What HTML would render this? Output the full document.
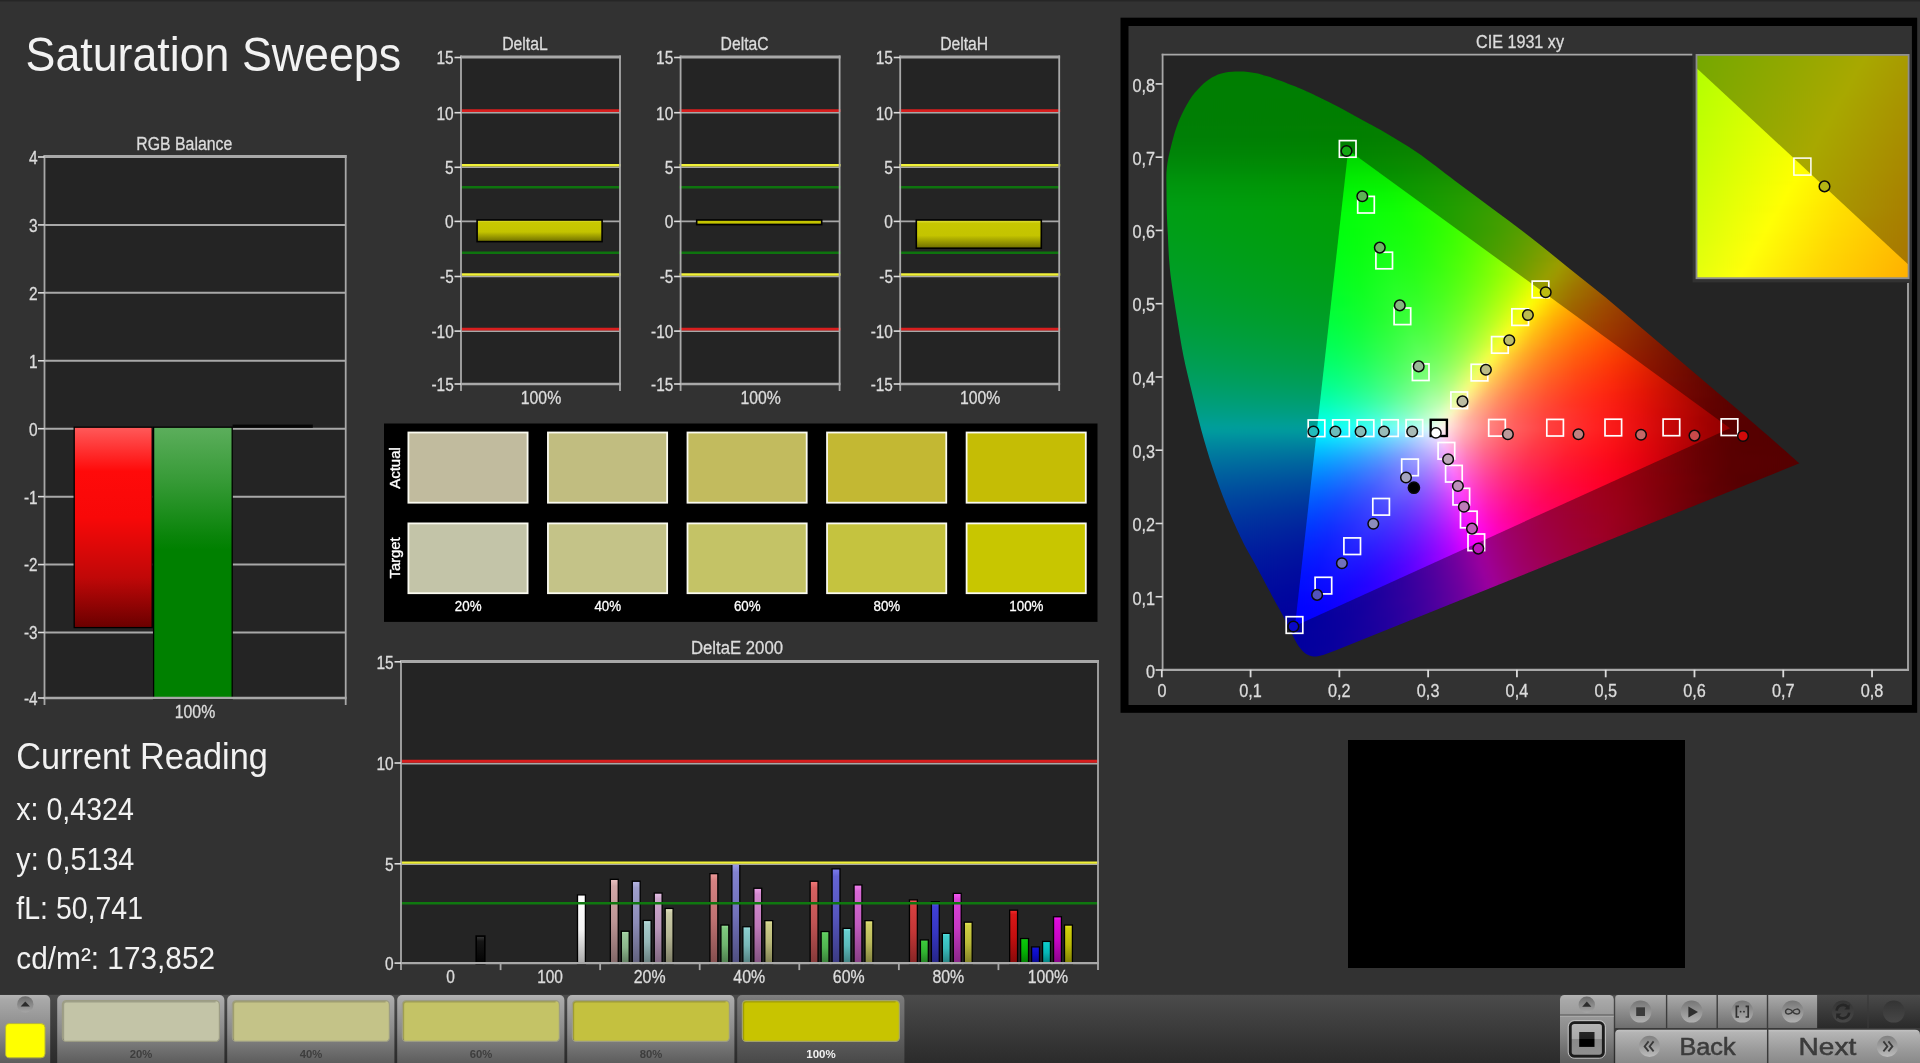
<!DOCTYPE html>
<html lang="en"><head><meta charset="utf-8"><title>Saturation Sweeps</title>
<style>html,body{margin:0;padding:0;background:#323232;overflow:hidden}svg{display:block}text{font-family:'Liberation Sans', sans-serif}</style></head>
<body>
<svg width="1920" height="1063" viewBox="0 0 1920 1063" style="will-change:transform">
<defs>
<linearGradient id="v1" x1="0" y1="0" x2="0" y2="1"><stop offset="0" stop-color="#ff5a5a"/><stop offset="0.22" stop-color="#ff0a0a"/><stop offset="0.45" stop-color="#f80808"/><stop offset="0.75" stop-color="#c00808"/><stop offset="1" stop-color="#6a0000"/></linearGradient>
<linearGradient id="v2" x1="0" y1="0" x2="0" y2="1"><stop offset="0" stop-color="#5cae5c"/><stop offset="0.2" stop-color="#369a36"/><stop offset="0.4" stop-color="#0a840a"/><stop offset="0.45" stop-color="#008000"/><stop offset="1" stop-color="#008000"/></linearGradient>
<linearGradient id="v3" x1="0" y1="0" x2="0" y2="1"><stop offset="0" stop-color="#e6e646"/><stop offset="0.12" stop-color="#c8c800"/><stop offset="0.55" stop-color="#c4c400"/><stop offset="1" stop-color="#6e6e00"/></linearGradient>
<linearGradient id="v4" x1="0" y1="0" x2="0" y2="1"><stop offset="0" stop-color="#e6e646"/><stop offset="0.12" stop-color="#c8c800"/><stop offset="0.55" stop-color="#c4c400"/><stop offset="1" stop-color="#6e6e00"/></linearGradient>
<linearGradient id="v5" x1="0" y1="0" x2="0" y2="1"><stop offset="0" stop-color="#e6e646"/><stop offset="0.12" stop-color="#c8c800"/><stop offset="0.55" stop-color="#c4c400"/><stop offset="1" stop-color="#6e6e00"/></linearGradient>
<linearGradient id="v6" x1="0" y1="0" x2="0" y2="1"><stop offset="0" stop-color="#3c3c3c"/><stop offset="0.18" stop-color="#161616"/><stop offset="1" stop-color="#020202"/></linearGradient>
<linearGradient id="v7" x1="0" y1="0" x2="0" y2="1"><stop offset="0" stop-color="#ffffff"/><stop offset="0.5" stop-color="#f4f4f4"/><stop offset="1" stop-color="#a8a8a8"/></linearGradient>
<linearGradient id="v8" x1="0" y1="0" x2="0" y2="1"><stop offset="0" stop-color="#ebc1c1"/><stop offset="0.08" stop-color="#d1a7a7"/><stop offset="0.5" stop-color="#bc9595"/><stop offset="1" stop-color="#806666"/></linearGradient>
<linearGradient id="v9" x1="0" y1="0" x2="0" y2="1"><stop offset="0" stop-color="#b5e3b5"/><stop offset="0.08" stop-color="#9cc99c"/><stop offset="0.5" stop-color="#8bb58b"/><stop offset="1" stop-color="#5e7b5e"/></linearGradient>
<linearGradient id="v10" x1="0" y1="0" x2="0" y2="1"><stop offset="0" stop-color="#b7b7e5"/><stop offset="0.08" stop-color="#9e9ecb"/><stop offset="0.5" stop-color="#8c8cb7"/><stop offset="1" stop-color="#60607c"/></linearGradient>
<linearGradient id="v11" x1="0" y1="0" x2="0" y2="1"><stop offset="0" stop-color="#c1e5e5"/><stop offset="0.08" stop-color="#a7cbcb"/><stop offset="0.5" stop-color="#95b7b7"/><stop offset="1" stop-color="#667c7c"/></linearGradient>
<linearGradient id="v12" x1="0" y1="0" x2="0" y2="1"><stop offset="0" stop-color="#e7c1e7"/><stop offset="0.08" stop-color="#cda7cd"/><stop offset="0.5" stop-color="#b895b8"/><stop offset="1" stop-color="#7e667e"/></linearGradient>
<linearGradient id="v13" x1="0" y1="0" x2="0" y2="1"><stop offset="0" stop-color="#e5e5c1"/><stop offset="0.08" stop-color="#cbcba7"/><stop offset="0.5" stop-color="#b7b795"/><stop offset="1" stop-color="#7c7c66"/></linearGradient>
<linearGradient id="v14" x1="0" y1="0" x2="0" y2="1"><stop offset="0" stop-color="#ef9a9a"/><stop offset="0.08" stop-color="#d58181"/><stop offset="0.5" stop-color="#bf7272"/><stop offset="1" stop-color="#824e4e"/></linearGradient>
<linearGradient id="v15" x1="0" y1="0" x2="0" y2="1"><stop offset="0" stop-color="#98e398"/><stop offset="0.08" stop-color="#7fc97f"/><stop offset="0.5" stop-color="#70b570"/><stop offset="1" stop-color="#4c7b4c"/></linearGradient>
<linearGradient id="v16" x1="0" y1="0" x2="0" y2="1"><stop offset="0" stop-color="#9a9ae9"/><stop offset="0.08" stop-color="#8181cf"/><stop offset="0.5" stop-color="#7272ba"/><stop offset="1" stop-color="#4e4e7f"/></linearGradient>
<linearGradient id="v17" x1="0" y1="0" x2="0" y2="1"><stop offset="0" stop-color="#a2e7e7"/><stop offset="0.08" stop-color="#89cdcd"/><stop offset="0.5" stop-color="#79b8b8"/><stop offset="1" stop-color="#527e7e"/></linearGradient>
<linearGradient id="v18" x1="0" y1="0" x2="0" y2="1"><stop offset="0" stop-color="#eda2e9"/><stop offset="0.08" stop-color="#d389cf"/><stop offset="0.5" stop-color="#be79ba"/><stop offset="1" stop-color="#81527f"/></linearGradient>
<linearGradient id="v19" x1="0" y1="0" x2="0" y2="1"><stop offset="0" stop-color="#e7e7a2"/><stop offset="0.08" stop-color="#cdcd89"/><stop offset="0.5" stop-color="#b8b879"/><stop offset="1" stop-color="#7e7e52"/></linearGradient>
<linearGradient id="v20" x1="0" y1="0" x2="0" y2="1"><stop offset="0" stop-color="#f17a7a"/><stop offset="0.08" stop-color="#d76161"/><stop offset="0.5" stop-color="#c15454"/><stop offset="1" stop-color="#843939"/></linearGradient>
<linearGradient id="v21" x1="0" y1="0" x2="0" y2="1"><stop offset="0" stop-color="#76e376"/><stop offset="0.08" stop-color="#5dc95d"/><stop offset="0.5" stop-color="#50b550"/><stop offset="1" stop-color="#377b37"/></linearGradient>
<linearGradient id="v22" x1="0" y1="0" x2="0" y2="1"><stop offset="0" stop-color="#7c7ced"/><stop offset="0.08" stop-color="#6363d3"/><stop offset="0.5" stop-color="#5656be"/><stop offset="1" stop-color="#3a3a81"/></linearGradient>
<linearGradient id="v23" x1="0" y1="0" x2="0" y2="1"><stop offset="0" stop-color="#81e9e9"/><stop offset="0.08" stop-color="#68cfcf"/><stop offset="0.5" stop-color="#5bbaba"/><stop offset="1" stop-color="#3e7f7f"/></linearGradient>
<linearGradient id="v24" x1="0" y1="0" x2="0" y2="1"><stop offset="0" stop-color="#f181ef"/><stop offset="0.08" stop-color="#d768d5"/><stop offset="0.5" stop-color="#c15bbf"/><stop offset="1" stop-color="#843e82"/></linearGradient>
<linearGradient id="v25" x1="0" y1="0" x2="0" y2="1"><stop offset="0" stop-color="#e9e981"/><stop offset="0.08" stop-color="#cfcf68"/><stop offset="0.5" stop-color="#baba5b"/><stop offset="1" stop-color="#7f7f3e"/></linearGradient>
<linearGradient id="v26" x1="0" y1="0" x2="0" y2="1"><stop offset="0" stop-color="#f35959"/><stop offset="0.08" stop-color="#d84040"/><stop offset="0.5" stop-color="#c33636"/><stop offset="1" stop-color="#852525"/></linearGradient>
<linearGradient id="v27" x1="0" y1="0" x2="0" y2="1"><stop offset="0" stop-color="#53e353"/><stop offset="0.08" stop-color="#3bc93b"/><stop offset="0.5" stop-color="#31b531"/><stop offset="1" stop-color="#217b21"/></linearGradient>
<linearGradient id="v28" x1="0" y1="0" x2="0" y2="1"><stop offset="0" stop-color="#5959f1"/><stop offset="0.08" stop-color="#4040d7"/><stop offset="0.5" stop-color="#3636c1"/><stop offset="1" stop-color="#252584"/></linearGradient>
<linearGradient id="v29" x1="0" y1="0" x2="0" y2="1"><stop offset="0" stop-color="#5be9e9"/><stop offset="0.08" stop-color="#42cfcf"/><stop offset="0.5" stop-color="#38baba"/><stop offset="1" stop-color="#267f7f"/></linearGradient>
<linearGradient id="v30" x1="0" y1="0" x2="0" y2="1"><stop offset="0" stop-color="#f55bf3"/><stop offset="0.08" stop-color="#da42d8"/><stop offset="0.5" stop-color="#c538c3"/><stop offset="1" stop-color="#862685"/></linearGradient>
<linearGradient id="v31" x1="0" y1="0" x2="0" y2="1"><stop offset="0" stop-color="#e9e95b"/><stop offset="0.08" stop-color="#cfcf42"/><stop offset="0.5" stop-color="#baba38"/><stop offset="1" stop-color="#7f7f26"/></linearGradient>
<linearGradient id="v32" x1="0" y1="0" x2="0" y2="1"><stop offset="0" stop-color="#f32f2f"/><stop offset="0.08" stop-color="#d81717"/><stop offset="0.5" stop-color="#c30f0f"/><stop offset="1" stop-color="#850a0a"/></linearGradient>
<linearGradient id="v33" x1="0" y1="0" x2="0" y2="1"><stop offset="0" stop-color="#23e123"/><stop offset="0.08" stop-color="#0bc70b"/><stop offset="0.5" stop-color="#05b305"/><stop offset="1" stop-color="#037a03"/></linearGradient>
<linearGradient id="v34" x1="0" y1="0" x2="0" y2="1"><stop offset="0" stop-color="#2b2bf1"/><stop offset="0.08" stop-color="#1313d7"/><stop offset="0.5" stop-color="#0c0cc1"/><stop offset="1" stop-color="#080884"/></linearGradient>
<linearGradient id="v35" x1="0" y1="0" x2="0" y2="1"><stop offset="0" stop-color="#23e5e5"/><stop offset="0.08" stop-color="#0bcbcb"/><stop offset="0.5" stop-color="#05b7b7"/><stop offset="1" stop-color="#037c7c"/></linearGradient>
<linearGradient id="v36" x1="0" y1="0" x2="0" y2="1"><stop offset="0" stop-color="#f623f5"/><stop offset="0.08" stop-color="#dc0bda"/><stop offset="0.5" stop-color="#c605c5"/><stop offset="1" stop-color="#870386"/></linearGradient>
<linearGradient id="v37" x1="0" y1="0" x2="0" y2="1"><stop offset="0" stop-color="#e9e923"/><stop offset="0.08" stop-color="#cfcf0b"/><stop offset="0.5" stop-color="#baba05"/><stop offset="1" stop-color="#7f7f03"/></linearGradient>
<filter id="vb" x="-2%" y="-2%" width="104%" height="104%" color-interpolation-filters="sRGB"><feGaussianBlur stdDeviation="0 1.7"/></filter>
<clipPath id="ch"><path d="M1323.3 655.1C1322.0 655.4 1318.3 656.6 1315.8 656.6C1313.3 656.6 1310.6 656.1 1308.3 655.1C1306.0 654.1 1304.2 652.7 1302.2 650.6C1300.2 648.5 1298.2 645.7 1296.2 642.3C1294.2 638.9 1292.5 634.8 1290.2 630.3C1288.0 625.8 1285.5 620.6 1282.7 615.3C1279.9 610.0 1276.9 604.7 1273.6 598.7C1270.3 592.7 1266.6 585.6 1263.1 579.1C1259.6 572.6 1256.1 566.1 1252.6 559.6C1249.1 553.1 1246.3 549.0 1242.0 540.0C1237.7 531.0 1231.5 517.7 1226.6 505.7C1221.7 493.7 1216.9 480.6 1212.7 468.1C1208.5 455.6 1204.9 443.0 1201.4 430.5C1198.0 418.0 1195.0 405.4 1192.0 392.9C1189.0 380.3 1185.8 367.8 1183.3 355.2C1180.8 342.6 1178.9 330.0 1176.9 317.6C1174.9 305.2 1172.6 290.7 1171.3 280.8C1170.0 270.9 1169.6 265.7 1169.0 258.2C1168.4 250.7 1168.3 243.1 1167.9 235.6C1167.5 228.1 1167.0 220.5 1166.8 213.0C1166.6 205.5 1166.5 198.0 1166.5 190.5C1166.5 183.0 1166.0 175.4 1166.8 167.9C1167.6 160.4 1169.4 152.8 1171.3 145.3C1173.2 137.8 1175.1 130.2 1178.1 122.7C1181.1 115.2 1185.7 106.2 1189.4 100.2C1193.2 94.2 1196.8 90.4 1200.6 86.6C1204.3 82.8 1207.8 80.0 1211.9 77.6C1216.1 75.2 1219.5 73.4 1225.5 72.4C1231.5 71.5 1240.9 71.2 1248.1 71.9C1255.2 72.6 1260.5 74.0 1268.4 76.4C1276.3 78.9 1287.2 83.2 1295.5 86.6C1303.8 90.0 1310.6 93.2 1318.1 96.8C1325.6 100.4 1333.1 104.1 1340.6 108.1C1348.1 112.0 1355.7 116.4 1363.2 120.5C1370.7 124.6 1376.7 127.5 1385.8 132.9C1394.9 138.3 1406.0 144.7 1417.6 152.7C1429.2 160.7 1442.7 171.5 1455.2 180.9C1467.8 190.3 1480.4 199.7 1492.9 209.1C1505.5 218.5 1518.0 227.6 1530.5 237.3C1543.0 247.0 1555.6 257.4 1568.1 267.4C1580.6 277.4 1593.2 287.1 1605.7 297.5C1618.2 307.9 1630.9 318.8 1643.4 329.5C1656.0 340.2 1668.5 350.8 1681.0 361.5C1693.5 372.2 1706.1 382.9 1718.6 393.5C1731.1 404.1 1742.7 413.8 1756.2 425.4C1769.7 437.0 1792.3 457.0 1799.5 463.3L1335.4 650.6Z"/></clipPath>
<clipPath id="ct"><polygon points="1348.2,149.9 1730.0,428.2 1295.0,626.0"/></clipPath>
<linearGradient id="h7" gradientUnits="userSpaceOnUse" x1="1185" x2="1332" y1="0" y2="0"><stop offset="0.000" stop-color="#007e03"/><stop offset="1.000" stop-color="#007e00"/></linearGradient>
<linearGradient id="h8" gradientUnits="userSpaceOnUse" x1="1183" x2="1340" y1="0" y2="0"><stop offset="0.000" stop-color="#007e03"/><stop offset="1.000" stop-color="#007e00"/></linearGradient>
<linearGradient id="h9" gradientUnits="userSpaceOnUse" x1="1181" x2="1347" y1="0" y2="0"><stop offset="0.000" stop-color="#007e03"/><stop offset="1.000" stop-color="#007e00"/></linearGradient>
<linearGradient id="h10" gradientUnits="userSpaceOnUse" x1="1179" x2="1354" y1="0" y2="0"><stop offset="0.000" stop-color="#007e04"/><stop offset="1.000" stop-color="#007e00"/></linearGradient>
<linearGradient id="h11" gradientUnits="userSpaceOnUse" x1="1177" x2="1362" y1="0" y2="0"><stop offset="0.000" stop-color="#007e04"/><stop offset="1.000" stop-color="#007e00"/></linearGradient>
<linearGradient id="h12" gradientUnits="userSpaceOnUse" x1="1175" x2="1369" y1="0" y2="0"><stop offset="0.000" stop-color="#007e04"/><stop offset="1.000" stop-color="#017e00"/></linearGradient>
<linearGradient id="h13" gradientUnits="userSpaceOnUse" x1="1174" x2="1376" y1="0" y2="0"><stop offset="0.000" stop-color="#007e05"/><stop offset="1.000" stop-color="#027e00"/></linearGradient>
<linearGradient id="h14" gradientUnits="userSpaceOnUse" x1="1172" x2="1384" y1="0" y2="0"><stop offset="0.000" stop-color="#007f05"/><stop offset="1.000" stop-color="#037f00"/></linearGradient>
<linearGradient id="h15" gradientUnits="userSpaceOnUse" x1="1171" x2="1391" y1="0" y2="0"><stop offset="0.000" stop-color="#007f06"/><stop offset="0.818" stop-color="#007f00"/><stop offset="1.000" stop-color="#047f00"/></linearGradient>
<linearGradient id="h16" gradientUnits="userSpaceOnUse" x1="1170" x2="1397" y1="0" y2="0"><stop offset="0.000" stop-color="#007f06"/><stop offset="0.793" stop-color="#007f00"/><stop offset="1.000" stop-color="#057f00"/></linearGradient>
<linearGradient id="h17" gradientUnits="userSpaceOnUse" x1="1169" x2="1404" y1="0" y2="0"><stop offset="0.000" stop-color="#008007"/><stop offset="0.774" stop-color="#008000"/><stop offset="1.000" stop-color="#068000"/></linearGradient>
<linearGradient id="h18" gradientUnits="userSpaceOnUse" x1="1168" x2="1410" y1="0" y2="0"><stop offset="0.000" stop-color="#008107"/><stop offset="0.760" stop-color="#008100"/><stop offset="1.000" stop-color="#088100"/></linearGradient>
<linearGradient id="h19" gradientUnits="userSpaceOnUse" x1="1167" x2="1417" y1="0" y2="0"><stop offset="0.000" stop-color="#008308"/><stop offset="0.736" stop-color="#008300"/><stop offset="1.000" stop-color="#0a8300"/></linearGradient>
<linearGradient id="h20" gradientUnits="userSpaceOnUse" x1="1166" x2="1422" y1="0" y2="0"><stop offset="0.000" stop-color="#008408"/><stop offset="0.727" stop-color="#008400"/><stop offset="1.000" stop-color="#0b8400"/></linearGradient>
<linearGradient id="h21" gradientUnits="userSpaceOnUse" x1="1165" x2="1428" y1="0" y2="0"><stop offset="0.000" stop-color="#008609"/><stop offset="0.715" stop-color="#008600"/><stop offset="1.000" stop-color="#0d8600"/></linearGradient>
<linearGradient id="h22" gradientUnits="userSpaceOnUse" x1="1165" x2="1433" y1="0" y2="0"><stop offset="0.000" stop-color="#008809"/><stop offset="0.716" stop-color="#018800"/><stop offset="1.000" stop-color="#0f8800"/></linearGradient>
<linearGradient id="h23" gradientUnits="userSpaceOnUse" x1="1164" x2="1439" y1="0" y2="0"><stop offset="0.000" stop-color="#008a0a"/><stop offset="0.713" stop-color="#018a00"/><stop offset="1.000" stop-color="#118a00"/></linearGradient>
<linearGradient id="h24" gradientUnits="userSpaceOnUse" x1="1164" x2="1444" y1="0" y2="0"><stop offset="0.000" stop-color="#008c0b"/><stop offset="0.657" stop-color="#008c01"/><stop offset="0.821" stop-color="#068c00"/><stop offset="1.000" stop-color="#148c00"/></linearGradient>
<linearGradient id="h25" gradientUnits="userSpaceOnUse" x1="1163" x2="1449" y1="0" y2="0"><stop offset="0.000" stop-color="#008e0c"/><stop offset="0.643" stop-color="#008e01"/><stop offset="0.811" stop-color="#078e00"/><stop offset="1.000" stop-color="#168e00"/></linearGradient>
<linearGradient id="h26" gradientUnits="userSpaceOnUse" x1="1163" x2="1454" y1="0" y2="0"><stop offset="0.000" stop-color="#00910c"/><stop offset="0.632" stop-color="#009101"/><stop offset="0.804" stop-color="#079100"/><stop offset="1.000" stop-color="#199100"/></linearGradient>
<linearGradient id="h27" gradientUnits="userSpaceOnUse" x1="1163" x2="1460" y1="0" y2="0"><stop offset="0.000" stop-color="#00930d"/><stop offset="0.620" stop-color="#009301"/><stop offset="0.801" stop-color="#099300"/><stop offset="1.000" stop-color="#1c9300"/></linearGradient>
<linearGradient id="h28" gradientUnits="userSpaceOnUse" x1="1163" x2="1465" y1="0" y2="0"><stop offset="0.000" stop-color="#00950e"/><stop offset="0.609" stop-color="#009502"/><stop offset="0.795" stop-color="#0a9500"/><stop offset="1.000" stop-color="#1f9500"/></linearGradient>
<linearGradient id="h29" gradientUnits="userSpaceOnUse" x1="1163" x2="1470" y1="0" y2="0"><stop offset="0.000" stop-color="#00970f"/><stop offset="0.599" stop-color="#009702"/><stop offset="0.782" stop-color="#0a9700"/><stop offset="1.000" stop-color="#239700"/></linearGradient>
<linearGradient id="h30" gradientUnits="userSpaceOnUse" x1="1163" x2="1476" y1="0" y2="0"><stop offset="0.000" stop-color="#009810"/><stop offset="0.588" stop-color="#019803"/><stop offset="0.767" stop-color="#0a9800"/><stop offset="1.000" stop-color="#279800"/></linearGradient>
<linearGradient id="h31" gradientUnits="userSpaceOnUse" x1="1164" x2="1481" y1="0" y2="0"><stop offset="0.000" stop-color="#009a11"/><stop offset="0.574" stop-color="#009a03"/><stop offset="0.763" stop-color="#0b9a00"/><stop offset="1.000" stop-color="#2b9a00"/></linearGradient>
<linearGradient id="h32" gradientUnits="userSpaceOnUse" x1="1164" x2="1486" y1="0" y2="0"><stop offset="0.000" stop-color="#009b12"/><stop offset="0.547" stop-color="#009b04"/><stop offset="0.677" stop-color="#069b03"/><stop offset="0.839" stop-color="#169b00"/><stop offset="1.000" stop-color="#309b00"/></linearGradient>
<linearGradient id="h33" gradientUnits="userSpaceOnUse" x1="1164" x2="1492" y1="0" y2="0"><stop offset="0.000" stop-color="#009c13"/><stop offset="0.537" stop-color="#009c04"/><stop offset="0.671" stop-color="#079c03"/><stop offset="0.835" stop-color="#189c00"/><stop offset="1.000" stop-color="#359c00"/></linearGradient>
<linearGradient id="h34" gradientUnits="userSpaceOnUse" x1="1164" x2="1497" y1="0" y2="0"><stop offset="0.000" stop-color="#009d14"/><stop offset="0.529" stop-color="#009d05"/><stop offset="0.667" stop-color="#079d04"/><stop offset="0.835" stop-color="#1b9d00"/><stop offset="1.000" stop-color="#399d00"/></linearGradient>
<linearGradient id="h35" gradientUnits="userSpaceOnUse" x1="1164" x2="1502" y1="0" y2="0"><stop offset="0.000" stop-color="#009e15"/><stop offset="0.515" stop-color="#009e06"/><stop offset="0.663" stop-color="#089e04"/><stop offset="0.834" stop-color="#1d9e00"/><stop offset="1.000" stop-color="#3f9e00"/></linearGradient>
<linearGradient id="h36" gradientUnits="userSpaceOnUse" x1="1164" x2="1508" y1="0" y2="0"><stop offset="0.000" stop-color="#009e15"/><stop offset="0.506" stop-color="#009e06"/><stop offset="0.657" stop-color="#099e05"/><stop offset="0.738" stop-color="#119e02"/><stop offset="0.831" stop-color="#209e00"/><stop offset="1.000" stop-color="#459e00"/></linearGradient>
<linearGradient id="h37" gradientUnits="userSpaceOnUse" x1="1164" x2="1513" y1="0" y2="0"><stop offset="0.000" stop-color="#009e16"/><stop offset="0.499" stop-color="#009e07"/><stop offset="0.659" stop-color="#0a9e05"/><stop offset="0.739" stop-color="#139e02"/><stop offset="0.831" stop-color="#239e00"/><stop offset="1.000" stop-color="#4a9e00"/></linearGradient>
<linearGradient id="h38" gradientUnits="userSpaceOnUse" x1="1164" x2="1519" y1="0" y2="0"><stop offset="0.000" stop-color="#009e17"/><stop offset="0.490" stop-color="#009e08"/><stop offset="0.654" stop-color="#0b9e06"/><stop offset="0.738" stop-color="#159e02"/><stop offset="0.828" stop-color="#269e00"/><stop offset="1.000" stop-color="#519e00"/></linearGradient>
<linearGradient id="h39" gradientUnits="userSpaceOnUse" x1="1164" x2="1524" y1="0" y2="0"><stop offset="0.000" stop-color="#009e18"/><stop offset="0.483" stop-color="#009e08"/><stop offset="0.650" stop-color="#0c9e06"/><stop offset="0.733" stop-color="#179e03"/><stop offset="0.822" stop-color="#289e00"/><stop offset="0.911" stop-color="#3d9e00"/><stop offset="1.000" stop-color="#589e00"/></linearGradient>
<linearGradient id="h40" gradientUnits="userSpaceOnUse" x1="1165" x2="1529" y1="0" y2="0"><stop offset="0.000" stop-color="#009e19"/><stop offset="0.473" stop-color="#009e09"/><stop offset="0.648" stop-color="#0d9e07"/><stop offset="0.725" stop-color="#179e03"/><stop offset="0.808" stop-color="#289e00"/><stop offset="0.907" stop-color="#419e00"/><stop offset="1.000" stop-color="#5e9e00"/></linearGradient>
<linearGradient id="h41" gradientUnits="userSpaceOnUse" x1="1165" x2="1534" y1="0" y2="0"><stop offset="0.000" stop-color="#009e1a"/><stop offset="0.466" stop-color="#009e0a"/><stop offset="0.645" stop-color="#0e9e07"/><stop offset="0.721" stop-color="#199e04"/><stop offset="0.802" stop-color="#2a9e00"/><stop offset="0.905" stop-color="#469e00"/><stop offset="1.000" stop-color="#669e00"/></linearGradient>
<linearGradient id="h42" gradientUnits="userSpaceOnUse" x1="1165" x2="1540" y1="0" y2="0"><stop offset="0.000" stop-color="#009e1b"/><stop offset="0.459" stop-color="#009e0b"/><stop offset="0.640" stop-color="#0f9e08"/><stop offset="0.720" stop-color="#1b9e04"/><stop offset="0.800" stop-color="#2e9e01"/><stop offset="0.907" stop-color="#4d9e00"/><stop offset="1.000" stop-color="#6f9e00"/></linearGradient>
<linearGradient id="h43" gradientUnits="userSpaceOnUse" x1="1165" x2="1545" y1="0" y2="0"><stop offset="0.000" stop-color="#009e1d"/><stop offset="0.453" stop-color="#009e0b"/><stop offset="0.642" stop-color="#119e08"/><stop offset="0.721" stop-color="#1e9e04"/><stop offset="0.805" stop-color="#339e01"/><stop offset="0.911" stop-color="#549e00"/><stop offset="1.000" stop-color="#779e00"/></linearGradient>
<linearGradient id="h44" gradientUnits="userSpaceOnUse" x1="1165" x2="1550" y1="0" y2="0"><stop offset="0.000" stop-color="#009e1e"/><stop offset="0.447" stop-color="#009e0c"/><stop offset="0.639" stop-color="#129e09"/><stop offset="0.722" stop-color="#219e05"/><stop offset="0.805" stop-color="#379e01"/><stop offset="0.909" stop-color="#5a9e00"/><stop offset="1.000" stop-color="#819e00"/></linearGradient>
<linearGradient id="h45" gradientUnits="userSpaceOnUse" x1="1166" x2="1554" y1="0" y2="0"><stop offset="0.000" stop-color="#009e1f"/><stop offset="0.438" stop-color="#009e0d"/><stop offset="0.639" stop-color="#149e09"/><stop offset="0.722" stop-color="#249e05"/><stop offset="0.804" stop-color="#3b9e01"/><stop offset="0.907" stop-color="#5f9e00"/><stop offset="1.000" stop-color="#899e00"/></linearGradient>
<linearGradient id="h46" gradientUnits="userSpaceOnUse" x1="1166" x2="1559" y1="0" y2="0"><stop offset="0.000" stop-color="#009e20"/><stop offset="0.433" stop-color="#009e0e"/><stop offset="0.560" stop-color="#0f9e0e"/><stop offset="0.636" stop-color="#169e0a"/><stop offset="0.723" stop-color="#279e05"/><stop offset="0.809" stop-color="#419e01"/><stop offset="0.911" stop-color="#689e00"/><stop offset="1.000" stop-color="#949e00"/></linearGradient>
<linearGradient id="h47" gradientUnits="userSpaceOnUse" x1="1166" x2="1564" y1="0" y2="0"><stop offset="0.000" stop-color="#009e21"/><stop offset="0.427" stop-color="#009e0f"/><stop offset="0.487" stop-color="#069e0d"/><stop offset="0.558" stop-color="#109e0f"/><stop offset="0.633" stop-color="#179e0b"/><stop offset="0.714" stop-color="#289e06"/><stop offset="0.799" stop-color="#439e02"/><stop offset="0.894" stop-color="#699e00"/><stop offset="1.000" stop-color="#9c9b00"/></linearGradient>
<linearGradient id="h48" gradientUnits="userSpaceOnUse" x1="1166" x2="1569" y1="0" y2="0"><stop offset="0.000" stop-color="#009e23"/><stop offset="0.422" stop-color="#009e10"/><stop offset="0.486" stop-color="#079e0e"/><stop offset="0.551" stop-color="#119e10"/><stop offset="0.625" stop-color="#189e0c"/><stop offset="0.700" stop-color="#289e08"/><stop offset="0.779" stop-color="#409e03"/><stop offset="0.878" stop-color="#699e00"/><stop offset="0.963" stop-color="#959e00"/><stop offset="0.983" stop-color="#9d9a00"/><stop offset="1.000" stop-color="#9e9200"/></linearGradient>
<linearGradient id="h49" gradientUnits="userSpaceOnUse" x1="1167" x2="1574" y1="0" y2="0"><stop offset="0.000" stop-color="#009e24"/><stop offset="0.413" stop-color="#009e12"/><stop offset="0.482" stop-color="#089e0e"/><stop offset="0.545" stop-color="#129e11"/><stop offset="0.614" stop-color="#189e0d"/><stop offset="0.693" stop-color="#299e08"/><stop offset="0.771" stop-color="#439e04"/><stop offset="0.865" stop-color="#6b9e00"/><stop offset="0.943" stop-color="#949e00"/><stop offset="0.963" stop-color="#9d9a00"/><stop offset="1.000" stop-color="#9e8700"/></linearGradient>
<linearGradient id="h50" gradientUnits="userSpaceOnUse" x1="1167" x2="1579" y1="0" y2="0"><stop offset="0.000" stop-color="#009e25"/><stop offset="0.408" stop-color="#009e13"/><stop offset="0.476" stop-color="#089e0f"/><stop offset="0.544" stop-color="#139e12"/><stop offset="0.607" stop-color="#199e0f"/><stop offset="0.684" stop-color="#2a9e0a"/><stop offset="0.762" stop-color="#459e05"/><stop offset="0.845" stop-color="#699e00"/><stop offset="0.927" stop-color="#969e00"/><stop offset="0.951" stop-color="#9e9700"/><stop offset="1.000" stop-color="#9e7e00"/></linearGradient>
<linearGradient id="h51" gradientUnits="userSpaceOnUse" x1="1167" x2="1584" y1="0" y2="0"><stop offset="0.000" stop-color="#009e27"/><stop offset="0.403" stop-color="#009e14"/><stop offset="0.595" stop-color="#199e10"/><stop offset="0.671" stop-color="#2a9e0b"/><stop offset="0.748" stop-color="#449e06"/><stop offset="0.825" stop-color="#679e01"/><stop offset="0.911" stop-color="#979e00"/><stop offset="0.935" stop-color="#9e9600"/><stop offset="1.000" stop-color="#9e7400"/></linearGradient>
<linearGradient id="h52" gradientUnits="userSpaceOnUse" x1="1168" x2="1589" y1="0" y2="0"><stop offset="0.000" stop-color="#009e28"/><stop offset="0.394" stop-color="#009e15"/><stop offset="0.589" stop-color="#1a9e11"/><stop offset="0.660" stop-color="#2b9e0d"/><stop offset="0.736" stop-color="#459e07"/><stop offset="0.812" stop-color="#689e02"/><stop offset="0.893" stop-color="#979e00"/><stop offset="0.917" stop-color="#9e9600"/><stop offset="1.000" stop-color="#9e6c00"/></linearGradient>
<linearGradient id="h53" gradientUnits="userSpaceOnUse" x1="1168" x2="1594" y1="0" y2="0"><stop offset="0.000" stop-color="#009e2a"/><stop offset="0.390" stop-color="#009e17"/><stop offset="0.455" stop-color="#099e13"/><stop offset="0.531" stop-color="#169e16"/><stop offset="0.582" stop-color="#1b9e13"/><stop offset="0.653" stop-color="#2c9e0e"/><stop offset="0.728" stop-color="#479e08"/><stop offset="0.798" stop-color="#699e03"/><stop offset="0.878" stop-color="#989d00"/><stop offset="0.901" stop-color="#9e9400"/><stop offset="0.948" stop-color="#9e7b00"/><stop offset="1.000" stop-color="#9e6400"/></linearGradient>
<linearGradient id="h54" gradientUnits="userSpaceOnUse" x1="1169" x2="1599" y1="0" y2="0"><stop offset="0.000" stop-color="#009e2b"/><stop offset="0.381" stop-color="#009e18"/><stop offset="0.451" stop-color="#0a9e14"/><stop offset="0.526" stop-color="#189e17"/><stop offset="0.572" stop-color="#1c9e15"/><stop offset="0.642" stop-color="#2c9e0f"/><stop offset="0.712" stop-color="#469e0a"/><stop offset="0.781" stop-color="#689e05"/><stop offset="0.860" stop-color="#989d00"/><stop offset="0.884" stop-color="#9e9400"/><stop offset="0.940" stop-color="#9e7600"/><stop offset="1.000" stop-color="#9e5c00"/></linearGradient>
<linearGradient id="h55" gradientUnits="userSpaceOnUse" x1="1170" x2="1604" y1="0" y2="0"><stop offset="0.000" stop-color="#009e2d"/><stop offset="0.378" stop-color="#009e19"/><stop offset="0.442" stop-color="#099e15"/><stop offset="0.521" stop-color="#199e19"/><stop offset="0.571" stop-color="#1e9e16"/><stop offset="0.636" stop-color="#2e9e11"/><stop offset="0.700" stop-color="#479e0c"/><stop offset="0.770" stop-color="#699e06"/><stop offset="0.839" stop-color="#959e01"/><stop offset="0.866" stop-color="#9e9400"/><stop offset="0.926" stop-color="#9e7300"/><stop offset="1.000" stop-color="#9d5500"/></linearGradient>
<linearGradient id="h56" gradientUnits="userSpaceOnUse" x1="1170" x2="1609" y1="0" y2="0"><stop offset="0.000" stop-color="#009e2e"/><stop offset="0.369" stop-color="#009e1b"/><stop offset="0.442" stop-color="#0b9e16"/><stop offset="0.519" stop-color="#1b9e1a"/><stop offset="0.565" stop-color="#209e17"/><stop offset="0.629" stop-color="#309e12"/><stop offset="0.692" stop-color="#499e0d"/><stop offset="0.756" stop-color="#6a9e08"/><stop offset="0.825" stop-color="#969e02"/><stop offset="0.852" stop-color="#9e9301"/><stop offset="0.916" stop-color="#9e7000"/><stop offset="1.000" stop-color="#9c4e00"/></linearGradient>
<linearGradient id="h57" gradientUnits="userSpaceOnUse" x1="1171" x2="1614" y1="0" y2="0"><stop offset="0.000" stop-color="#009e30"/><stop offset="0.366" stop-color="#009e1d"/><stop offset="0.438" stop-color="#0b9e18"/><stop offset="0.515" stop-color="#1c9e1c"/><stop offset="0.560" stop-color="#219e19"/><stop offset="0.619" stop-color="#309e14"/><stop offset="0.682" stop-color="#4a9e0f"/><stop offset="0.745" stop-color="#6c9e09"/><stop offset="0.808" stop-color="#959e04"/><stop offset="0.835" stop-color="#9e9302"/><stop offset="0.907" stop-color="#9e6b00"/><stop offset="1.000" stop-color="#9a4700"/></linearGradient>
<linearGradient id="h58" gradientUnits="userSpaceOnUse" x1="1171" x2="1619" y1="0" y2="0"><stop offset="0.000" stop-color="#009e32"/><stop offset="0.353" stop-color="#009e1f"/><stop offset="0.415" stop-color="#089e1a"/><stop offset="0.513" stop-color="#1e9e1d"/><stop offset="0.567" stop-color="#259e19"/><stop offset="0.625" stop-color="#379e15"/><stop offset="0.705" stop-color="#5c9e0e"/><stop offset="0.790" stop-color="#949e06"/><stop offset="0.804" stop-color="#9b9b05"/><stop offset="0.821" stop-color="#9e9103"/><stop offset="0.897" stop-color="#9e6700"/><stop offset="0.955" stop-color="#9e5100"/><stop offset="1.000" stop-color="#994100"/></linearGradient>
<linearGradient id="h59" gradientUnits="userSpaceOnUse" x1="1172" x2="1624" y1="0" y2="0"><stop offset="0.000" stop-color="#009e34"/><stop offset="0.345" stop-color="#009e21"/><stop offset="0.412" stop-color="#099e1b"/><stop offset="0.513" stop-color="#209e1f"/><stop offset="0.562" stop-color="#279e1b"/><stop offset="0.615" stop-color="#389e16"/><stop offset="0.695" stop-color="#5e9e0f"/><stop offset="0.779" stop-color="#969d07"/><stop offset="0.801" stop-color="#9e9405"/><stop offset="0.841" stop-color="#9e7b02"/><stop offset="0.885" stop-color="#9e6500"/><stop offset="0.951" stop-color="#9d4b00"/><stop offset="1.000" stop-color="#973b00"/></linearGradient>
<linearGradient id="h60" gradientUnits="userSpaceOnUse" x1="1173" x2="1628" y1="0" y2="0"><stop offset="0.000" stop-color="#009e35"/><stop offset="0.338" stop-color="#009e23"/><stop offset="0.404" stop-color="#099e1d"/><stop offset="0.457" stop-color="#159e1c"/><stop offset="0.510" stop-color="#219e20"/><stop offset="0.554" stop-color="#289e1d"/><stop offset="0.607" stop-color="#389e18"/><stop offset="0.686" stop-color="#609e11"/><stop offset="0.765" stop-color="#969d0a"/><stop offset="0.787" stop-color="#9e9407"/><stop offset="0.826" stop-color="#9e7a03"/><stop offset="0.870" stop-color="#9e6400"/><stop offset="0.945" stop-color="#9d4800"/><stop offset="1.000" stop-color="#953600"/></linearGradient>
<linearGradient id="h61" gradientUnits="userSpaceOnUse" x1="1173" x2="1633" y1="0" y2="0"><stop offset="0.000" stop-color="#009e37"/><stop offset="0.335" stop-color="#009e25"/><stop offset="0.396" stop-color="#099e1f"/><stop offset="0.452" stop-color="#169e1e"/><stop offset="0.504" stop-color="#239e22"/><stop offset="0.548" stop-color="#299e1f"/><stop offset="0.596" stop-color="#399e1b"/><stop offset="0.670" stop-color="#5d9e14"/><stop offset="0.748" stop-color="#949e0c"/><stop offset="0.770" stop-color="#9e9509"/><stop offset="0.813" stop-color="#9e7804"/><stop offset="0.857" stop-color="#9e6201"/><stop offset="0.935" stop-color="#9d4500"/><stop offset="1.000" stop-color="#923100"/></linearGradient>
<linearGradient id="h62" gradientUnits="userSpaceOnUse" x1="1174" x2="1638" y1="0" y2="0"><stop offset="0.000" stop-color="#009e39"/><stop offset="0.328" stop-color="#009e27"/><stop offset="0.388" stop-color="#089e21"/><stop offset="0.448" stop-color="#179e1f"/><stop offset="0.504" stop-color="#259e24"/><stop offset="0.547" stop-color="#2d9e21"/><stop offset="0.591" stop-color="#3b9e1d"/><stop offset="0.659" stop-color="#5f9e16"/><stop offset="0.733" stop-color="#949e0e"/><stop offset="0.754" stop-color="#9e950c"/><stop offset="0.802" stop-color="#9e7506"/><stop offset="0.849" stop-color="#9e5e02"/><stop offset="0.931" stop-color="#9d4100"/><stop offset="1.000" stop-color="#902c00"/></linearGradient>
<linearGradient id="h63" gradientUnits="userSpaceOnUse" x1="1175" x2="1642" y1="0" y2="0"><stop offset="0.000" stop-color="#009e3b"/><stop offset="0.325" stop-color="#009e29"/><stop offset="0.381" stop-color="#089e23"/><stop offset="0.445" stop-color="#189e21"/><stop offset="0.501" stop-color="#279e26"/><stop offset="0.540" stop-color="#2e9e23"/><stop offset="0.582" stop-color="#3c9e1f"/><stop offset="0.651" stop-color="#619e18"/><stop offset="0.719" stop-color="#949e11"/><stop offset="0.732" stop-color="#9b9a0f"/><stop offset="0.745" stop-color="#9e920d"/><stop offset="0.788" stop-color="#9e7507"/><stop offset="0.839" stop-color="#9e5b02"/><stop offset="0.925" stop-color="#9c3d00"/><stop offset="1.000" stop-color="#8d2800"/></linearGradient>
<linearGradient id="h64" gradientUnits="userSpaceOnUse" x1="1175" x2="1647" y1="0" y2="0"><stop offset="0.000" stop-color="#009e3e"/><stop offset="0.318" stop-color="#009e2c"/><stop offset="0.373" stop-color="#089e26"/><stop offset="0.441" stop-color="#199e23"/><stop offset="0.496" stop-color="#299e28"/><stop offset="0.534" stop-color="#2f9e25"/><stop offset="0.572" stop-color="#3d9e22"/><stop offset="0.640" stop-color="#619e1b"/><stop offset="0.708" stop-color="#959d13"/><stop offset="0.729" stop-color="#9e9310"/><stop offset="0.775" stop-color="#9e7309"/><stop offset="0.826" stop-color="#9e5904"/><stop offset="0.919" stop-color="#9c3a00"/><stop offset="1.000" stop-color="#8a2400"/></linearGradient>
<linearGradient id="h65" gradientUnits="userSpaceOnUse" x1="1176" x2="1652" y1="0" y2="0"><stop offset="0.000" stop-color="#009e40"/><stop offset="0.311" stop-color="#009e2e"/><stop offset="0.366" stop-color="#089e28"/><stop offset="0.433" stop-color="#199e25"/><stop offset="0.496" stop-color="#2b9e2a"/><stop offset="0.529" stop-color="#329e27"/><stop offset="0.563" stop-color="#3e9e24"/><stop offset="0.626" stop-color="#609e1e"/><stop offset="0.693" stop-color="#959d16"/><stop offset="0.714" stop-color="#9e9313"/><stop offset="0.765" stop-color="#9e700b"/><stop offset="0.819" stop-color="#9e5504"/><stop offset="0.912" stop-color="#9c3700"/><stop offset="1.000" stop-color="#872000"/></linearGradient>
<linearGradient id="h66" gradientUnits="userSpaceOnUse" x1="1177" x2="1656" y1="0" y2="0"><stop offset="0.000" stop-color="#009e42"/><stop offset="0.309" stop-color="#009e30"/><stop offset="0.359" stop-color="#089e2b"/><stop offset="0.430" stop-color="#1a9e27"/><stop offset="0.493" stop-color="#2e9e2c"/><stop offset="0.522" stop-color="#339e2a"/><stop offset="0.555" stop-color="#3f9e27"/><stop offset="0.618" stop-color="#629e20"/><stop offset="0.681" stop-color="#949d19"/><stop offset="0.701" stop-color="#9e9316"/><stop offset="0.752" stop-color="#9e6f0d"/><stop offset="0.810" stop-color="#9e5206"/><stop offset="0.906" stop-color="#9b3400"/><stop offset="1.000" stop-color="#851c00"/></linearGradient>
<linearGradient id="h67" gradientUnits="userSpaceOnUse" x1="1177" x2="1661" y1="0" y2="0"><stop offset="0.000" stop-color="#009e45"/><stop offset="0.306" stop-color="#009e33"/><stop offset="0.355" stop-color="#089e2d"/><stop offset="0.430" stop-color="#1d9e29"/><stop offset="0.488" stop-color="#309e2f"/><stop offset="0.517" stop-color="#359e2d"/><stop offset="0.550" stop-color="#419e29"/><stop offset="0.607" stop-color="#639e23"/><stop offset="0.665" stop-color="#929e1d"/><stop offset="0.678" stop-color="#9b9a1b"/><stop offset="0.690" stop-color="#9e9218"/><stop offset="0.740" stop-color="#9e6d0f"/><stop offset="0.802" stop-color="#9e4f07"/><stop offset="0.901" stop-color="#9b3000"/><stop offset="1.000" stop-color="#811900"/></linearGradient>
<linearGradient id="h68" gradientUnits="userSpaceOnUse" x1="1178" x2="1666" y1="0" y2="0"><stop offset="0.000" stop-color="#009e47"/><stop offset="0.299" stop-color="#009e36"/><stop offset="0.348" stop-color="#089e30"/><stop offset="0.426" stop-color="#1e9e2c"/><stop offset="0.484" stop-color="#329e31"/><stop offset="0.512" stop-color="#389e2f"/><stop offset="0.541" stop-color="#439e2c"/><stop offset="0.594" stop-color="#629e27"/><stop offset="0.652" stop-color="#929e20"/><stop offset="0.664" stop-color="#9b9a1e"/><stop offset="0.676" stop-color="#9e911b"/><stop offset="0.730" stop-color="#9e6a10"/><stop offset="0.791" stop-color="#9e4c08"/><stop offset="0.893" stop-color="#9a2e00"/><stop offset="1.000" stop-color="#7e1600"/></linearGradient>
<linearGradient id="h69" gradientUnits="userSpaceOnUse" x1="1179" x2="1670" y1="0" y2="0"><stop offset="0.000" stop-color="#009e4a"/><stop offset="0.293" stop-color="#009e39"/><stop offset="0.342" stop-color="#089e33"/><stop offset="0.424" stop-color="#209e2e"/><stop offset="0.485" stop-color="#359e34"/><stop offset="0.534" stop-color="#449e2f"/><stop offset="0.587" stop-color="#649e2a"/><stop offset="0.640" stop-color="#929e24"/><stop offset="0.652" stop-color="#9b9a22"/><stop offset="0.664" stop-color="#9e911f"/><stop offset="0.717" stop-color="#9e6913"/><stop offset="0.782" stop-color="#9e4909"/><stop offset="0.888" stop-color="#9a2b00"/><stop offset="1.000" stop-color="#7b1300"/></linearGradient>
<linearGradient id="h70" gradientUnits="userSpaceOnUse" x1="1179" x2="1675" y1="0" y2="0"><stop offset="0.000" stop-color="#009e4c"/><stop offset="0.290" stop-color="#009e3c"/><stop offset="0.335" stop-color="#079e36"/><stop offset="0.407" stop-color="#1c9e31"/><stop offset="0.480" stop-color="#389e37"/><stop offset="0.528" stop-color="#479e32"/><stop offset="0.577" stop-color="#659e2d"/><stop offset="0.629" stop-color="#939d27"/><stop offset="0.641" stop-color="#9c9925"/><stop offset="0.653" stop-color="#9e8f22"/><stop offset="0.710" stop-color="#9e6514"/><stop offset="0.774" stop-color="#9e460a"/><stop offset="0.879" stop-color="#9a2801"/><stop offset="0.927" stop-color="#8f1e00"/><stop offset="1.000" stop-color="#781100"/></linearGradient>
<linearGradient id="h71" gradientUnits="userSpaceOnUse" x1="1180" x2="1680" y1="0" y2="0"><stop offset="0.000" stop-color="#009e4f"/><stop offset="0.284" stop-color="#009e3f"/><stop offset="0.328" stop-color="#079e39"/><stop offset="0.408" stop-color="#209e33"/><stop offset="0.476" stop-color="#3a9e3a"/><stop offset="0.520" stop-color="#489e36"/><stop offset="0.568" stop-color="#679e31"/><stop offset="0.616" stop-color="#939d2b"/><stop offset="0.628" stop-color="#9b9929"/><stop offset="0.640" stop-color="#9e8f25"/><stop offset="0.668" stop-color="#9e771d"/><stop offset="0.696" stop-color="#9e6417"/><stop offset="0.764" stop-color="#9e440b"/><stop offset="0.836" stop-color="#9e2e04"/><stop offset="0.872" stop-color="#9a2601"/><stop offset="0.924" stop-color="#8d1b00"/><stop offset="1.000" stop-color="#740f00"/></linearGradient>
<linearGradient id="h72" gradientUnits="userSpaceOnUse" x1="1181" x2="1685" y1="0" y2="0"><stop offset="0.000" stop-color="#009e52"/><stop offset="0.278" stop-color="#009e42"/><stop offset="0.321" stop-color="#079e3d"/><stop offset="0.405" stop-color="#219e36"/><stop offset="0.472" stop-color="#3d9e3d"/><stop offset="0.512" stop-color="#4a9e39"/><stop offset="0.556" stop-color="#669e35"/><stop offset="0.603" stop-color="#939d2f"/><stop offset="0.623" stop-color="#9e932a"/><stop offset="0.651" stop-color="#9e7a22"/><stop offset="0.683" stop-color="#9e631a"/><stop offset="0.754" stop-color="#9e410d"/><stop offset="0.825" stop-color="#9e2c05"/><stop offset="0.865" stop-color="#992302"/><stop offset="0.917" stop-color="#8d1900"/><stop offset="1.000" stop-color="#710c00"/></linearGradient>
<linearGradient id="h73" gradientUnits="userSpaceOnUse" x1="1182" x2="1689" y1="0" y2="0"><stop offset="0.000" stop-color="#009e55"/><stop offset="0.276" stop-color="#009e45"/><stop offset="0.323" stop-color="#099e3f"/><stop offset="0.406" stop-color="#259e39"/><stop offset="0.469" stop-color="#409e40"/><stop offset="0.509" stop-color="#4e9e3d"/><stop offset="0.548" stop-color="#699e38"/><stop offset="0.592" stop-color="#929d33"/><stop offset="0.611" stop-color="#9d932e"/><stop offset="0.639" stop-color="#9e7925"/><stop offset="0.671" stop-color="#9e631d"/><stop offset="0.706" stop-color="#9e4f15"/><stop offset="0.750" stop-color="#9e3d0e"/><stop offset="0.821" stop-color="#9e2905"/><stop offset="0.860" stop-color="#992102"/><stop offset="0.911" stop-color="#8c1700"/><stop offset="1.000" stop-color="#6f0b00"/></linearGradient>
<linearGradient id="h74" gradientUnits="userSpaceOnUse" x1="1183" x2="1694" y1="0" y2="0"><stop offset="0.000" stop-color="#009e58"/><stop offset="0.270" stop-color="#009e49"/><stop offset="0.317" stop-color="#099e43"/><stop offset="0.403" stop-color="#279e3d"/><stop offset="0.466" stop-color="#449e43"/><stop offset="0.501" stop-color="#509e41"/><stop offset="0.540" stop-color="#6b9e3c"/><stop offset="0.579" stop-color="#929e38"/><stop offset="0.599" stop-color="#9d9333"/><stop offset="0.630" stop-color="#9e7628"/><stop offset="0.661" stop-color="#9e5f1f"/><stop offset="0.697" stop-color="#9e4c17"/><stop offset="0.740" stop-color="#9e3b0f"/><stop offset="0.814" stop-color="#9e2706"/><stop offset="0.853" stop-color="#991e03"/><stop offset="0.904" stop-color="#8c1500"/><stop offset="1.000" stop-color="#6b0900"/></linearGradient>
<linearGradient id="h75" gradientUnits="userSpaceOnUse" x1="1184" x2="1699" y1="0" y2="0"><stop offset="0.000" stop-color="#009e5b"/><stop offset="0.264" stop-color="#009e4d"/><stop offset="0.307" stop-color="#079e47"/><stop offset="0.400" stop-color="#299e40"/><stop offset="0.462" stop-color="#479e47"/><stop offset="0.493" stop-color="#529e45"/><stop offset="0.528" stop-color="#6b9e41"/><stop offset="0.567" stop-color="#929e3c"/><stop offset="0.579" stop-color="#9b993a"/><stop offset="0.590" stop-color="#9e8f36"/><stop offset="0.621" stop-color="#9e722a"/><stop offset="0.652" stop-color="#9e5c21"/><stop offset="0.691" stop-color="#9e4818"/><stop offset="0.734" stop-color="#9e3810"/><stop offset="0.804" stop-color="#9e2507"/><stop offset="0.847" stop-color="#981c03"/><stop offset="0.897" stop-color="#8b1300"/><stop offset="1.000" stop-color="#680800"/></linearGradient>
<linearGradient id="h76" gradientUnits="userSpaceOnUse" x1="1184" x2="1703" y1="0" y2="0"><stop offset="0.000" stop-color="#009e5f"/><stop offset="0.262" stop-color="#009e51"/><stop offset="0.304" stop-color="#089e4b"/><stop offset="0.401" stop-color="#2c9e44"/><stop offset="0.462" stop-color="#4b9e4b"/><stop offset="0.489" stop-color="#569e49"/><stop offset="0.520" stop-color="#6c9e46"/><stop offset="0.559" stop-color="#939d41"/><stop offset="0.578" stop-color="#9e903b"/><stop offset="0.609" stop-color="#9e732f"/><stop offset="0.640" stop-color="#9e5d25"/><stop offset="0.678" stop-color="#9e481b"/><stop offset="0.724" stop-color="#9e3612"/><stop offset="0.798" stop-color="#9e2308"/><stop offset="0.840" stop-color="#981a04"/><stop offset="0.890" stop-color="#8b1201"/><stop offset="1.000" stop-color="#660600"/></linearGradient>
<linearGradient id="h77" gradientUnits="userSpaceOnUse" x1="1185" x2="1708" y1="0" y2="0"><stop offset="0.000" stop-color="#009e62"/><stop offset="0.256" stop-color="#009e55"/><stop offset="0.298" stop-color="#089e50"/><stop offset="0.348" stop-color="#189e4b"/><stop offset="0.398" stop-color="#2f9e48"/><stop offset="0.451" stop-color="#4c9e4d"/><stop offset="0.482" stop-color="#589e4d"/><stop offset="0.512" stop-color="#6f9e4a"/><stop offset="0.547" stop-color="#939d46"/><stop offset="0.566" stop-color="#9e9040"/><stop offset="0.597" stop-color="#9e7233"/><stop offset="0.631" stop-color="#9e5a27"/><stop offset="0.669" stop-color="#9e461d"/><stop offset="0.715" stop-color="#9e3413"/><stop offset="0.792" stop-color="#9e2009"/><stop offset="0.834" stop-color="#981805"/><stop offset="1.000" stop-color="#630500"/></linearGradient>
<linearGradient id="h78" gradientUnits="userSpaceOnUse" x1="1186" x2="1713" y1="0" y2="0"><stop offset="0.000" stop-color="#009e66"/><stop offset="0.250" stop-color="#009e59"/><stop offset="0.292" stop-color="#089e54"/><stop offset="0.345" stop-color="#1a9e4f"/><stop offset="0.398" stop-color="#339e4c"/><stop offset="0.448" stop-color="#509e51"/><stop offset="0.478" stop-color="#5d9e52"/><stop offset="0.505" stop-color="#729e4f"/><stop offset="0.535" stop-color="#929d4c"/><stop offset="0.554" stop-color="#9e9045"/><stop offset="0.584" stop-color="#9e7237"/><stop offset="0.619" stop-color="#9e592a"/><stop offset="0.660" stop-color="#9e431f"/><stop offset="0.706" stop-color="#9e3215"/><stop offset="0.782" stop-color="#9e1f0a"/><stop offset="0.824" stop-color="#981705"/><stop offset="0.899" stop-color="#820c01"/><stop offset="1.000" stop-color="#600400"/></linearGradient>
<linearGradient id="h79" gradientUnits="userSpaceOnUse" x1="1187" x2="1717" y1="0" y2="0"><stop offset="0.000" stop-color="#009e6a"/><stop offset="0.249" stop-color="#009e5e"/><stop offset="0.287" stop-color="#079e59"/><stop offset="0.340" stop-color="#1a9e54"/><stop offset="0.396" stop-color="#369e50"/><stop offset="0.445" stop-color="#549e56"/><stop offset="0.472" stop-color="#609e57"/><stop offset="0.494" stop-color="#719e55"/><stop offset="0.525" stop-color="#929d51"/><stop offset="0.543" stop-color="#9e904a"/><stop offset="0.574" stop-color="#9e713b"/><stop offset="0.608" stop-color="#9e582e"/><stop offset="0.649" stop-color="#9e4321"/><stop offset="0.698" stop-color="#9e3017"/><stop offset="0.777" stop-color="#9e1d0b"/><stop offset="0.819" stop-color="#981506"/><stop offset="0.898" stop-color="#800b01"/><stop offset="1.000" stop-color="#5e0300"/></linearGradient>
<linearGradient id="h80" gradientUnits="userSpaceOnUse" x1="1188" x2="1722" y1="0" y2="0"><stop offset="0.000" stop-color="#009e6e"/><stop offset="0.243" stop-color="#009e63"/><stop offset="0.281" stop-color="#079e5e"/><stop offset="0.341" stop-color="#1e9e58"/><stop offset="0.397" stop-color="#3b9e55"/><stop offset="0.453" stop-color="#5e9e5c"/><stop offset="0.476" stop-color="#6b9e5b"/><stop offset="0.509" stop-color="#8d9e58"/><stop offset="0.521" stop-color="#999a55"/><stop offset="0.536" stop-color="#9e8c4e"/><stop offset="0.566" stop-color="#9e6e3e"/><stop offset="0.599" stop-color="#9e5630"/><stop offset="0.640" stop-color="#9e4023"/><stop offset="0.693" stop-color="#9e2d17"/><stop offset="0.768" stop-color="#9e1c0c"/><stop offset="0.813" stop-color="#971407"/><stop offset="0.895" stop-color="#7e0901"/><stop offset="1.000" stop-color="#5c0300"/></linearGradient>
<linearGradient id="h81" gradientUnits="userSpaceOnUse" x1="1189" x2="1727" y1="0" y2="0"><stop offset="0.000" stop-color="#009e72"/><stop offset="0.238" stop-color="#009e68"/><stop offset="0.275" stop-color="#079e64"/><stop offset="0.331" stop-color="#1c9e5e"/><stop offset="0.387" stop-color="#3a9e5b"/><stop offset="0.468" stop-color="#6e9e61"/><stop offset="0.498" stop-color="#8d9e5e"/><stop offset="0.513" stop-color="#9b985a"/><stop offset="0.524" stop-color="#9e8c54"/><stop offset="0.554" stop-color="#9e6d43"/><stop offset="0.591" stop-color="#9e5333"/><stop offset="0.632" stop-color="#9e3e26"/><stop offset="0.684" stop-color="#9e2c19"/><stop offset="0.762" stop-color="#9e1a0c"/><stop offset="0.803" stop-color="#981308"/><stop offset="0.888" stop-color="#7d0801"/><stop offset="1.000" stop-color="#5a0200"/></linearGradient>
<linearGradient id="h82" gradientUnits="userSpaceOnUse" x1="1190" x2="1732" y1="0" y2="0"><stop offset="0.000" stop-color="#009e77"/><stop offset="0.232" stop-color="#009e6d"/><stop offset="0.269" stop-color="#079e6a"/><stop offset="0.325" stop-color="#1d9e64"/><stop offset="0.380" stop-color="#3b9e61"/><stop offset="0.461" stop-color="#729e67"/><stop offset="0.487" stop-color="#8d9e64"/><stop offset="0.502" stop-color="#9b9860"/><stop offset="0.513" stop-color="#9e8c5a"/><stop offset="0.542" stop-color="#9e6d48"/><stop offset="0.579" stop-color="#9e5237"/><stop offset="0.624" stop-color="#9e3c28"/><stop offset="0.679" stop-color="#9e291a"/><stop offset="0.753" stop-color="#9e190e"/><stop offset="0.793" stop-color="#981209"/><stop offset="0.886" stop-color="#7b0701"/><stop offset="0.952" stop-color="#640300"/><stop offset="1.000" stop-color="#590100"/></linearGradient>
<linearGradient id="h83" gradientUnits="userSpaceOnUse" x1="1191" x2="1736" y1="0" y2="0"><stop offset="0.000" stop-color="#009e7b"/><stop offset="0.231" stop-color="#009e73"/><stop offset="0.264" stop-color="#079e70"/><stop offset="0.316" stop-color="#1b9e6b"/><stop offset="0.371" stop-color="#399e67"/><stop offset="0.411" stop-color="#559e67"/><stop offset="0.455" stop-color="#759e6d"/><stop offset="0.477" stop-color="#8c9e6b"/><stop offset="0.492" stop-color="#9b9867"/><stop offset="0.503" stop-color="#9e8b60"/><stop offset="0.536" stop-color="#9e6a4b"/><stop offset="0.572" stop-color="#9e5039"/><stop offset="0.617" stop-color="#9e3b2a"/><stop offset="0.672" stop-color="#9e281c"/><stop offset="0.749" stop-color="#9e170e"/><stop offset="0.789" stop-color="#981009"/><stop offset="0.947" stop-color="#640200"/><stop offset="1.000" stop-color="#580100"/></linearGradient>
<linearGradient id="h84" gradientUnits="userSpaceOnUse" x1="1192" x2="1741" y1="0" y2="0"><stop offset="0.000" stop-color="#009e80"/><stop offset="0.226" stop-color="#009e79"/><stop offset="0.259" stop-color="#079e76"/><stop offset="0.310" stop-color="#1b9e72"/><stop offset="0.364" stop-color="#3a9e6e"/><stop offset="0.408" stop-color="#5a9e6d"/><stop offset="0.452" stop-color="#7c9e73"/><stop offset="0.470" stop-color="#919d72"/><stop offset="0.481" stop-color="#9b986e"/><stop offset="0.492" stop-color="#9e8b67"/><stop offset="0.525" stop-color="#9e6950"/><stop offset="0.561" stop-color="#9e503e"/><stop offset="0.608" stop-color="#9e392c"/><stop offset="0.663" stop-color="#9e271d"/><stop offset="0.740" stop-color="#9e1710"/><stop offset="0.780" stop-color="#98100a"/><stop offset="0.856" stop-color="#810703"/><stop offset="0.940" stop-color="#630200"/><stop offset="1.000" stop-color="#560100"/></linearGradient>
<linearGradient id="h85" gradientUnits="userSpaceOnUse" x1="1193" x2="1746" y1="0" y2="0"><stop offset="0.000" stop-color="#009e85"/><stop offset="0.221" stop-color="#009e7f"/><stop offset="0.253" stop-color="#069e7d"/><stop offset="0.304" stop-color="#1b9e79"/><stop offset="0.354" stop-color="#399e76"/><stop offset="0.401" stop-color="#5c9e74"/><stop offset="0.441" stop-color="#7e9e7a"/><stop offset="0.459" stop-color="#909d79"/><stop offset="0.470" stop-color="#9b9875"/><stop offset="0.481" stop-color="#9e8b6e"/><stop offset="0.510" stop-color="#9e6d58"/><stop offset="0.550" stop-color="#9e5042"/><stop offset="0.597" stop-color="#9e392f"/><stop offset="0.655" stop-color="#9e261f"/><stop offset="0.731" stop-color="#9e1611"/><stop offset="0.770" stop-color="#990f0b"/><stop offset="0.850" stop-color="#800603"/><stop offset="0.937" stop-color="#610100"/><stop offset="1.000" stop-color="#560000"/></linearGradient>
<linearGradient id="h86" gradientUnits="userSpaceOnUse" x1="1194" x2="1751" y1="0" y2="0"><stop offset="0.000" stop-color="#009e8a"/><stop offset="0.215" stop-color="#009e86"/><stop offset="0.248" stop-color="#069e84"/><stop offset="0.298" stop-color="#1c9e81"/><stop offset="0.348" stop-color="#3a9e7e"/><stop offset="0.391" stop-color="#5b9e7c"/><stop offset="0.449" stop-color="#919d81"/><stop offset="0.460" stop-color="#9b987d"/><stop offset="0.470" stop-color="#9e8c75"/><stop offset="0.503" stop-color="#9e6a5c"/><stop offset="0.542" stop-color="#9e4f45"/><stop offset="0.589" stop-color="#9e3831"/><stop offset="0.646" stop-color="#9e2621"/><stop offset="0.725" stop-color="#9e1512"/><stop offset="0.761" stop-color="#990f0c"/><stop offset="0.844" stop-color="#7f0604"/><stop offset="0.930" stop-color="#610100"/><stop offset="1.000" stop-color="#550000"/></linearGradient>
<linearGradient id="h87" gradientUnits="userSpaceOnUse" x1="1195" x2="1755" y1="0" y2="0"><stop offset="0.000" stop-color="#009e90"/><stop offset="0.214" stop-color="#009e8d"/><stop offset="0.243" stop-color="#069e8b"/><stop offset="0.289" stop-color="#1a9e89"/><stop offset="0.339" stop-color="#389e87"/><stop offset="0.386" stop-color="#5d9e86"/><stop offset="0.439" stop-color="#919d89"/><stop offset="0.450" stop-color="#9b9885"/><stop offset="0.461" stop-color="#9e8c7d"/><stop offset="0.493" stop-color="#9e6b62"/><stop offset="0.532" stop-color="#9e504a"/><stop offset="0.582" stop-color="#9e3834"/><stop offset="0.643" stop-color="#9e2522"/><stop offset="0.718" stop-color="#9e1513"/><stop offset="0.754" stop-color="#990f0d"/><stop offset="0.839" stop-color="#7f0504"/><stop offset="0.929" stop-color="#5f0100"/><stop offset="0.964" stop-color="#580000"/><stop offset="1.000" stop-color="#550000"/></linearGradient>
<linearGradient id="h88" gradientUnits="userSpaceOnUse" x1="1196" x2="1760" y1="0" y2="0"><stop offset="0.000" stop-color="#009e96"/><stop offset="0.209" stop-color="#009e94"/><stop offset="0.241" stop-color="#079e93"/><stop offset="0.287" stop-color="#1c9e92"/><stop offset="0.333" stop-color="#399e91"/><stop offset="0.379" stop-color="#5f9e90"/><stop offset="0.429" stop-color="#929d91"/><stop offset="0.440" stop-color="#9b988e"/><stop offset="0.450" stop-color="#9e8d85"/><stop offset="0.482" stop-color="#9e6d68"/><stop offset="0.525" stop-color="#9e4f4c"/><stop offset="0.578" stop-color="#9e3635"/><stop offset="0.638" stop-color="#9e2422"/><stop offset="0.713" stop-color="#9e1414"/><stop offset="0.748" stop-color="#990f0e"/><stop offset="0.830" stop-color="#7f0505"/><stop offset="0.922" stop-color="#5f0000"/><stop offset="0.961" stop-color="#570000"/><stop offset="1.000" stop-color="#550000"/></linearGradient>
<linearGradient id="h89" gradientUnits="userSpaceOnUse" x1="1197" x2="1765" y1="0" y2="0"><stop offset="0.000" stop-color="#009d9b"/><stop offset="0.204" stop-color="#009c9a"/><stop offset="0.236" stop-color="#079c9a"/><stop offset="0.282" stop-color="#1c9c99"/><stop offset="0.327" stop-color="#399c99"/><stop offset="0.377" stop-color="#639b98"/><stop offset="0.423" stop-color="#949b98"/><stop offset="0.440" stop-color="#9e8e8c"/><stop offset="0.475" stop-color="#9e6c6b"/><stop offset="0.518" stop-color="#9e4f4e"/><stop offset="0.570" stop-color="#9e3636"/><stop offset="0.630" stop-color="#9e2424"/><stop offset="0.704" stop-color="#9e1414"/><stop offset="0.739" stop-color="#990f0f"/><stop offset="0.824" stop-color="#7f0505"/><stop offset="0.915" stop-color="#5e0000"/><stop offset="0.958" stop-color="#560000"/><stop offset="1.000" stop-color="#550000"/></linearGradient>
<linearGradient id="h90" gradientUnits="userSpaceOnUse" x1="1198" x2="1769" y1="0" y2="0"><stop offset="0.000" stop-color="#009a9d"/><stop offset="0.200" stop-color="#00989d"/><stop offset="0.231" stop-color="#07979d"/><stop offset="0.277" stop-color="#1b969d"/><stop offset="0.326" stop-color="#3b959d"/><stop offset="0.371" stop-color="#62949d"/><stop offset="0.417" stop-color="#93959d"/><stop offset="0.424" stop-color="#99949a"/><stop offset="0.434" stop-color="#9e8b90"/><stop offset="0.469" stop-color="#9e6a6c"/><stop offset="0.511" stop-color="#9e4d4f"/><stop offset="0.564" stop-color="#9e3536"/><stop offset="0.623" stop-color="#9e2324"/><stop offset="0.697" stop-color="#9e1414"/><stop offset="0.732" stop-color="#9a0e0f"/><stop offset="0.820" stop-color="#7e0405"/><stop offset="0.914" stop-color="#5d0000"/><stop offset="0.953" stop-color="#560000"/><stop offset="1.000" stop-color="#550000"/></linearGradient>
<linearGradient id="h91" gradientUnits="userSpaceOnUse" x1="1199" x2="1774" y1="0" y2="0"><stop offset="0.000" stop-color="#00949e"/><stop offset="0.198" stop-color="#00919e"/><stop offset="0.230" stop-color="#07909e"/><stop offset="0.278" stop-color="#1e8e9e"/><stop offset="0.323" stop-color="#3c8c9e"/><stop offset="0.365" stop-color="#5f8a9e"/><stop offset="0.414" stop-color="#928d9e"/><stop offset="0.421" stop-color="#998b9b"/><stop offset="0.431" stop-color="#9e8390"/><stop offset="0.466" stop-color="#9e646b"/><stop offset="0.508" stop-color="#9e494d"/><stop offset="0.560" stop-color="#9e3235"/><stop offset="0.619" stop-color="#9e2022"/><stop offset="0.692" stop-color="#9e1213"/><stop offset="0.723" stop-color="#9a0d0e"/><stop offset="0.814" stop-color="#7d0304"/><stop offset="0.908" stop-color="#5d0000"/><stop offset="0.946" stop-color="#560000"/><stop offset="1.000" stop-color="#550000"/></linearGradient>
<linearGradient id="h92" gradientUnits="userSpaceOnUse" x1="1200" x2="1778" y1="0" y2="0"><stop offset="0.000" stop-color="#008e9e"/><stop offset="0.194" stop-color="#008a9e"/><stop offset="0.225" stop-color="#07889e"/><stop offset="0.270" stop-color="#1b859e"/><stop offset="0.318" stop-color="#3a829e"/><stop offset="0.360" stop-color="#5c819e"/><stop offset="0.412" stop-color="#91859e"/><stop offset="0.422" stop-color="#9b8198"/><stop offset="0.433" stop-color="#9e788c"/><stop offset="0.464" stop-color="#9e5e6a"/><stop offset="0.505" stop-color="#9e444c"/><stop offset="0.557" stop-color="#9e2e34"/><stop offset="0.619" stop-color="#9e1d21"/><stop offset="0.685" stop-color="#9e1013"/><stop offset="0.720" stop-color="#9a0b0e"/><stop offset="0.810" stop-color="#7d0304"/><stop offset="0.903" stop-color="#5c0000"/><stop offset="0.941" stop-color="#560000"/><stop offset="1.000" stop-color="#550000"/></linearGradient>
<linearGradient id="h93" gradientUnits="userSpaceOnUse" x1="1202" x2="1783" y1="0" y2="0"><stop offset="0.000" stop-color="#00889e"/><stop offset="0.189" stop-color="#00839e"/><stop offset="0.224" stop-color="#08809e"/><stop offset="0.272" stop-color="#1f7c9e"/><stop offset="0.317" stop-color="#3c799e"/><stop offset="0.358" stop-color="#5e789e"/><stop offset="0.410" stop-color="#927c9d"/><stop offset="0.420" stop-color="#9c7897"/><stop offset="0.427" stop-color="#9e728f"/><stop offset="0.458" stop-color="#9e596b"/><stop offset="0.499" stop-color="#9e414d"/><stop offset="0.551" stop-color="#9e2b34"/><stop offset="0.613" stop-color="#9e1b20"/><stop offset="0.709" stop-color="#9a0a0e"/><stop offset="0.802" stop-color="#7d0204"/><stop offset="0.895" stop-color="#5c0001"/><stop offset="0.936" stop-color="#560000"/><stop offset="1.000" stop-color="#550000"/></linearGradient>
<linearGradient id="h94" gradientUnits="userSpaceOnUse" x1="1203" x2="1787" y1="0" y2="0"><stop offset="0.000" stop-color="#00839e"/><stop offset="0.185" stop-color="#007c9e"/><stop offset="0.219" stop-color="#08799e"/><stop offset="0.267" stop-color="#1e759e"/><stop offset="0.315" stop-color="#3d719e"/><stop offset="0.356" stop-color="#5e709e"/><stop offset="0.390" stop-color="#7d769e"/><stop offset="0.408" stop-color="#91749e"/><stop offset="0.418" stop-color="#9b7098"/><stop offset="0.425" stop-color="#9e6b8f"/><stop offset="0.455" stop-color="#9e536b"/><stop offset="0.497" stop-color="#9e3c4c"/><stop offset="0.548" stop-color="#9e2833"/><stop offset="0.610" stop-color="#9e1820"/><stop offset="0.678" stop-color="#9e0c12"/><stop offset="0.716" stop-color="#98080d"/><stop offset="0.805" stop-color="#790104"/><stop offset="0.863" stop-color="#640001"/><stop offset="0.904" stop-color="#590000"/><stop offset="1.000" stop-color="#550000"/></linearGradient>
<linearGradient id="h95" gradientUnits="userSpaceOnUse" x1="1204" x2="1792" y1="0" y2="0"><stop offset="0.000" stop-color="#007d9e"/><stop offset="0.184" stop-color="#00759e"/><stop offset="0.218" stop-color="#09729e"/><stop offset="0.265" stop-color="#1f6d9e"/><stop offset="0.310" stop-color="#3b699e"/><stop offset="0.347" stop-color="#59699e"/><stop offset="0.384" stop-color="#786f9e"/><stop offset="0.401" stop-color="#8b6d9e"/><stop offset="0.415" stop-color="#9b6998"/><stop offset="0.425" stop-color="#9e628b"/><stop offset="0.456" stop-color="#9e4c69"/><stop offset="0.497" stop-color="#9e364a"/><stop offset="0.548" stop-color="#9e2432"/><stop offset="0.609" stop-color="#9e151f"/><stop offset="0.673" stop-color="#9e0b12"/><stop offset="0.711" stop-color="#97060d"/><stop offset="0.850" stop-color="#650002"/><stop offset="0.895" stop-color="#590001"/><stop offset="0.925" stop-color="#560000"/><stop offset="1.000" stop-color="#550000"/></linearGradient>
<linearGradient id="h96" gradientUnits="userSpaceOnUse" x1="1205" x2="1796" y1="0" y2="0"><stop offset="0.000" stop-color="#00789e"/><stop offset="0.179" stop-color="#006f9e"/><stop offset="0.217" stop-color="#096b9e"/><stop offset="0.264" stop-color="#20669e"/><stop offset="0.308" stop-color="#3b629e"/><stop offset="0.379" stop-color="#73689e"/><stop offset="0.403" stop-color="#8f659e"/><stop offset="0.413" stop-color="#9b6299"/><stop offset="0.423" stop-color="#9e5b8c"/><stop offset="0.453" stop-color="#9e4669"/><stop offset="0.494" stop-color="#9e324b"/><stop offset="0.545" stop-color="#9e2132"/><stop offset="0.606" stop-color="#9e131f"/><stop offset="0.667" stop-color="#9e0913"/><stop offset="0.707" stop-color="#97050d"/><stop offset="0.843" stop-color="#660002"/><stop offset="0.890" stop-color="#590001"/><stop offset="1.000" stop-color="#550000"/></linearGradient>
<linearGradient id="h97" gradientUnits="userSpaceOnUse" x1="1206" x2="1801" y1="0" y2="0"><stop offset="0.000" stop-color="#00739e"/><stop offset="0.175" stop-color="#00699e"/><stop offset="0.212" stop-color="#09659e"/><stop offset="0.259" stop-color="#1e5f9e"/><stop offset="0.306" stop-color="#3c5b9e"/><stop offset="0.373" stop-color="#6e619e"/><stop offset="0.400" stop-color="#8f5e9e"/><stop offset="0.410" stop-color="#9b5b99"/><stop offset="0.420" stop-color="#9e558d"/><stop offset="0.454" stop-color="#9e3f67"/><stop offset="0.494" stop-color="#9e2d49"/><stop offset="0.545" stop-color="#9e1d31"/><stop offset="0.605" stop-color="#9e101f"/><stop offset="0.662" stop-color="#9e0813"/><stop offset="0.699" stop-color="#97040e"/><stop offset="0.837" stop-color="#650002"/><stop offset="0.884" stop-color="#590001"/><stop offset="1.000" stop-color="#550000"/></linearGradient>
<linearGradient id="h98" gradientUnits="userSpaceOnUse" x1="1208" x2="1802" y1="0" y2="0"><stop offset="0.000" stop-color="#006e9e"/><stop offset="0.172" stop-color="#00639e"/><stop offset="0.212" stop-color="#0a5e9e"/><stop offset="0.276" stop-color="#2a579e"/><stop offset="0.316" stop-color="#45569e"/><stop offset="0.364" stop-color="#665c9e"/><stop offset="0.380" stop-color="#765a9e"/><stop offset="0.404" stop-color="#95579d"/><stop offset="0.418" stop-color="#9e5090"/><stop offset="0.448" stop-color="#9e3d6c"/><stop offset="0.488" stop-color="#9e2b4d"/><stop offset="0.539" stop-color="#9e1b34"/><stop offset="0.599" stop-color="#9e0e20"/><stop offset="0.660" stop-color="#9e0614"/><stop offset="0.697" stop-color="#97030e"/><stop offset="0.835" stop-color="#650002"/><stop offset="0.882" stop-color="#590001"/><stop offset="1.000" stop-color="#550000"/></linearGradient>
<linearGradient id="h99" gradientUnits="userSpaceOnUse" x1="1209" x2="1796" y1="0" y2="0"><stop offset="0.000" stop-color="#00699e"/><stop offset="0.174" stop-color="#005e9e"/><stop offset="0.211" stop-color="#0a589e"/><stop offset="0.256" stop-color="#1d539e"/><stop offset="0.296" stop-color="#35509e"/><stop offset="0.365" stop-color="#62569e"/><stop offset="0.385" stop-color="#75539e"/><stop offset="0.409" stop-color="#95509d"/><stop offset="0.416" stop-color="#9b4e99"/><stop offset="0.426" stop-color="#9e488d"/><stop offset="0.457" stop-color="#9e376a"/><stop offset="0.497" stop-color="#9e264c"/><stop offset="0.545" stop-color="#9e1834"/><stop offset="0.606" stop-color="#9e0c21"/><stop offset="0.664" stop-color="#9e0515"/><stop offset="0.705" stop-color="#97020f"/><stop offset="0.842" stop-color="#660003"/><stop offset="0.889" stop-color="#590001"/><stop offset="1.000" stop-color="#550000"/></linearGradient>
<linearGradient id="h100" gradientUnits="userSpaceOnUse" x1="1210" x2="1786" y1="0" y2="0"><stop offset="0.000" stop-color="#00649e"/><stop offset="0.174" stop-color="#00599e"/><stop offset="0.215" stop-color="#0b539e"/><stop offset="0.295" stop-color="#314b9e"/><stop offset="0.340" stop-color="#4f519e"/><stop offset="0.365" stop-color="#5c519e"/><stop offset="0.389" stop-color="#714e9e"/><stop offset="0.417" stop-color="#944a9d"/><stop offset="0.424" stop-color="#9b489a"/><stop offset="0.434" stop-color="#9e428e"/><stop offset="0.465" stop-color="#9e326b"/><stop offset="0.507" stop-color="#9e224c"/><stop offset="0.556" stop-color="#9e1535"/><stop offset="0.615" stop-color="#9e0b22"/><stop offset="0.677" stop-color="#9e0416"/><stop offset="0.715" stop-color="#970110"/><stop offset="0.858" stop-color="#650003"/><stop offset="0.903" stop-color="#590001"/><stop offset="1.000" stop-color="#550000"/></linearGradient>
<linearGradient id="h101" gradientUnits="userSpaceOnUse" x1="1212" x2="1776" y1="0" y2="0"><stop offset="0.000" stop-color="#005f9e"/><stop offset="0.174" stop-color="#00549e"/><stop offset="0.220" stop-color="#0c4d9e"/><stop offset="0.294" stop-color="#2f469e"/><stop offset="0.348" stop-color="#4f4d9e"/><stop offset="0.369" stop-color="#594b9e"/><stop offset="0.394" stop-color="#6f489e"/><stop offset="0.422" stop-color="#91449e"/><stop offset="0.433" stop-color="#9c4199"/><stop offset="0.440" stop-color="#9e3e91"/><stop offset="0.472" stop-color="#9e2e6e"/><stop offset="0.511" stop-color="#9e2050"/><stop offset="0.560" stop-color="#9e1438"/><stop offset="0.617" stop-color="#9e0a25"/><stop offset="0.681" stop-color="#9e0318"/><stop offset="0.716" stop-color="#9a0113"/><stop offset="0.809" stop-color="#7d0007"/><stop offset="0.904" stop-color="#5c0002"/><stop offset="0.943" stop-color="#560001"/><stop offset="1.000" stop-color="#550000"/></linearGradient>
<linearGradient id="h102" gradientUnits="userSpaceOnUse" x1="1213" x2="1766" y1="0" y2="0"><stop offset="0.000" stop-color="#005b9e"/><stop offset="0.174" stop-color="#004f9e"/><stop offset="0.224" stop-color="#0d489e"/><stop offset="0.293" stop-color="#2c429e"/><stop offset="0.347" stop-color="#4a489e"/><stop offset="0.373" stop-color="#56469e"/><stop offset="0.401" stop-color="#6e429e"/><stop offset="0.430" stop-color="#913f9e"/><stop offset="0.441" stop-color="#9b3c99"/><stop offset="0.448" stop-color="#9e3992"/><stop offset="0.481" stop-color="#9e2a6f"/><stop offset="0.521" stop-color="#9e1d51"/><stop offset="0.568" stop-color="#9e123a"/><stop offset="0.626" stop-color="#9e0927"/><stop offset="0.694" stop-color="#9e0219"/><stop offset="0.731" stop-color="#990013"/><stop offset="0.817" stop-color="#7f0008"/><stop offset="0.915" stop-color="#5e0002"/><stop offset="0.955" stop-color="#560001"/><stop offset="1.000" stop-color="#550001"/></linearGradient>
<linearGradient id="h103" gradientUnits="userSpaceOnUse" x1="1215" x2="1756" y1="0" y2="0"><stop offset="0.000" stop-color="#00579e"/><stop offset="0.174" stop-color="#004a9e"/><stop offset="0.226" stop-color="#0d439e"/><stop offset="0.292" stop-color="#293e9e"/><stop offset="0.344" stop-color="#45449e"/><stop offset="0.373" stop-color="#51419e"/><stop offset="0.407" stop-color="#6c3d9e"/><stop offset="0.440" stop-color="#93399e"/><stop offset="0.447" stop-color="#9a379b"/><stop offset="0.458" stop-color="#9e3390"/><stop offset="0.492" stop-color="#9e256e"/><stop offset="0.532" stop-color="#9e1951"/><stop offset="0.577" stop-color="#9e103c"/><stop offset="0.632" stop-color="#9e072a"/><stop offset="0.706" stop-color="#9e011a"/><stop offset="0.743" stop-color="#990014"/><stop offset="0.828" stop-color="#800009"/><stop offset="0.924" stop-color="#5f0003"/><stop offset="0.965" stop-color="#570002"/><stop offset="1.000" stop-color="#550001"/></linearGradient>
<linearGradient id="h104" gradientUnits="userSpaceOnUse" x1="1216" x2="1746" y1="0" y2="0"><stop offset="0.000" stop-color="#00529e"/><stop offset="0.177" stop-color="#00469e"/><stop offset="0.230" stop-color="#0d3e9e"/><stop offset="0.291" stop-color="#263a9e"/><stop offset="0.343" stop-color="#41409e"/><stop offset="0.377" stop-color="#4e3d9e"/><stop offset="0.411" stop-color="#69399e"/><stop offset="0.449" stop-color="#92339e"/><stop offset="0.457" stop-color="#99329b"/><stop offset="0.468" stop-color="#9e2e91"/><stop offset="0.502" stop-color="#9e216f"/><stop offset="0.540" stop-color="#9e1755"/><stop offset="0.585" stop-color="#9e0e3e"/><stop offset="0.642" stop-color="#9e062c"/><stop offset="0.721" stop-color="#9e001b"/><stop offset="0.762" stop-color="#980014"/><stop offset="0.845" stop-color="#7f0009"/><stop offset="0.932" stop-color="#620003"/><stop offset="1.000" stop-color="#560001"/></linearGradient>
<linearGradient id="h105" gradientUnits="userSpaceOnUse" x1="1217" x2="1736" y1="0" y2="0"><stop offset="0.000" stop-color="#004e9e"/><stop offset="0.177" stop-color="#00429e"/><stop offset="0.235" stop-color="#0e3a9e"/><stop offset="0.297" stop-color="#27369e"/><stop offset="0.347" stop-color="#3e3c9e"/><stop offset="0.382" stop-color="#4c389e"/><stop offset="0.420" stop-color="#69349e"/><stop offset="0.459" stop-color="#922e9e"/><stop offset="0.470" stop-color="#9c2c99"/><stop offset="0.478" stop-color="#9e2992"/><stop offset="0.513" stop-color="#9e1e70"/><stop offset="0.551" stop-color="#9e1456"/><stop offset="0.597" stop-color="#9e0c40"/><stop offset="0.647" stop-color="#9e052f"/><stop offset="0.732" stop-color="#9e001d"/><stop offset="0.775" stop-color="#990015"/><stop offset="0.879" stop-color="#790008"/><stop offset="0.948" stop-color="#620004"/><stop offset="1.000" stop-color="#580002"/></linearGradient>
<linearGradient id="h106" gradientUnits="userSpaceOnUse" x1="1219" x2="1726" y1="0" y2="0"><stop offset="0.000" stop-color="#004a9e"/><stop offset="0.178" stop-color="#003d9e"/><stop offset="0.237" stop-color="#0e369e"/><stop offset="0.296" stop-color="#25339e"/><stop offset="0.343" stop-color="#39389e"/><stop offset="0.387" stop-color="#4a349e"/><stop offset="0.426" stop-color="#672f9e"/><stop offset="0.469" stop-color="#93299e"/><stop offset="0.477" stop-color="#9a289b"/><stop offset="0.489" stop-color="#9e2491"/><stop offset="0.521" stop-color="#9e1b73"/><stop offset="0.560" stop-color="#9e1158"/><stop offset="0.604" stop-color="#9e0a43"/><stop offset="0.655" stop-color="#9e0432"/><stop offset="0.746" stop-color="#9e001e"/><stop offset="0.789" stop-color="#990016"/><stop offset="0.888" stop-color="#7c0009"/><stop offset="1.000" stop-color="#5b0003"/></linearGradient>
<linearGradient id="h107" gradientUnits="userSpaceOnUse" x1="1221" x2="1717" y1="0" y2="0"><stop offset="0.000" stop-color="#00469e"/><stop offset="0.177" stop-color="#003a9e"/><stop offset="0.242" stop-color="#10319e"/><stop offset="0.294" stop-color="#232f9e"/><stop offset="0.343" stop-color="#36359e"/><stop offset="0.391" stop-color="#49309e"/><stop offset="0.431" stop-color="#652b9e"/><stop offset="0.476" stop-color="#91259e"/><stop offset="0.488" stop-color="#9b239a"/><stop offset="0.496" stop-color="#9e2194"/><stop offset="0.532" stop-color="#9e1773"/><stop offset="0.569" stop-color="#9e0f5a"/><stop offset="0.613" stop-color="#9e0845"/><stop offset="0.661" stop-color="#9e0335"/><stop offset="0.758" stop-color="#9e001f"/><stop offset="0.802" stop-color="#990017"/><stop offset="0.899" stop-color="#7d000a"/><stop offset="1.000" stop-color="#5e0004"/></linearGradient>
<linearGradient id="h108" gradientUnits="userSpaceOnUse" x1="1222" x2="1707" y1="0" y2="0"><stop offset="0.000" stop-color="#00439e"/><stop offset="0.177" stop-color="#00369e"/><stop offset="0.247" stop-color="#102e9e"/><stop offset="0.297" stop-color="#222c9e"/><stop offset="0.342" stop-color="#33319e"/><stop offset="0.367" stop-color="#392f9e"/><stop offset="0.396" stop-color="#462c9e"/><stop offset="0.441" stop-color="#65279e"/><stop offset="0.487" stop-color="#90219e"/><stop offset="0.499" stop-color="#9b1e9b"/><stop offset="0.507" stop-color="#9e1c94"/><stop offset="0.540" stop-color="#9e1477"/><stop offset="0.577" stop-color="#9e0d5e"/><stop offset="0.619" stop-color="#9e074a"/><stop offset="0.668" stop-color="#9e0238"/><stop offset="0.771" stop-color="#9e0020"/><stop offset="0.816" stop-color="#990018"/><stop offset="0.907" stop-color="#81000c"/><stop offset="1.000" stop-color="#640005"/></linearGradient>
<linearGradient id="h109" gradientUnits="userSpaceOnUse" x1="1224" x2="1697" y1="0" y2="0"><stop offset="0.000" stop-color="#003f9e"/><stop offset="0.178" stop-color="#00329e"/><stop offset="0.249" stop-color="#102a9e"/><stop offset="0.296" stop-color="#20299e"/><stop offset="0.338" stop-color="#2f2e9e"/><stop offset="0.368" stop-color="#362c9e"/><stop offset="0.397" stop-color="#43299e"/><stop offset="0.448" stop-color="#64239e"/><stop offset="0.499" stop-color="#921c9e"/><stop offset="0.512" stop-color="#9c1a9a"/><stop offset="0.520" stop-color="#9e1893"/><stop offset="0.554" stop-color="#9e1176"/><stop offset="0.592" stop-color="#9e0a5e"/><stop offset="0.634" stop-color="#9e054a"/><stop offset="0.681" stop-color="#9e013a"/><stop offset="0.786" stop-color="#9e0021"/><stop offset="0.829" stop-color="#9a001a"/><stop offset="0.888" stop-color="#8c0011"/><stop offset="1.000" stop-color="#690006"/></linearGradient>
<linearGradient id="h110" gradientUnits="userSpaceOnUse" x1="1225" x2="1687" y1="0" y2="0"><stop offset="0.000" stop-color="#003c9e"/><stop offset="0.177" stop-color="#002f9e"/><stop offset="0.255" stop-color="#11279e"/><stop offset="0.338" stop-color="#2c2b9e"/><stop offset="0.372" stop-color="#34289e"/><stop offset="0.407" stop-color="#43259e"/><stop offset="0.459" stop-color="#641f9e"/><stop offset="0.511" stop-color="#92189e"/><stop offset="0.532" stop-color="#9e1494"/><stop offset="0.567" stop-color="#9e0d77"/><stop offset="0.602" stop-color="#9e0862"/><stop offset="0.645" stop-color="#9e034d"/><stop offset="0.693" stop-color="#9e003d"/><stop offset="0.801" stop-color="#9e0023"/><stop offset="0.844" stop-color="#9a001b"/><stop offset="0.905" stop-color="#8d0012"/><stop offset="1.000" stop-color="#700008"/></linearGradient>
<linearGradient id="h111" gradientUnits="userSpaceOnUse" x1="1227" x2="1677" y1="0" y2="0"><stop offset="0.000" stop-color="#00389e"/><stop offset="0.187" stop-color="#012b9e"/><stop offset="0.262" stop-color="#12249e"/><stop offset="0.333" stop-color="#29289e"/><stop offset="0.369" stop-color="#30269e"/><stop offset="0.404" stop-color="#3d229e"/><stop offset="0.440" stop-color="#501e9e"/><stop offset="0.480" stop-color="#6d1a9e"/><stop offset="0.524" stop-color="#93149e"/><stop offset="0.547" stop-color="#9e1193"/><stop offset="0.582" stop-color="#9e0a77"/><stop offset="0.618" stop-color="#9e0662"/><stop offset="0.662" stop-color="#9e024e"/><stop offset="0.716" stop-color="#9e003c"/><stop offset="0.858" stop-color="#9b001d"/><stop offset="0.916" stop-color="#8f0014"/><stop offset="1.000" stop-color="#77000a"/></linearGradient>
<linearGradient id="h112" gradientUnits="userSpaceOnUse" x1="1229" x2="1667" y1="0" y2="0"><stop offset="0.000" stop-color="#00359e"/><stop offset="0.187" stop-color="#01289e"/><stop offset="0.260" stop-color="#11219e"/><stop offset="0.333" stop-color="#26269e"/><stop offset="0.370" stop-color="#2d239e"/><stop offset="0.406" stop-color="#3a1f9e"/><stop offset="0.447" stop-color="#4f1b9e"/><stop offset="0.493" stop-color="#6e169e"/><stop offset="0.539" stop-color="#95109e"/><stop offset="0.557" stop-color="#9d0e96"/><stop offset="0.594" stop-color="#9e087a"/><stop offset="0.630" stop-color="#9e0464"/><stop offset="0.726" stop-color="#9e003f"/><stop offset="0.790" stop-color="#9e002e"/><stop offset="0.872" stop-color="#9b001f"/><stop offset="0.927" stop-color="#910016"/><stop offset="1.000" stop-color="#7d000d"/></linearGradient>
<linearGradient id="h113" gradientUnits="userSpaceOnUse" x1="1231" x2="1657" y1="0" y2="0"><stop offset="0.000" stop-color="#00329e"/><stop offset="0.188" stop-color="#01259e"/><stop offset="0.258" stop-color="#101f9e"/><stop offset="0.333" stop-color="#24239e"/><stop offset="0.376" stop-color="#2c209e"/><stop offset="0.413" stop-color="#391c9e"/><stop offset="0.455" stop-color="#4e189e"/><stop offset="0.502" stop-color="#6d139e"/><stop offset="0.549" stop-color="#920d9e"/><stop offset="0.573" stop-color="#9e0a95"/><stop offset="0.606" stop-color="#9e067c"/><stop offset="0.643" stop-color="#9e0267"/><stop offset="0.737" stop-color="#9e0042"/><stop offset="0.803" stop-color="#9e0030"/><stop offset="0.883" stop-color="#9c0021"/><stop offset="0.934" stop-color="#940019"/><stop offset="1.000" stop-color="#840010"/></linearGradient>
<linearGradient id="h114" gradientUnits="userSpaceOnUse" x1="1232" x2="1647" y1="0" y2="0"><stop offset="0.000" stop-color="#002f9e"/><stop offset="0.188" stop-color="#01229e"/><stop offset="0.255" stop-color="#0e1d9e"/><stop offset="0.333" stop-color="#22219e"/><stop offset="0.376" stop-color="#291d9e"/><stop offset="0.424" stop-color="#3a199e"/><stop offset="0.472" stop-color="#52149e"/><stop offset="0.520" stop-color="#700f9e"/><stop offset="0.569" stop-color="#960a9d"/><stop offset="0.588" stop-color="#9e0795"/><stop offset="0.622" stop-color="#9e047d"/><stop offset="0.660" stop-color="#9e0168"/><stop offset="0.747" stop-color="#9e0045"/><stop offset="0.814" stop-color="#9e0033"/><stop offset="0.896" stop-color="#9d0023"/><stop offset="1.000" stop-color="#8a0014"/></linearGradient>
<linearGradient id="h115" gradientUnits="userSpaceOnUse" x1="1234" x2="1637" y1="0" y2="0"><stop offset="0.000" stop-color="#002c9e"/><stop offset="0.189" stop-color="#011f9e"/><stop offset="0.253" stop-color="#0d1b9e"/><stop offset="0.328" stop-color="#1f1e9e"/><stop offset="0.382" stop-color="#281a9e"/><stop offset="0.432" stop-color="#39169e"/><stop offset="0.481" stop-color="#51119e"/><stop offset="0.531" stop-color="#6f0c9e"/><stop offset="0.586" stop-color="#97079d"/><stop offset="0.605" stop-color="#9e0594"/><stop offset="0.675" stop-color="#9e006a"/><stop offset="0.759" stop-color="#9e0049"/><stop offset="0.829" stop-color="#9e0036"/><stop offset="0.913" stop-color="#9d0025"/><stop offset="1.000" stop-color="#900017"/></linearGradient>
<linearGradient id="h116" gradientUnits="userSpaceOnUse" x1="1236" x2="1627" y1="0" y2="0"><stop offset="0.000" stop-color="#00299e"/><stop offset="0.184" stop-color="#011d9e"/><stop offset="0.246" stop-color="#0b199e"/><stop offset="0.327" stop-color="#1d1c9e"/><stop offset="0.384" stop-color="#26189e"/><stop offset="0.435" stop-color="#36139e"/><stop offset="0.491" stop-color="#500e9e"/><stop offset="0.542" stop-color="#6e0a9e"/><stop offset="0.598" stop-color="#95059e"/><stop offset="0.624" stop-color="#9e0293"/><stop offset="0.691" stop-color="#9e006c"/><stop offset="0.772" stop-color="#9e004c"/><stop offset="0.844" stop-color="#9e0038"/><stop offset="0.926" stop-color="#9e0028"/><stop offset="1.000" stop-color="#95001c"/></linearGradient>
<linearGradient id="h117" gradientUnits="userSpaceOnUse" x1="1238" x2="1617" y1="0" y2="0"><stop offset="0.000" stop-color="#00269e"/><stop offset="0.185" stop-color="#011b9e"/><stop offset="0.253" stop-color="#0c169e"/><stop offset="0.327" stop-color="#1b1a9e"/><stop offset="0.385" stop-color="#24169e"/><stop offset="0.438" stop-color="#34119e"/><stop offset="0.496" stop-color="#4c0c9e"/><stop offset="0.554" stop-color="#6c079e"/><stop offset="0.617" stop-color="#96029e"/><stop offset="0.644" stop-color="#9e0192"/><stop offset="0.712" stop-color="#9e006c"/><stop offset="0.786" stop-color="#9e004f"/><stop offset="0.876" stop-color="#9e0037"/><stop offset="1.000" stop-color="#990021"/></linearGradient>
<linearGradient id="h118" gradientUnits="userSpaceOnUse" x1="1240" x2="1607" y1="0" y2="0"><stop offset="0.000" stop-color="#00239e"/><stop offset="0.185" stop-color="#01189e"/><stop offset="0.256" stop-color="#0c159e"/><stop offset="0.322" stop-color="#19189e"/><stop offset="0.392" stop-color="#23139e"/><stop offset="0.452" stop-color="#350e9e"/><stop offset="0.512" stop-color="#4e099e"/><stop offset="0.572" stop-color="#6e059e"/><stop offset="0.638" stop-color="#98019d"/><stop offset="0.659" stop-color="#9e0095"/><stop offset="0.725" stop-color="#9e0070"/><stop offset="0.801" stop-color="#9e0053"/><stop offset="0.888" stop-color="#9e003b"/><stop offset="1.000" stop-color="#9c0026"/></linearGradient>
<linearGradient id="h119" gradientUnits="userSpaceOnUse" x1="1242" x2="1598" y1="0" y2="0"><stop offset="0.000" stop-color="#00209e"/><stop offset="0.185" stop-color="#01169e"/><stop offset="0.253" stop-color="#0b139e"/><stop offset="0.320" stop-color="#17169e"/><stop offset="0.393" stop-color="#21119e"/><stop offset="0.455" stop-color="#330c9e"/><stop offset="0.517" stop-color="#4b089e"/><stop offset="0.579" stop-color="#6a039e"/><stop offset="0.652" stop-color="#96009e"/><stop offset="0.680" stop-color="#9e0094"/><stop offset="0.742" stop-color="#9e0072"/><stop offset="0.815" stop-color="#9e0056"/><stop offset="0.899" stop-color="#9e003f"/><stop offset="1.000" stop-color="#9e002b"/></linearGradient>
<linearGradient id="h120" gradientUnits="userSpaceOnUse" x1="1244" x2="1588" y1="0" y2="0"><stop offset="0.000" stop-color="#001e9e"/><stop offset="0.180" stop-color="#01149e"/><stop offset="0.244" stop-color="#09119e"/><stop offset="0.320" stop-color="#15149e"/><stop offset="0.401" stop-color="#210f9e"/><stop offset="0.465" stop-color="#320a9e"/><stop offset="0.535" stop-color="#4d059e"/><stop offset="0.599" stop-color="#6c019e"/><stop offset="0.674" stop-color="#97009e"/><stop offset="0.703" stop-color="#9e0093"/><stop offset="0.762" stop-color="#9e0075"/><stop offset="0.831" stop-color="#9e005a"/><stop offset="0.907" stop-color="#9e0044"/><stop offset="1.000" stop-color="#9e0031"/></linearGradient>
<linearGradient id="h121" gradientUnits="userSpaceOnUse" x1="1246" x2="1578" y1="0" y2="0"><stop offset="0.000" stop-color="#001b9e"/><stop offset="0.181" stop-color="#01129e"/><stop offset="0.241" stop-color="#08109e"/><stop offset="0.313" stop-color="#13129e"/><stop offset="0.410" stop-color="#200c9e"/><stop offset="0.476" stop-color="#32089e"/><stop offset="0.548" stop-color="#4d039e"/><stop offset="0.627" stop-color="#71009e"/><stop offset="0.699" stop-color="#98009d"/><stop offset="0.723" stop-color="#9e0095"/><stop offset="0.783" stop-color="#9e0077"/><stop offset="0.843" stop-color="#9e005f"/><stop offset="0.916" stop-color="#9e004a"/><stop offset="1.000" stop-color="#9e0038"/></linearGradient>
<linearGradient id="h122" gradientUnits="userSpaceOnUse" x1="1249" x2="1568" y1="0" y2="0"><stop offset="0.000" stop-color="#00199e"/><stop offset="0.182" stop-color="#01109e"/><stop offset="0.307" stop-color="#11119e"/><stop offset="0.414" stop-color="#1f0a9e"/><stop offset="0.483" stop-color="#31069e"/><stop offset="0.558" stop-color="#4b029e"/><stop offset="0.646" stop-color="#71009e"/><stop offset="0.721" stop-color="#97009d"/><stop offset="0.746" stop-color="#9e0095"/><stop offset="0.803" stop-color="#9e007a"/><stop offset="0.859" stop-color="#9e0064"/><stop offset="1.000" stop-color="#9e003f"/></linearGradient>
<linearGradient id="h123" gradientUnits="userSpaceOnUse" x1="1251" x2="1558" y1="0" y2="0"><stop offset="0.000" stop-color="#00179e"/><stop offset="0.176" stop-color="#010f9e"/><stop offset="0.306" stop-color="#100f9e"/><stop offset="0.417" stop-color="#1e099e"/><stop offset="0.495" stop-color="#31049e"/><stop offset="0.580" stop-color="#4d019e"/><stop offset="0.664" stop-color="#6f009e"/><stop offset="0.743" stop-color="#96009e"/><stop offset="0.775" stop-color="#9e0094"/><stop offset="0.827" stop-color="#9e007c"/><stop offset="0.886" stop-color="#9e0066"/><stop offset="1.000" stop-color="#9e0047"/></linearGradient>
<linearGradient id="h124" gradientUnits="userSpaceOnUse" x1="1253" x2="1548" y1="0" y2="0"><stop offset="0.000" stop-color="#00159e"/><stop offset="0.176" stop-color="#010d9e"/><stop offset="0.298" stop-color="#0e0e9e"/><stop offset="0.359" stop-color="#130b9e"/><stop offset="0.427" stop-color="#1e079e"/><stop offset="0.515" stop-color="#33029e"/><stop offset="0.610" stop-color="#51009e"/><stop offset="0.692" stop-color="#71009e"/><stop offset="0.773" stop-color="#97009e"/><stop offset="0.807" stop-color="#9e0093"/><stop offset="0.895" stop-color="#9e006f"/><stop offset="1.000" stop-color="#9e0050"/></linearGradient>
<linearGradient id="h125" gradientUnits="userSpaceOnUse" x1="1255" x2="1538" y1="0" y2="0"><stop offset="0.000" stop-color="#00129e"/><stop offset="0.177" stop-color="#010b9e"/><stop offset="0.297" stop-color="#0d0c9e"/><stop offset="0.367" stop-color="#12099e"/><stop offset="0.438" stop-color="#1e059e"/><stop offset="0.530" stop-color="#33019e"/><stop offset="0.636" stop-color="#53009e"/><stop offset="0.721" stop-color="#72009e"/><stop offset="0.806" stop-color="#98009d"/><stop offset="0.834" stop-color="#9e0095"/><stop offset="0.912" stop-color="#9e0076"/><stop offset="1.000" stop-color="#9e005b"/></linearGradient>
<linearGradient id="h126" gradientUnits="userSpaceOnUse" x1="1257" x2="1528" y1="0" y2="0"><stop offset="0.000" stop-color="#00109e"/><stop offset="0.177" stop-color="#010a9e"/><stop offset="0.354" stop-color="#10089e"/><stop offset="0.443" stop-color="#1c049e"/><stop offset="0.546" stop-color="#33009e"/><stop offset="0.657" stop-color="#52009e"/><stop offset="0.745" stop-color="#70009e"/><stop offset="0.834" stop-color="#96009e"/><stop offset="0.871" stop-color="#9e0094"/><stop offset="0.930" stop-color="#9e007d"/><stop offset="1.000" stop-color="#9e0066"/></linearGradient>
<linearGradient id="h127" gradientUnits="userSpaceOnUse" x1="1260" x2="1518" y1="0" y2="0"><stop offset="0.000" stop-color="#000e9e"/><stop offset="0.171" stop-color="#01099e"/><stop offset="0.279" stop-color="#0a099e"/><stop offset="0.426" stop-color="#18039e"/><stop offset="0.550" stop-color="#30009e"/><stop offset="0.667" stop-color="#4d009e"/><stop offset="0.767" stop-color="#6e009e"/><stop offset="0.876" stop-color="#98009d"/><stop offset="0.907" stop-color="#9e0095"/><stop offset="1.000" stop-color="#9e0073"/></linearGradient>
<linearGradient id="h128" gradientUnits="userSpaceOnUse" x1="1262" x2="1508" y1="0" y2="0"><stop offset="0.000" stop-color="#000d9e"/><stop offset="0.171" stop-color="#01079e"/><stop offset="0.350" stop-color="#0d059e"/><stop offset="0.447" stop-color="#19029e"/><stop offset="0.577" stop-color="#31009e"/><stop offset="0.691" stop-color="#4c009e"/><stop offset="0.805" stop-color="#6f009e"/><stop offset="0.911" stop-color="#97009e"/><stop offset="0.943" stop-color="#9e0097"/><stop offset="1.000" stop-color="#9e0082"/></linearGradient>
<linearGradient id="h129" gradientUnits="userSpaceOnUse" x1="1264" x2="1498" y1="0" y2="0"><stop offset="0.000" stop-color="#000b9e"/><stop offset="0.154" stop-color="#00079e"/><stop offset="0.316" stop-color="#0a059e"/><stop offset="0.479" stop-color="#1c019e"/><stop offset="0.598" stop-color="#31009e"/><stop offset="0.709" stop-color="#4a009e"/><stop offset="0.829" stop-color="#6b009e"/><stop offset="0.949" stop-color="#95009e"/><stop offset="0.974" stop-color="#9c009b"/><stop offset="1.000" stop-color="#9e0093"/></linearGradient>
<linearGradient id="h130" gradientUnits="userSpaceOnUse" x1="1266" x2="1489" y1="0" y2="0"><stop offset="0.000" stop-color="#00099e"/><stop offset="0.152" stop-color="#00069e"/><stop offset="0.323" stop-color="#09049e"/><stop offset="0.529" stop-color="#22009e"/><stop offset="0.655" stop-color="#37009e"/><stop offset="0.771" stop-color="#51009e"/><stop offset="0.888" stop-color="#72009e"/><stop offset="1.000" stop-color="#97009e"/></linearGradient>
<linearGradient id="h131" gradientUnits="userSpaceOnUse" x1="1268" x2="1479" y1="0" y2="0"><stop offset="0.000" stop-color="#00089e"/><stop offset="0.142" stop-color="#00059e"/><stop offset="0.313" stop-color="#08039e"/><stop offset="0.521" stop-color="#1d009e"/><stop offset="0.654" stop-color="#32009e"/><stop offset="0.777" stop-color="#4a009e"/><stop offset="0.891" stop-color="#66009e"/><stop offset="1.000" stop-color="#86009e"/></linearGradient>
<linearGradient id="h132" gradientUnits="userSpaceOnUse" x1="1270" x2="1469" y1="0" y2="0"><stop offset="0.000" stop-color="#00079e"/><stop offset="0.141" stop-color="#00049e"/><stop offset="0.302" stop-color="#07029e"/><stop offset="0.523" stop-color="#1b009e"/><stop offset="0.774" stop-color="#41009e"/><stop offset="1.000" stop-color="#76009e"/></linearGradient>
<linearGradient id="h133" gradientUnits="userSpaceOnUse" x1="1272" x2="1459" y1="0" y2="0"><stop offset="0.000" stop-color="#00059e"/><stop offset="0.289" stop-color="#05029e"/><stop offset="0.513" stop-color="#17009e"/><stop offset="0.770" stop-color="#39009e"/><stop offset="1.000" stop-color="#67009e"/></linearGradient>
<linearGradient id="h134" gradientUnits="userSpaceOnUse" x1="1275" x2="1449" y1="0" y2="0"><stop offset="0.000" stop-color="#00049e"/><stop offset="0.276" stop-color="#05019e"/><stop offset="0.506" stop-color="#15009e"/><stop offset="0.759" stop-color="#31009e"/><stop offset="1.000" stop-color="#5a009e"/></linearGradient>
<linearGradient id="h135" gradientUnits="userSpaceOnUse" x1="1277" x2="1439" y1="0" y2="0"><stop offset="0.000" stop-color="#00039e"/><stop offset="0.259" stop-color="#04019e"/><stop offset="0.506" stop-color="#12009e"/><stop offset="0.765" stop-color="#2c009e"/><stop offset="1.000" stop-color="#4e009e"/></linearGradient>
<linearGradient id="h136" gradientUnits="userSpaceOnUse" x1="1279" x2="1429" y1="0" y2="0"><stop offset="0.000" stop-color="#00029e"/><stop offset="0.240" stop-color="#03009e"/><stop offset="0.493" stop-color="#10009e"/><stop offset="0.760" stop-color="#26009e"/><stop offset="1.000" stop-color="#44009e"/></linearGradient>
<linearGradient id="h137" gradientUnits="userSpaceOnUse" x1="1281" x2="1419" y1="0" y2="0"><stop offset="0.000" stop-color="#00019e"/><stop offset="0.232" stop-color="#02009e"/><stop offset="0.493" stop-color="#0e009e"/><stop offset="0.754" stop-color="#21009e"/><stop offset="1.000" stop-color="#3a009e"/></linearGradient>
<linearGradient id="h138" gradientUnits="userSpaceOnUse" x1="1283" x2="1409" y1="0" y2="0"><stop offset="0.000" stop-color="#00019e"/><stop offset="0.222" stop-color="#02009e"/><stop offset="0.492" stop-color="#0c009e"/><stop offset="0.746" stop-color="#1c009e"/><stop offset="1.000" stop-color="#31009e"/></linearGradient>
<linearGradient id="h139" gradientUnits="userSpaceOnUse" x1="1285" x2="1399" y1="0" y2="0"><stop offset="0.000" stop-color="#00009e"/><stop offset="0.211" stop-color="#02009e"/><stop offset="0.474" stop-color="#0a009e"/><stop offset="0.737" stop-color="#17009e"/><stop offset="1.000" stop-color="#2a009e"/></linearGradient>
<linearGradient id="h140" gradientUnits="userSpaceOnUse" x1="1287" x2="1389" y1="0" y2="0"><stop offset="0.000" stop-color="#00009e"/><stop offset="0.471" stop-color="#09009e"/><stop offset="1.000" stop-color="#23009e"/></linearGradient>
<linearGradient id="h141" gradientUnits="userSpaceOnUse" x1="1289" x2="1380" y1="0" y2="0"><stop offset="0.000" stop-color="#00009e"/><stop offset="0.484" stop-color="#08009e"/><stop offset="1.000" stop-color="#1d009e"/></linearGradient>
<linearGradient id="h142" gradientUnits="userSpaceOnUse" x1="1291" x2="1370" y1="0" y2="0"><stop offset="0.000" stop-color="#00009e"/><stop offset="0.481" stop-color="#07009e"/><stop offset="1.000" stop-color="#18009e"/></linearGradient>
<linearGradient id="h143" gradientUnits="userSpaceOnUse" x1="1293" x2="1360" y1="0" y2="0"><stop offset="0.000" stop-color="#00009e"/><stop offset="0.478" stop-color="#06009e"/><stop offset="1.000" stop-color="#13009e"/></linearGradient>
<linearGradient id="h144" gradientUnits="userSpaceOnUse" x1="1296" x2="1350" y1="0" y2="0"><stop offset="0.000" stop-color="#00009e"/><stop offset="1.000" stop-color="#0e009e"/></linearGradient>
<linearGradient id="h145" gradientUnits="userSpaceOnUse" x1="1299" x2="1340" y1="0" y2="0"><stop offset="0.000" stop-color="#01009e"/><stop offset="1.000" stop-color="#0b009e"/></linearGradient>
<linearGradient id="h146" gradientUnits="userSpaceOnUse" x1="1303" x2="1329" y1="0" y2="0"><stop offset="0.000" stop-color="#01009e"/><stop offset="1.000" stop-color="#07009e"/></linearGradient>
<linearGradient id="t3" gradientUnits="userSpaceOnUse" x1="1344" x2="1371" y1="0" y2="0"><stop offset="0.000" stop-color="#00dd01"/><stop offset="1.000" stop-color="#03dd00"/></linearGradient>
<linearGradient id="t4" gradientUnits="userSpaceOnUse" x1="1343" x2="1376" y1="0" y2="0"><stop offset="0.000" stop-color="#00e001"/><stop offset="1.000" stop-color="#05e000"/></linearGradient>
<linearGradient id="t5" gradientUnits="userSpaceOnUse" x1="1343" x2="1382" y1="0" y2="0"><stop offset="0.000" stop-color="#00e401"/><stop offset="1.000" stop-color="#06e400"/></linearGradient>
<linearGradient id="t6" gradientUnits="userSpaceOnUse" x1="1342" x2="1387" y1="0" y2="0"><stop offset="0.000" stop-color="#00e702"/><stop offset="1.000" stop-color="#08e700"/></linearGradient>
<linearGradient id="t7" gradientUnits="userSpaceOnUse" x1="1342" x2="1393" y1="0" y2="0"><stop offset="0.000" stop-color="#00eb02"/><stop offset="1.000" stop-color="#0beb00"/></linearGradient>
<linearGradient id="t8" gradientUnits="userSpaceOnUse" x1="1341" x2="1398" y1="0" y2="0"><stop offset="0.000" stop-color="#00ee03"/><stop offset="1.000" stop-color="#0dee00"/></linearGradient>
<linearGradient id="t9" gradientUnits="userSpaceOnUse" x1="1341" x2="1404" y1="0" y2="0"><stop offset="0.000" stop-color="#00f104"/><stop offset="0.603" stop-color="#07f102"/><stop offset="1.000" stop-color="#10f100"/></linearGradient>
<linearGradient id="t10" gradientUnits="userSpaceOnUse" x1="1341" x2="1409" y1="0" y2="0"><stop offset="0.000" stop-color="#00f404"/><stop offset="0.618" stop-color="#08f402"/><stop offset="1.000" stop-color="#13f400"/></linearGradient>
<linearGradient id="t11" gradientUnits="userSpaceOnUse" x1="1340" x2="1415" y1="0" y2="0"><stop offset="0.000" stop-color="#00f705"/><stop offset="0.613" stop-color="#0af703"/><stop offset="1.000" stop-color="#17f700"/></linearGradient>
<linearGradient id="t12" gradientUnits="userSpaceOnUse" x1="1340" x2="1420" y1="0" y2="0"><stop offset="0.000" stop-color="#00f906"/><stop offset="0.600" stop-color="#0bf903"/><stop offset="1.000" stop-color="#1af900"/></linearGradient>
<linearGradient id="t13" gradientUnits="userSpaceOnUse" x1="1339" x2="1425" y1="0" y2="0"><stop offset="0.000" stop-color="#00fb07"/><stop offset="0.605" stop-color="#0cfb04"/><stop offset="1.000" stop-color="#1efb00"/></linearGradient>
<linearGradient id="t14" gradientUnits="userSpaceOnUse" x1="1339" x2="1431" y1="0" y2="0"><stop offset="0.000" stop-color="#00fd08"/><stop offset="0.587" stop-color="#0efd04"/><stop offset="1.000" stop-color="#23fd00"/></linearGradient>
<linearGradient id="t15" gradientUnits="userSpaceOnUse" x1="1338" x2="1436" y1="0" y2="0"><stop offset="0.000" stop-color="#00fe09"/><stop offset="0.327" stop-color="#09fe09"/><stop offset="0.592" stop-color="#0ffe05"/><stop offset="1.000" stop-color="#27fe00"/></linearGradient>
<linearGradient id="t16" gradientUnits="userSpaceOnUse" x1="1338" x2="1442" y1="0" y2="0"><stop offset="0.000" stop-color="#00ff0a"/><stop offset="0.327" stop-color="#0bff0a"/><stop offset="0.596" stop-color="#12ff05"/><stop offset="1.000" stop-color="#2dff00"/></linearGradient>
<linearGradient id="t17" gradientUnits="userSpaceOnUse" x1="1337" x2="1447" y1="0" y2="0"><stop offset="0.000" stop-color="#00ff0b"/><stop offset="0.327" stop-color="#0cff0b"/><stop offset="0.582" stop-color="#13ff06"/><stop offset="1.000" stop-color="#32ff00"/></linearGradient>
<linearGradient id="t18" gradientUnits="userSpaceOnUse" x1="1337" x2="1453" y1="0" y2="0"><stop offset="0.000" stop-color="#00ff0c"/><stop offset="0.328" stop-color="#0dff0c"/><stop offset="0.586" stop-color="#15ff07"/><stop offset="0.776" stop-color="#23ff03"/><stop offset="1.000" stop-color="#38ff00"/></linearGradient>
<linearGradient id="t19" gradientUnits="userSpaceOnUse" x1="1336" x2="1458" y1="0" y2="0"><stop offset="0.000" stop-color="#00ff0d"/><stop offset="0.328" stop-color="#0eff0d"/><stop offset="0.590" stop-color="#17ff07"/><stop offset="0.787" stop-color="#27ff03"/><stop offset="1.000" stop-color="#3eff00"/></linearGradient>
<linearGradient id="t20" gradientUnits="userSpaceOnUse" x1="1336" x2="1464" y1="0" y2="0"><stop offset="0.000" stop-color="#00ff0e"/><stop offset="0.156" stop-color="#06ff0c"/><stop offset="0.328" stop-color="#0fff0e"/><stop offset="0.578" stop-color="#19ff08"/><stop offset="0.781" stop-color="#2bff03"/><stop offset="1.000" stop-color="#45ff00"/></linearGradient>
<linearGradient id="t21" gradientUnits="userSpaceOnUse" x1="1336" x2="1469" y1="0" y2="0"><stop offset="0.000" stop-color="#00ff0f"/><stop offset="0.150" stop-color="#06ff0d"/><stop offset="0.331" stop-color="#10ff0f"/><stop offset="0.586" stop-color="#1cff09"/><stop offset="0.782" stop-color="#2fff04"/><stop offset="1.000" stop-color="#4cff00"/></linearGradient>
<linearGradient id="t22" gradientUnits="userSpaceOnUse" x1="1335" x2="1475" y1="0" y2="0"><stop offset="0.000" stop-color="#00ff11"/><stop offset="0.157" stop-color="#07ff0e"/><stop offset="0.329" stop-color="#12ff11"/><stop offset="0.571" stop-color="#1eff0a"/><stop offset="0.771" stop-color="#33ff04"/><stop offset="1.000" stop-color="#55ff00"/></linearGradient>
<linearGradient id="t23" gradientUnits="userSpaceOnUse" x1="1335" x2="1480" y1="0" y2="0"><stop offset="0.000" stop-color="#00ff12"/><stop offset="0.152" stop-color="#07ff0f"/><stop offset="0.317" stop-color="#13ff12"/><stop offset="0.441" stop-color="#17ff0f"/><stop offset="0.579" stop-color="#21ff0a"/><stop offset="0.786" stop-color="#39ff04"/><stop offset="1.000" stop-color="#5cff00"/></linearGradient>
<linearGradient id="t24" gradientUnits="userSpaceOnUse" x1="1334" x2="1486" y1="0" y2="0"><stop offset="0.000" stop-color="#00ff14"/><stop offset="0.158" stop-color="#08ff10"/><stop offset="0.329" stop-color="#14ff13"/><stop offset="0.447" stop-color="#19ff0f"/><stop offset="0.579" stop-color="#24ff0b"/><stop offset="0.776" stop-color="#3eff05"/><stop offset="1.000" stop-color="#66ff00"/></linearGradient>
<linearGradient id="t25" gradientUnits="userSpaceOnUse" x1="1334" x2="1491" y1="0" y2="0"><stop offset="0.000" stop-color="#00ff15"/><stop offset="0.153" stop-color="#08ff11"/><stop offset="0.318" stop-color="#16ff15"/><stop offset="0.446" stop-color="#1bff11"/><stop offset="0.573" stop-color="#26ff0c"/><stop offset="0.777" stop-color="#43ff05"/><stop offset="1.000" stop-color="#6fff00"/></linearGradient>
<linearGradient id="t26" gradientUnits="userSpaceOnUse" x1="1333" x2="1497" y1="0" y2="0"><stop offset="0.000" stop-color="#00ff17"/><stop offset="0.159" stop-color="#09ff12"/><stop offset="0.317" stop-color="#17ff16"/><stop offset="0.439" stop-color="#1cff12"/><stop offset="0.573" stop-color="#2aff0d"/><stop offset="0.780" stop-color="#4aff05"/><stop offset="1.000" stop-color="#7bff00"/></linearGradient>
<linearGradient id="t27" gradientUnits="userSpaceOnUse" x1="1333" x2="1502" y1="0" y2="0"><stop offset="0.000" stop-color="#00ff19"/><stop offset="0.154" stop-color="#0aff14"/><stop offset="0.320" stop-color="#19ff18"/><stop offset="0.438" stop-color="#1eff13"/><stop offset="0.568" stop-color="#2cff0e"/><stop offset="0.781" stop-color="#51ff06"/><stop offset="1.000" stop-color="#86ff00"/></linearGradient>
<linearGradient id="t28" gradientUnits="userSpaceOnUse" x1="1332" x2="1508" y1="0" y2="0"><stop offset="0.000" stop-color="#00ff1a"/><stop offset="0.159" stop-color="#0bff15"/><stop offset="0.318" stop-color="#1aff19"/><stop offset="0.432" stop-color="#20ff15"/><stop offset="0.568" stop-color="#30ff0f"/><stop offset="0.784" stop-color="#59ff06"/><stop offset="1.000" stop-color="#93ff00"/></linearGradient>
<linearGradient id="t29" gradientUnits="userSpaceOnUse" x1="1332" x2="1513" y1="0" y2="0"><stop offset="0.000" stop-color="#00ff1c"/><stop offset="0.155" stop-color="#0bff17"/><stop offset="0.320" stop-color="#1cff1b"/><stop offset="0.431" stop-color="#22ff16"/><stop offset="0.564" stop-color="#33ff10"/><stop offset="0.773" stop-color="#5eff07"/><stop offset="1.000" stop-color="#a0ff00"/></linearGradient>
<linearGradient id="t30" gradientUnits="userSpaceOnUse" x1="1332" x2="1519" y1="0" y2="0"><stop offset="0.000" stop-color="#00ff1e"/><stop offset="0.160" stop-color="#0dff18"/><stop offset="0.321" stop-color="#1eff1d"/><stop offset="0.439" stop-color="#26ff17"/><stop offset="0.567" stop-color="#38ff11"/><stop offset="0.674" stop-color="#4eff0c"/><stop offset="0.781" stop-color="#69ff07"/><stop offset="1.000" stop-color="#afff00"/></linearGradient>
<linearGradient id="t31" gradientUnits="userSpaceOnUse" x1="1331" x2="1524" y1="0" y2="0"><stop offset="0.000" stop-color="#00ff20"/><stop offset="0.145" stop-color="#0bff1a"/><stop offset="0.311" stop-color="#1fff1f"/><stop offset="0.425" stop-color="#27ff1a"/><stop offset="0.560" stop-color="#3bff13"/><stop offset="0.663" stop-color="#51ff0e"/><stop offset="0.777" stop-color="#70ff08"/><stop offset="0.881" stop-color="#91ff03"/><stop offset="1.000" stop-color="#beff00"/></linearGradient>
<linearGradient id="t32" gradientUnits="userSpaceOnUse" x1="1331" x2="1530" y1="0" y2="0"><stop offset="0.000" stop-color="#00ff22"/><stop offset="0.141" stop-color="#0cff1c"/><stop offset="0.312" stop-color="#21ff21"/><stop offset="0.422" stop-color="#29ff1b"/><stop offset="0.563" stop-color="#41ff14"/><stop offset="0.663" stop-color="#58ff0f"/><stop offset="0.774" stop-color="#79ff09"/><stop offset="0.884" stop-color="#a0ff03"/><stop offset="1.000" stop-color="#d0ff00"/></linearGradient>
<linearGradient id="t33" gradientUnits="userSpaceOnUse" x1="1330" x2="1535" y1="0" y2="0"><stop offset="0.000" stop-color="#00ff25"/><stop offset="0.146" stop-color="#0dff1d"/><stop offset="0.312" stop-color="#23ff23"/><stop offset="0.420" stop-color="#2cff1d"/><stop offset="0.566" stop-color="#46ff15"/><stop offset="0.673" stop-color="#62ff0f"/><stop offset="0.780" stop-color="#85ff09"/><stop offset="0.888" stop-color="#afff04"/><stop offset="1.000" stop-color="#e2ff00"/></linearGradient>
<linearGradient id="t34" gradientUnits="userSpaceOnUse" x1="1330" x2="1541" y1="0" y2="0"><stop offset="0.000" stop-color="#00ff27"/><stop offset="0.142" stop-color="#0dff1f"/><stop offset="0.303" stop-color="#25ff25"/><stop offset="0.408" stop-color="#2dff20"/><stop offset="0.559" stop-color="#4aff17"/><stop offset="0.664" stop-color="#67ff11"/><stop offset="0.768" stop-color="#8cff0a"/><stop offset="0.872" stop-color="#b8ff05"/><stop offset="1.000" stop-color="#f5fe00"/></linearGradient>
<linearGradient id="t35" gradientUnits="userSpaceOnUse" x1="1329" x2="1546" y1="0" y2="0"><stop offset="0.000" stop-color="#00ff29"/><stop offset="0.147" stop-color="#0eff21"/><stop offset="0.304" stop-color="#27ff27"/><stop offset="0.406" stop-color="#2fff22"/><stop offset="0.544" stop-color="#4bff19"/><stop offset="0.636" stop-color="#66ff14"/><stop offset="0.728" stop-color="#87ff0e"/><stop offset="0.839" stop-color="#b7ff07"/><stop offset="0.949" stop-color="#efff01"/><stop offset="0.977" stop-color="#fafb00"/><stop offset="1.000" stop-color="#fef300"/></linearGradient>
<linearGradient id="t36" gradientUnits="userSpaceOnUse" x1="1329" x2="1552" y1="0" y2="0"><stop offset="0.000" stop-color="#00ff2c"/><stop offset="0.152" stop-color="#10ff23"/><stop offset="0.305" stop-color="#2aff29"/><stop offset="0.395" stop-color="#31ff24"/><stop offset="0.511" stop-color="#48ff1d"/><stop offset="0.610" stop-color="#65ff16"/><stop offset="0.709" stop-color="#8bff10"/><stop offset="0.807" stop-color="#b7ff09"/><stop offset="0.915" stop-color="#f1fe03"/><stop offset="0.951" stop-color="#fdf601"/><stop offset="1.000" stop-color="#ffde00"/></linearGradient>
<linearGradient id="t37" gradientUnits="userSpaceOnUse" x1="1328" x2="1557" y1="0" y2="0"><stop offset="0.000" stop-color="#00ff2e"/><stop offset="0.061" stop-color="#04ff2a"/><stop offset="0.166" stop-color="#13ff25"/><stop offset="0.314" stop-color="#2cff2b"/><stop offset="0.402" stop-color="#35ff26"/><stop offset="0.489" stop-color="#47ff20"/><stop offset="0.585" stop-color="#64ff1a"/><stop offset="0.681" stop-color="#89ff13"/><stop offset="0.777" stop-color="#b6ff0c"/><stop offset="0.891" stop-color="#f5fe05"/><stop offset="0.926" stop-color="#fef202"/><stop offset="1.000" stop-color="#ffcd00"/></linearGradient>
<linearGradient id="t38" gradientUnits="userSpaceOnUse" x1="1328" x2="1563" y1="0" y2="0"><stop offset="0.000" stop-color="#00ff31"/><stop offset="0.060" stop-color="#04ff2c"/><stop offset="0.153" stop-color="#12ff28"/><stop offset="0.306" stop-color="#2eff2e"/><stop offset="0.391" stop-color="#37ff29"/><stop offset="0.494" stop-color="#4eff22"/><stop offset="0.579" stop-color="#6aff1c"/><stop offset="0.672" stop-color="#91ff15"/><stop offset="0.757" stop-color="#bcff0e"/><stop offset="0.851" stop-color="#f2fe08"/><stop offset="0.868" stop-color="#fafb06"/><stop offset="0.894" stop-color="#fef004"/><stop offset="1.000" stop-color="#ffbb00"/></linearGradient>
<linearGradient id="t39" gradientUnits="userSpaceOnUse" x1="1328" x2="1568" y1="0" y2="0"><stop offset="0.000" stop-color="#00ff34"/><stop offset="0.058" stop-color="#05ff2f"/><stop offset="0.158" stop-color="#14ff2a"/><stop offset="0.308" stop-color="#31ff30"/><stop offset="0.383" stop-color="#39ff2c"/><stop offset="0.483" stop-color="#51ff25"/><stop offset="0.567" stop-color="#6dff1e"/><stop offset="0.650" stop-color="#91ff18"/><stop offset="0.733" stop-color="#bdff11"/><stop offset="0.817" stop-color="#effe0b"/><stop offset="0.842" stop-color="#fbfa09"/><stop offset="0.858" stop-color="#fef207"/><stop offset="0.925" stop-color="#ffce02"/><stop offset="1.000" stop-color="#ffac00"/></linearGradient>
<linearGradient id="t40" gradientUnits="userSpaceOnUse" x1="1327" x2="1574" y1="0" y2="0"><stop offset="0.000" stop-color="#00ff37"/><stop offset="0.130" stop-color="#10ff2d"/><stop offset="0.219" stop-color="#21ff2c"/><stop offset="0.308" stop-color="#34ff33"/><stop offset="0.389" stop-color="#3eff2e"/><stop offset="0.470" stop-color="#52ff28"/><stop offset="0.543" stop-color="#6bff22"/><stop offset="0.623" stop-color="#90ff1c"/><stop offset="0.704" stop-color="#bbff15"/><stop offset="0.785" stop-color="#effe0e"/><stop offset="0.810" stop-color="#fbfa0c"/><stop offset="0.834" stop-color="#ffed0a"/><stop offset="0.915" stop-color="#ffc103"/><stop offset="1.000" stop-color="#ff9d00"/></linearGradient>
<linearGradient id="t41" gradientUnits="userSpaceOnUse" x1="1327" x2="1579" y1="0" y2="0"><stop offset="0.000" stop-color="#00ff3a"/><stop offset="0.127" stop-color="#10ff30"/><stop offset="0.214" stop-color="#22ff2f"/><stop offset="0.310" stop-color="#37ff36"/><stop offset="0.381" stop-color="#40ff31"/><stop offset="0.460" stop-color="#55ff2b"/><stop offset="0.532" stop-color="#6fff25"/><stop offset="0.611" stop-color="#94ff1f"/><stop offset="0.683" stop-color="#bdff18"/><stop offset="0.762" stop-color="#f1fe11"/><stop offset="0.778" stop-color="#f9fb10"/><stop offset="0.802" stop-color="#fef00d"/><stop offset="0.897" stop-color="#ffba04"/><stop offset="1.000" stop-color="#ff9000"/></linearGradient>
<linearGradient id="t42" gradientUnits="userSpaceOnUse" x1="1326" x2="1585" y1="0" y2="0"><stop offset="0.000" stop-color="#00ff3e"/><stop offset="0.046" stop-color="#04ff39"/><stop offset="0.124" stop-color="#10ff33"/><stop offset="0.216" stop-color="#24ff31"/><stop offset="0.309" stop-color="#3aff39"/><stop offset="0.378" stop-color="#43ff34"/><stop offset="0.448" stop-color="#56ff2e"/><stop offset="0.517" stop-color="#71ff29"/><stop offset="0.587" stop-color="#93ff23"/><stop offset="0.656" stop-color="#bbff1c"/><stop offset="0.734" stop-color="#f0fe15"/><stop offset="0.757" stop-color="#fcf813"/><stop offset="0.780" stop-color="#ffeb10"/><stop offset="0.826" stop-color="#ffcd0a"/><stop offset="0.880" stop-color="#ffb106"/><stop offset="1.000" stop-color="#ff8300"/></linearGradient>
<linearGradient id="t43" gradientUnits="userSpaceOnUse" x1="1326" x2="1590" y1="0" y2="0"><stop offset="0.000" stop-color="#00ff41"/><stop offset="0.053" stop-color="#05ff3b"/><stop offset="0.129" stop-color="#12ff36"/><stop offset="0.220" stop-color="#27ff34"/><stop offset="0.311" stop-color="#3dff3c"/><stop offset="0.371" stop-color="#46ff37"/><stop offset="0.439" stop-color="#59ff32"/><stop offset="0.508" stop-color="#74ff2c"/><stop offset="0.576" stop-color="#97ff26"/><stop offset="0.636" stop-color="#bdff20"/><stop offset="0.712" stop-color="#f2fe19"/><stop offset="0.727" stop-color="#fafa17"/><stop offset="0.750" stop-color="#ffed14"/><stop offset="0.803" stop-color="#ffca0d"/><stop offset="0.864" stop-color="#ffab07"/><stop offset="0.924" stop-color="#ff9203"/><stop offset="1.000" stop-color="#ff7800"/></linearGradient>
<linearGradient id="t44" gradientUnits="userSpaceOnUse" x1="1325" x2="1596" y1="0" y2="0"><stop offset="0.000" stop-color="#00ff45"/><stop offset="0.052" stop-color="#05ff3f"/><stop offset="0.125" stop-color="#12ff39"/><stop offset="0.221" stop-color="#2aff37"/><stop offset="0.310" stop-color="#40ff3f"/><stop offset="0.369" stop-color="#49ff3b"/><stop offset="0.428" stop-color="#5bff36"/><stop offset="0.487" stop-color="#73ff30"/><stop offset="0.554" stop-color="#96ff2a"/><stop offset="0.613" stop-color="#bbff25"/><stop offset="0.686" stop-color="#f2fe1d"/><stop offset="0.701" stop-color="#fafa1b"/><stop offset="0.723" stop-color="#ffed18"/><stop offset="0.782" stop-color="#ffc510"/><stop offset="0.849" stop-color="#ffa308"/><stop offset="0.915" stop-color="#ff8803"/><stop offset="1.000" stop-color="#ff6d00"/></linearGradient>
<linearGradient id="t45" gradientUnits="userSpaceOnUse" x1="1325" x2="1601" y1="0" y2="0"><stop offset="0.000" stop-color="#00ff48"/><stop offset="0.051" stop-color="#05ff43"/><stop offset="0.123" stop-color="#13ff3c"/><stop offset="0.217" stop-color="#2bff3a"/><stop offset="0.304" stop-color="#43ff42"/><stop offset="0.355" stop-color="#4bff3f"/><stop offset="0.413" stop-color="#5bff3a"/><stop offset="0.471" stop-color="#73ff35"/><stop offset="0.536" stop-color="#96ff2f"/><stop offset="0.594" stop-color="#bdff29"/><stop offset="0.659" stop-color="#effe22"/><stop offset="0.681" stop-color="#fbf81f"/><stop offset="0.696" stop-color="#feef1d"/><stop offset="0.761" stop-color="#ffc213"/><stop offset="0.833" stop-color="#ff9c0a"/><stop offset="0.906" stop-color="#ff8004"/><stop offset="1.000" stop-color="#fe6400"/></linearGradient>
<linearGradient id="t46" gradientUnits="userSpaceOnUse" x1="1324" x2="1607" y1="0" y2="0"><stop offset="0.000" stop-color="#00ff4c"/><stop offset="0.049" stop-color="#05ff47"/><stop offset="0.127" stop-color="#14ff40"/><stop offset="0.219" stop-color="#2dff3e"/><stop offset="0.311" stop-color="#47ff46"/><stop offset="0.360" stop-color="#50ff42"/><stop offset="0.410" stop-color="#60ff3e"/><stop offset="0.466" stop-color="#79ff38"/><stop offset="0.523" stop-color="#99ff33"/><stop offset="0.572" stop-color="#bcff2e"/><stop offset="0.643" stop-color="#f4fd26"/><stop offset="0.657" stop-color="#fbf824"/><stop offset="0.678" stop-color="#ffea20"/><stop offset="0.742" stop-color="#ffbd15"/><stop offset="0.813" stop-color="#ff980c"/><stop offset="0.890" stop-color="#ff7905"/><stop offset="1.000" stop-color="#fc5900"/></linearGradient>
<linearGradient id="t47" gradientUnits="userSpaceOnUse" x1="1324" x2="1612" y1="0" y2="0"><stop offset="0.000" stop-color="#00ff50"/><stop offset="0.049" stop-color="#05ff4b"/><stop offset="0.125" stop-color="#15ff43"/><stop offset="0.222" stop-color="#31ff41"/><stop offset="0.306" stop-color="#4bff4a"/><stop offset="0.354" stop-color="#53ff46"/><stop offset="0.403" stop-color="#63ff42"/><stop offset="0.451" stop-color="#79ff3d"/><stop offset="0.507" stop-color="#9aff37"/><stop offset="0.556" stop-color="#bdff32"/><stop offset="0.618" stop-color="#f1fe2b"/><stop offset="0.632" stop-color="#f9fa29"/><stop offset="0.653" stop-color="#feec25"/><stop offset="0.722" stop-color="#ffba18"/><stop offset="0.799" stop-color="#ff910e"/><stop offset="0.882" stop-color="#ff7206"/><stop offset="1.000" stop-color="#fa5100"/></linearGradient>
<linearGradient id="t48" gradientUnits="userSpaceOnUse" x1="1324" x2="1617" y1="0" y2="0"><stop offset="0.000" stop-color="#00ff54"/><stop offset="0.048" stop-color="#05ff4f"/><stop offset="0.123" stop-color="#16ff47"/><stop offset="0.218" stop-color="#32ff45"/><stop offset="0.307" stop-color="#4fff4d"/><stop offset="0.348" stop-color="#56ff4a"/><stop offset="0.389" stop-color="#64ff47"/><stop offset="0.437" stop-color="#7aff42"/><stop offset="0.491" stop-color="#9bff3c"/><stop offset="0.539" stop-color="#beff37"/><stop offset="0.601" stop-color="#f3fd30"/><stop offset="0.614" stop-color="#fbf82e"/><stop offset="0.635" stop-color="#ffe929"/><stop offset="0.703" stop-color="#ffb71c"/><stop offset="0.778" stop-color="#ff8e10"/><stop offset="0.874" stop-color="#ff6a06"/><stop offset="0.942" stop-color="#fe5702"/><stop offset="1.000" stop-color="#f74900"/></linearGradient>
<linearGradient id="t49" gradientUnits="userSpaceOnUse" x1="1323" x2="1623" y1="0" y2="0"><stop offset="0.000" stop-color="#00ff59"/><stop offset="0.047" stop-color="#05ff53"/><stop offset="0.127" stop-color="#18ff4b"/><stop offset="0.227" stop-color="#37ff49"/><stop offset="0.307" stop-color="#53ff52"/><stop offset="0.347" stop-color="#5bff4f"/><stop offset="0.387" stop-color="#69ff4b"/><stop offset="0.433" stop-color="#80ff46"/><stop offset="0.480" stop-color="#9eff41"/><stop offset="0.520" stop-color="#bdff3d"/><stop offset="0.580" stop-color="#f2fd36"/><stop offset="0.593" stop-color="#faf833"/><stop offset="0.613" stop-color="#ffe92e"/><stop offset="0.687" stop-color="#ffb11f"/><stop offset="0.767" stop-color="#ff8712"/><stop offset="0.840" stop-color="#ff6b09"/><stop offset="0.920" stop-color="#fe5403"/><stop offset="1.000" stop-color="#f44000"/></linearGradient>
<linearGradient id="t50" gradientUnits="userSpaceOnUse" x1="1323" x2="1628" y1="0" y2="0"><stop offset="0.000" stop-color="#00ff5e"/><stop offset="0.052" stop-color="#07ff57"/><stop offset="0.131" stop-color="#1aff4f"/><stop offset="0.223" stop-color="#39ff4c"/><stop offset="0.308" stop-color="#58ff56"/><stop offset="0.341" stop-color="#5fff53"/><stop offset="0.380" stop-color="#6dff4f"/><stop offset="0.420" stop-color="#81ff4b"/><stop offset="0.466" stop-color="#9fff47"/><stop offset="0.505" stop-color="#bfff42"/><stop offset="0.551" stop-color="#e9ff3d"/><stop offset="0.570" stop-color="#f9fa3a"/><stop offset="0.584" stop-color="#fdf136"/><stop offset="0.662" stop-color="#ffb323"/><stop offset="0.708" stop-color="#ff971b"/><stop offset="0.754" stop-color="#ff8114"/><stop offset="0.826" stop-color="#ff660b"/><stop offset="0.911" stop-color="#fe4e04"/><stop offset="1.000" stop-color="#f03900"/></linearGradient>
<linearGradient id="t51" gradientUnits="userSpaceOnUse" x1="1322" x2="1634" y1="0" y2="0"><stop offset="0.000" stop-color="#00ff63"/><stop offset="0.051" stop-color="#07ff5c"/><stop offset="0.128" stop-color="#1aff54"/><stop offset="0.224" stop-color="#3cff51"/><stop offset="0.308" stop-color="#5cff5a"/><stop offset="0.340" stop-color="#63ff58"/><stop offset="0.372" stop-color="#70ff55"/><stop offset="0.410" stop-color="#84ff51"/><stop offset="0.449" stop-color="#9eff4d"/><stop offset="0.487" stop-color="#beff48"/><stop offset="0.532" stop-color="#e9ff43"/><stop offset="0.551" stop-color="#f8fa40"/><stop offset="0.564" stop-color="#fdf13c"/><stop offset="0.609" stop-color="#ffc930"/><stop offset="0.647" stop-color="#ffad27"/><stop offset="0.692" stop-color="#ff921e"/><stop offset="0.737" stop-color="#ff7d16"/><stop offset="0.808" stop-color="#ff620d"/><stop offset="0.897" stop-color="#fe4905"/><stop offset="1.000" stop-color="#eb3200"/></linearGradient>
<linearGradient id="t52" gradientUnits="userSpaceOnUse" x1="1322" x2="1639" y1="0" y2="0"><stop offset="0.000" stop-color="#00ff68"/><stop offset="0.050" stop-color="#07ff61"/><stop offset="0.132" stop-color="#1dff58"/><stop offset="0.227" stop-color="#40ff55"/><stop offset="0.309" stop-color="#62ff5f"/><stop offset="0.366" stop-color="#74ff5a"/><stop offset="0.404" stop-color="#89ff56"/><stop offset="0.442" stop-color="#a4ff52"/><stop offset="0.517" stop-color="#ebfe49"/><stop offset="0.536" stop-color="#faf845"/><stop offset="0.549" stop-color="#feee42"/><stop offset="0.593" stop-color="#ffc634"/><stop offset="0.631" stop-color="#ffaa2a"/><stop offset="0.675" stop-color="#ff8f21"/><stop offset="0.726" stop-color="#ff7718"/><stop offset="0.801" stop-color="#ff5b0e"/><stop offset="0.890" stop-color="#fd4405"/><stop offset="0.940" stop-color="#f63802"/><stop offset="1.000" stop-color="#e72c00"/></linearGradient>
<linearGradient id="t53" gradientUnits="userSpaceOnUse" x1="1321" x2="1645" y1="0" y2="0"><stop offset="0.000" stop-color="#00ff6d"/><stop offset="0.049" stop-color="#07ff67"/><stop offset="0.130" stop-color="#1dff5e"/><stop offset="0.228" stop-color="#44ff5a"/><stop offset="0.309" stop-color="#67ff64"/><stop offset="0.358" stop-color="#77ff60"/><stop offset="0.389" stop-color="#88ff5d"/><stop offset="0.426" stop-color="#a3ff59"/><stop offset="0.463" stop-color="#c4ff54"/><stop offset="0.500" stop-color="#ebfe50"/><stop offset="0.519" stop-color="#faf84c"/><stop offset="0.531" stop-color="#feee48"/><stop offset="0.574" stop-color="#ffc53a"/><stop offset="0.611" stop-color="#ffa92f"/><stop offset="0.660" stop-color="#ff8b24"/><stop offset="0.710" stop-color="#ff731b"/><stop offset="0.784" stop-color="#ff5810"/><stop offset="0.877" stop-color="#fd3f06"/><stop offset="0.932" stop-color="#f43302"/><stop offset="1.000" stop-color="#e12600"/></linearGradient>
<linearGradient id="t54" gradientUnits="userSpaceOnUse" x1="1321" x2="1650" y1="0" y2="0"><stop offset="0.000" stop-color="#00ff73"/><stop offset="0.055" stop-color="#09ff6b"/><stop offset="0.134" stop-color="#21ff63"/><stop offset="0.219" stop-color="#43ff5f"/><stop offset="0.304" stop-color="#6bff6a"/><stop offset="0.353" stop-color="#7cff66"/><stop offset="0.383" stop-color="#8eff62"/><stop offset="0.413" stop-color="#a4ff5f"/><stop offset="0.444" stop-color="#c0ff5c"/><stop offset="0.480" stop-color="#e7ff57"/><stop offset="0.498" stop-color="#f8fa54"/><stop offset="0.511" stop-color="#fdf150"/><stop offset="0.553" stop-color="#ffc740"/><stop offset="0.596" stop-color="#ffa634"/><stop offset="0.644" stop-color="#ff8827"/><stop offset="0.693" stop-color="#ff701e"/><stop offset="0.772" stop-color="#ff5411"/><stop offset="0.869" stop-color="#fc3a07"/><stop offset="0.930" stop-color="#f12d02"/><stop offset="1.000" stop-color="#dc2100"/></linearGradient>
<linearGradient id="t55" gradientUnits="userSpaceOnUse" x1="1320" x2="1656" y1="0" y2="0"><stop offset="0.000" stop-color="#00ff79"/><stop offset="0.054" stop-color="#09ff72"/><stop offset="0.131" stop-color="#21ff69"/><stop offset="0.220" stop-color="#47ff64"/><stop offset="0.256" stop-color="#59ff66"/><stop offset="0.304" stop-color="#70ff6f"/><stop offset="0.345" stop-color="#7fff6c"/><stop offset="0.375" stop-color="#91ff69"/><stop offset="0.405" stop-color="#a9ff66"/><stop offset="0.464" stop-color="#e6ff5e"/><stop offset="0.482" stop-color="#f7fa5b"/><stop offset="0.494" stop-color="#fdf157"/><stop offset="0.536" stop-color="#ffc747"/><stop offset="0.577" stop-color="#ffa539"/><stop offset="0.625" stop-color="#ff862c"/><stop offset="0.685" stop-color="#ff6a1f"/><stop offset="0.762" stop-color="#ff4e13"/><stop offset="0.857" stop-color="#fc3608"/><stop offset="0.923" stop-color="#ee2903"/><stop offset="1.000" stop-color="#d61c00"/></linearGradient>
<linearGradient id="t56" gradientUnits="userSpaceOnUse" x1="1320" x2="1661" y1="0" y2="0"><stop offset="0.000" stop-color="#00ff7f"/><stop offset="0.053" stop-color="#09ff78"/><stop offset="0.135" stop-color="#24ff6f"/><stop offset="0.223" stop-color="#4cff6a"/><stop offset="0.258" stop-color="#5fff6c"/><stop offset="0.305" stop-color="#77ff75"/><stop offset="0.340" stop-color="#84ff73"/><stop offset="0.393" stop-color="#aaff6d"/><stop offset="0.452" stop-color="#e9fe66"/><stop offset="0.469" stop-color="#f9f862"/><stop offset="0.481" stop-color="#feee5d"/><stop offset="0.522" stop-color="#ffc34c"/><stop offset="0.569" stop-color="#ff9d3b"/><stop offset="0.616" stop-color="#ff802e"/><stop offset="0.674" stop-color="#ff6521"/><stop offset="0.751" stop-color="#ff4a14"/><stop offset="0.850" stop-color="#fb3209"/><stop offset="0.915" stop-color="#ed2503"/><stop offset="1.000" stop-color="#d11800"/></linearGradient>
<linearGradient id="t57" gradientUnits="userSpaceOnUse" x1="1319" x2="1667" y1="0" y2="0"><stop offset="0.000" stop-color="#00ff86"/><stop offset="0.057" stop-color="#0aff7e"/><stop offset="0.138" stop-color="#27ff75"/><stop offset="0.230" stop-color="#53ff70"/><stop offset="0.305" stop-color="#7dff7c"/><stop offset="0.339" stop-color="#8cff79"/><stop offset="0.385" stop-color="#afff74"/><stop offset="0.437" stop-color="#e8fe6e"/><stop offset="0.454" stop-color="#f9f86a"/><stop offset="0.466" stop-color="#feee65"/><stop offset="0.506" stop-color="#ffc252"/><stop offset="0.552" stop-color="#ff9c41"/><stop offset="0.603" stop-color="#ff7c31"/><stop offset="0.661" stop-color="#ff6124"/><stop offset="0.741" stop-color="#ff4616"/><stop offset="0.839" stop-color="#fa2e0a"/><stop offset="0.908" stop-color="#ea2104"/><stop offset="1.000" stop-color="#ca1400"/></linearGradient>
<linearGradient id="t58" gradientUnits="userSpaceOnUse" x1="1319" x2="1672" y1="0" y2="0"><stop offset="0.000" stop-color="#00ff8d"/><stop offset="0.057" stop-color="#0bff85"/><stop offset="0.136" stop-color="#28ff7c"/><stop offset="0.232" stop-color="#59ff77"/><stop offset="0.300" stop-color="#83ff82"/><stop offset="0.334" stop-color="#91ff80"/><stop offset="0.380" stop-color="#b6ff7b"/><stop offset="0.425" stop-color="#ebfe76"/><stop offset="0.442" stop-color="#faf671"/><stop offset="0.453" stop-color="#feea6c"/><stop offset="0.493" stop-color="#ffbf58"/><stop offset="0.538" stop-color="#ff9946"/><stop offset="0.589" stop-color="#ff7935"/><stop offset="0.652" stop-color="#ff5c26"/><stop offset="0.731" stop-color="#ff4217"/><stop offset="0.793" stop-color="#fe330f"/><stop offset="0.833" stop-color="#fa2a0a"/><stop offset="0.901" stop-color="#e91e04"/><stop offset="1.000" stop-color="#c51100"/></linearGradient>
<linearGradient id="t59" gradientUnits="userSpaceOnUse" x1="1319" x2="1678" y1="0" y2="0"><stop offset="0.000" stop-color="#00ff94"/><stop offset="0.039" stop-color="#07ff8e"/><stop offset="0.095" stop-color="#19ff87"/><stop offset="0.150" stop-color="#31ff82"/><stop offset="0.206" stop-color="#4fff7e"/><stop offset="0.256" stop-color="#6eff80"/><stop offset="0.301" stop-color="#8bff89"/><stop offset="0.340" stop-color="#9fff87"/><stop offset="0.373" stop-color="#beff83"/><stop offset="0.407" stop-color="#e7fe7f"/><stop offset="0.423" stop-color="#f8f87b"/><stop offset="0.435" stop-color="#fded76"/><stop offset="0.479" stop-color="#ffbb5e"/><stop offset="0.524" stop-color="#ff964b"/><stop offset="0.574" stop-color="#ff773a"/><stop offset="0.635" stop-color="#ff5a29"/><stop offset="0.713" stop-color="#ff401a"/><stop offset="0.774" stop-color="#ff3111"/><stop offset="0.819" stop-color="#fa280c"/><stop offset="0.891" stop-color="#e71b05"/><stop offset="1.000" stop-color="#be0e00"/></linearGradient>
<linearGradient id="t60" gradientUnits="userSpaceOnUse" x1="1318" x2="1683" y1="0" y2="0"><stop offset="0.000" stop-color="#00ff9b"/><stop offset="0.033" stop-color="#05ff97"/><stop offset="0.088" stop-color="#17ff90"/><stop offset="0.142" stop-color="#2fff8a"/><stop offset="0.197" stop-color="#4dff86"/><stop offset="0.252" stop-color="#70ff86"/><stop offset="0.307" stop-color="#95ff91"/><stop offset="0.334" stop-color="#a4ff8f"/><stop offset="0.362" stop-color="#bdff8c"/><stop offset="0.395" stop-color="#e6fe88"/><stop offset="0.411" stop-color="#f8f884"/><stop offset="0.427" stop-color="#fee77b"/><stop offset="0.471" stop-color="#ffb563"/><stop offset="0.515" stop-color="#ff914f"/><stop offset="0.570" stop-color="#ff703b"/><stop offset="0.630" stop-color="#ff552b"/><stop offset="0.707" stop-color="#ff3c1b"/><stop offset="0.767" stop-color="#fe2e12"/><stop offset="0.811" stop-color="#f9250d"/><stop offset="0.888" stop-color="#e41705"/><stop offset="1.000" stop-color="#b90b00"/></linearGradient>
<linearGradient id="t61" gradientUnits="userSpaceOnUse" x1="1318" x2="1689" y1="0" y2="0"><stop offset="0.000" stop-color="#00ffa3"/><stop offset="0.032" stop-color="#05ff9f"/><stop offset="0.086" stop-color="#18ff99"/><stop offset="0.140" stop-color="#31ff93"/><stop offset="0.194" stop-color="#4fff8f"/><stop offset="0.248" stop-color="#74ff8e"/><stop offset="0.302" stop-color="#9bff99"/><stop offset="0.329" stop-color="#abff98"/><stop offset="0.350" stop-color="#c0ff96"/><stop offset="0.377" stop-color="#e2ff93"/><stop offset="0.394" stop-color="#f5fa8f"/><stop offset="0.410" stop-color="#feea86"/><stop offset="0.453" stop-color="#ffb76c"/><stop offset="0.496" stop-color="#ff9256"/><stop offset="0.550" stop-color="#ff7041"/><stop offset="0.615" stop-color="#ff532e"/><stop offset="0.679" stop-color="#ff3e20"/><stop offset="0.749" stop-color="#ff2c14"/><stop offset="0.803" stop-color="#f8210d"/><stop offset="0.879" stop-color="#e21505"/><stop offset="1.000" stop-color="#b20900"/></linearGradient>
<linearGradient id="t62" gradientUnits="userSpaceOnUse" x1="1317" x2="1694" y1="0" y2="0"><stop offset="0.000" stop-color="#00ffac"/><stop offset="0.032" stop-color="#05ffa8"/><stop offset="0.085" stop-color="#18ffa2"/><stop offset="0.138" stop-color="#31ff9c"/><stop offset="0.186" stop-color="#4dff98"/><stop offset="0.249" stop-color="#7aff97"/><stop offset="0.302" stop-color="#a4ffa2"/><stop offset="0.324" stop-color="#b1ffa1"/><stop offset="0.345" stop-color="#c6ff9f"/><stop offset="0.366" stop-color="#e1ff9d"/><stop offset="0.382" stop-color="#f5fa99"/><stop offset="0.398" stop-color="#feea90"/><stop offset="0.440" stop-color="#ffb774"/><stop offset="0.483" stop-color="#ff915d"/><stop offset="0.541" stop-color="#ff6d45"/><stop offset="0.605" stop-color="#ff5031"/><stop offset="0.684" stop-color="#ff371f"/><stop offset="0.748" stop-color="#fe2815"/><stop offset="0.790" stop-color="#f8200f"/><stop offset="0.865" stop-color="#e31407"/><stop offset="1.000" stop-color="#ad0700"/></linearGradient>
<linearGradient id="t63" gradientUnits="userSpaceOnUse" x1="1317" x2="1700" y1="0" y2="0"><stop offset="0.000" stop-color="#00ffb4"/><stop offset="0.031" stop-color="#06ffb1"/><stop offset="0.078" stop-color="#17ffac"/><stop offset="0.131" stop-color="#30ffa7"/><stop offset="0.178" stop-color="#4cffa2"/><stop offset="0.251" stop-color="#83ffa0"/><stop offset="0.292" stop-color="#a7ffa9"/><stop offset="0.319" stop-color="#b9ffab"/><stop offset="0.334" stop-color="#c9ffa9"/><stop offset="0.355" stop-color="#e4fea7"/><stop offset="0.371" stop-color="#f7f8a3"/><stop offset="0.386" stop-color="#fee699"/><stop offset="0.428" stop-color="#ffb37a"/><stop offset="0.475" stop-color="#ff8b60"/><stop offset="0.533" stop-color="#ff6848"/><stop offset="0.595" stop-color="#ff4d34"/><stop offset="0.658" stop-color="#ff3924"/><stop offset="0.731" stop-color="#ff2717"/><stop offset="0.783" stop-color="#f71d10"/><stop offset="0.856" stop-color="#e11207"/><stop offset="1.000" stop-color="#a70500"/></linearGradient>
<linearGradient id="t64" gradientUnits="userSpaceOnUse" x1="1316" x2="1705" y1="0" y2="0"><stop offset="0.000" stop-color="#00ffbe"/><stop offset="0.031" stop-color="#05ffbb"/><stop offset="0.077" stop-color="#17ffb6"/><stop offset="0.129" stop-color="#31ffb1"/><stop offset="0.175" stop-color="#4effad"/><stop offset="0.252" stop-color="#8affab"/><stop offset="0.319" stop-color="#c4ffb5"/><stop offset="0.344" stop-color="#e4feb2"/><stop offset="0.360" stop-color="#f7f8ae"/><stop offset="0.375" stop-color="#fee6a3"/><stop offset="0.416" stop-color="#ffb383"/><stop offset="0.463" stop-color="#ff8b67"/><stop offset="0.519" stop-color="#ff684d"/><stop offset="0.586" stop-color="#ff4b37"/><stop offset="0.648" stop-color="#ff3727"/><stop offset="0.720" stop-color="#ff2619"/><stop offset="0.776" stop-color="#f71b11"/><stop offset="0.843" stop-color="#e21108"/><stop offset="1.000" stop-color="#a20400"/></linearGradient>
<linearGradient id="t65" gradientUnits="userSpaceOnUse" x1="1316" x2="1711" y1="0" y2="0"><stop offset="0.000" stop-color="#00ffc8"/><stop offset="0.030" stop-color="#06ffc5"/><stop offset="0.076" stop-color="#18ffc1"/><stop offset="0.122" stop-color="#30ffbd"/><stop offset="0.167" stop-color="#4dffb9"/><stop offset="0.243" stop-color="#8affb6"/><stop offset="0.314" stop-color="#ceffc0"/><stop offset="0.334" stop-color="#e7febe"/><stop offset="0.349" stop-color="#f9f6b8"/><stop offset="0.365" stop-color="#fee3ac"/><stop offset="0.405" stop-color="#ffb08a"/><stop offset="0.456" stop-color="#ff856a"/><stop offset="0.511" stop-color="#ff6450"/><stop offset="0.582" stop-color="#ff4637"/><stop offset="0.709" stop-color="#ff251b"/><stop offset="0.765" stop-color="#f71a12"/><stop offset="0.815" stop-color="#e8120b"/><stop offset="0.881" stop-color="#cd0a05"/><stop offset="1.000" stop-color="#9d0300"/></linearGradient>
<linearGradient id="t66" gradientUnits="userSpaceOnUse" x1="1315" x2="1716" y1="0" y2="0"><stop offset="0.000" stop-color="#00ffd2"/><stop offset="0.030" stop-color="#06ffd0"/><stop offset="0.070" stop-color="#15ffcd"/><stop offset="0.115" stop-color="#2dffc9"/><stop offset="0.160" stop-color="#4affc6"/><stop offset="0.234" stop-color="#88ffc2"/><stop offset="0.269" stop-color="#acffc3"/><stop offset="0.304" stop-color="#d0ffcb"/><stop offset="0.324" stop-color="#e7feca"/><stop offset="0.339" stop-color="#f8f6c4"/><stop offset="0.354" stop-color="#fee3b8"/><stop offset="0.394" stop-color="#ffb194"/><stop offset="0.444" stop-color="#ff8672"/><stop offset="0.504" stop-color="#ff6254"/><stop offset="0.574" stop-color="#ff453a"/><stop offset="0.703" stop-color="#ff231c"/><stop offset="0.758" stop-color="#f61813"/><stop offset="0.808" stop-color="#e7110c"/><stop offset="0.873" stop-color="#cc0905"/><stop offset="1.000" stop-color="#990200"/></linearGradient>
<linearGradient id="t67" gradientUnits="userSpaceOnUse" x1="1315" x2="1722" y1="0" y2="0"><stop offset="0.000" stop-color="#00ffdd"/><stop offset="0.029" stop-color="#06ffdb"/><stop offset="0.069" stop-color="#17ffd9"/><stop offset="0.113" stop-color="#2fffd6"/><stop offset="0.157" stop-color="#4dffd4"/><stop offset="0.231" stop-color="#8effd0"/><stop offset="0.270" stop-color="#b8ffd1"/><stop offset="0.310" stop-color="#e5fed7"/><stop offset="0.324" stop-color="#f6f8d3"/><stop offset="0.339" stop-color="#fee7c7"/><stop offset="0.378" stop-color="#ffb4a0"/><stop offset="0.432" stop-color="#ff8578"/><stop offset="0.491" stop-color="#ff6259"/><stop offset="0.565" stop-color="#ff433d"/><stop offset="0.693" stop-color="#ff221e"/><stop offset="0.747" stop-color="#f61814"/><stop offset="0.801" stop-color="#e50f0d"/><stop offset="0.870" stop-color="#c80806"/><stop offset="0.948" stop-color="#a60201"/><stop offset="1.000" stop-color="#950100"/></linearGradient>
<linearGradient id="t68" gradientUnits="userSpaceOnUse" x1="1315" x2="1727" y1="0" y2="0"><stop offset="0.000" stop-color="#00ffe8"/><stop offset="0.029" stop-color="#07ffe7"/><stop offset="0.068" stop-color="#18ffe6"/><stop offset="0.112" stop-color="#31ffe4"/><stop offset="0.150" stop-color="#4dffe2"/><stop offset="0.223" stop-color="#8effe0"/><stop offset="0.267" stop-color="#bfffdf"/><stop offset="0.301" stop-color="#e9fee4"/><stop offset="0.316" stop-color="#f8f7df"/><stop offset="0.330" stop-color="#fee4d1"/><stop offset="0.369" stop-color="#ffb4a8"/><stop offset="0.422" stop-color="#ff867e"/><stop offset="0.485" stop-color="#ff605b"/><stop offset="0.558" stop-color="#ff423f"/><stop offset="0.684" stop-color="#ff221f"/><stop offset="0.738" stop-color="#f61716"/><stop offset="0.791" stop-color="#e50f0e"/><stop offset="0.864" stop-color="#c60706"/><stop offset="0.942" stop-color="#a40201"/><stop offset="1.000" stop-color="#920000"/></linearGradient>
<linearGradient id="t69" gradientUnits="userSpaceOnUse" x1="1314" x2="1733" y1="0" y2="0"><stop offset="0.000" stop-color="#00fef4"/><stop offset="0.029" stop-color="#06fef3"/><stop offset="0.067" stop-color="#17fef2"/><stop offset="0.110" stop-color="#31fef1"/><stop offset="0.148" stop-color="#4dfdf1"/><stop offset="0.220" stop-color="#90fdef"/><stop offset="0.253" stop-color="#b7fdef"/><stop offset="0.291" stop-color="#e9fdf1"/><stop offset="0.305" stop-color="#f9f7ed"/><stop offset="0.320" stop-color="#fee6de"/><stop offset="0.363" stop-color="#ffb2ae"/><stop offset="0.415" stop-color="#ff8583"/><stop offset="0.477" stop-color="#ff605f"/><stop offset="0.554" stop-color="#ff4140"/><stop offset="0.673" stop-color="#ff2221"/><stop offset="0.726" stop-color="#f71817"/><stop offset="0.778" stop-color="#e60f0f"/><stop offset="0.854" stop-color="#c50706"/><stop offset="0.940" stop-color="#a00101"/><stop offset="1.000" stop-color="#8e0000"/></linearGradient>
<linearGradient id="t70" gradientUnits="userSpaceOnUse" x1="1314" x2="1733" y1="0" y2="0"><stop offset="0.000" stop-color="#00f9fc"/><stop offset="0.029" stop-color="#07f9fb"/><stop offset="0.067" stop-color="#18f8fb"/><stop offset="0.110" stop-color="#32f8fb"/><stop offset="0.148" stop-color="#4ff7fb"/><stop offset="0.186" stop-color="#71f6fb"/><stop offset="0.220" stop-color="#93f6fa"/><stop offset="0.253" stop-color="#baf5fa"/><stop offset="0.291" stop-color="#edf6fa"/><stop offset="0.301" stop-color="#f8f3f7"/><stop offset="0.315" stop-color="#fee5e7"/><stop offset="0.339" stop-color="#ffc7c8"/><stop offset="0.363" stop-color="#ffadaf"/><stop offset="0.415" stop-color="#ff8283"/><stop offset="0.477" stop-color="#ff5e5f"/><stop offset="0.554" stop-color="#ff4040"/><stop offset="0.673" stop-color="#ff2121"/><stop offset="0.726" stop-color="#f71717"/><stop offset="0.778" stop-color="#e60f0f"/><stop offset="0.854" stop-color="#c50606"/><stop offset="0.940" stop-color="#a00101"/><stop offset="1.000" stop-color="#8e0000"/></linearGradient>
<linearGradient id="t71" gradientUnits="userSpaceOnUse" x1="1313" x2="1725" y1="0" y2="0"><stop offset="0.000" stop-color="#00f0ff"/><stop offset="0.029" stop-color="#06efff"/><stop offset="0.068" stop-color="#17edff"/><stop offset="0.112" stop-color="#31ecfe"/><stop offset="0.150" stop-color="#4deafe"/><stop offset="0.223" stop-color="#90e8fe"/><stop offset="0.257" stop-color="#b7e7fe"/><stop offset="0.296" stop-color="#e8eafe"/><stop offset="0.311" stop-color="#f8e7f9"/><stop offset="0.325" stop-color="#ffd8e7"/><stop offset="0.345" stop-color="#ffc2cc"/><stop offset="0.369" stop-color="#ffa9b1"/><stop offset="0.422" stop-color="#ff7f84"/><stop offset="0.485" stop-color="#ff5b5f"/><stop offset="0.558" stop-color="#ff3f41"/><stop offset="0.689" stop-color="#ff1e20"/><stop offset="0.743" stop-color="#f61516"/><stop offset="0.796" stop-color="#e50d0e"/><stop offset="0.869" stop-color="#c60506"/><stop offset="0.947" stop-color="#a40102"/><stop offset="1.000" stop-color="#930000"/></linearGradient>
<linearGradient id="t72" gradientUnits="userSpaceOnUse" x1="1313" x2="1716" y1="0" y2="0"><stop offset="0.000" stop-color="#00e4ff"/><stop offset="0.030" stop-color="#06e2ff"/><stop offset="0.069" stop-color="#18e0ff"/><stop offset="0.114" stop-color="#31ddff"/><stop offset="0.154" stop-color="#4ddbff"/><stop offset="0.228" stop-color="#8ed7ff"/><stop offset="0.268" stop-color="#bad7ff"/><stop offset="0.308" stop-color="#e9ddfe"/><stop offset="0.318" stop-color="#f5dbfb"/><stop offset="0.333" stop-color="#fecfea"/><stop offset="0.372" stop-color="#ffa6b7"/><stop offset="0.427" stop-color="#ff7c87"/><stop offset="0.486" stop-color="#ff5b63"/><stop offset="0.561" stop-color="#ff3e44"/><stop offset="0.625" stop-color="#ff2c30"/><stop offset="0.700" stop-color="#ff1c20"/><stop offset="0.754" stop-color="#f71316"/><stop offset="0.809" stop-color="#e70c0e"/><stop offset="0.873" stop-color="#cc0507"/><stop offset="1.000" stop-color="#990001"/></linearGradient>
<linearGradient id="t73" gradientUnits="userSpaceOnUse" x1="1312" x2="1707" y1="0" y2="0"><stop offset="0.000" stop-color="#00d8ff"/><stop offset="0.030" stop-color="#06d6ff"/><stop offset="0.071" stop-color="#16d3ff"/><stop offset="0.116" stop-color="#2fd0ff"/><stop offset="0.162" stop-color="#4eccff"/><stop offset="0.233" stop-color="#8ac8ff"/><stop offset="0.268" stop-color="#aec9ff"/><stop offset="0.319" stop-color="#e6d0ff"/><stop offset="0.334" stop-color="#f9cbf7"/><stop offset="0.344" stop-color="#fec2eb"/><stop offset="0.385" stop-color="#ff9cb6"/><stop offset="0.435" stop-color="#ff7789"/><stop offset="0.496" stop-color="#ff5764"/><stop offset="0.567" stop-color="#ff3c46"/><stop offset="0.638" stop-color="#ff2930"/><stop offset="0.719" stop-color="#ff191f"/><stop offset="0.770" stop-color="#f81116"/><stop offset="0.841" stop-color="#e2080c"/><stop offset="1.000" stop-color="#a10002"/></linearGradient>
<linearGradient id="t74" gradientUnits="userSpaceOnUse" x1="1312" x2="1698" y1="0" y2="0"><stop offset="0.000" stop-color="#00cdff"/><stop offset="0.031" stop-color="#06caff"/><stop offset="0.073" stop-color="#17c7ff"/><stop offset="0.119" stop-color="#2fc3ff"/><stop offset="0.166" stop-color="#4dbfff"/><stop offset="0.244" stop-color="#8dbbff"/><stop offset="0.311" stop-color="#cec4ff"/><stop offset="0.332" stop-color="#e8c2fe"/><stop offset="0.342" stop-color="#f6bffa"/><stop offset="0.358" stop-color="#feb4e8"/><stop offset="0.378" stop-color="#ffa1cb"/><stop offset="0.399" stop-color="#ff90b3"/><stop offset="0.446" stop-color="#ff718a"/><stop offset="0.503" stop-color="#ff5467"/><stop offset="0.575" stop-color="#ff3a48"/><stop offset="0.668" stop-color="#ff222d"/><stop offset="0.741" stop-color="#fe161e"/><stop offset="0.782" stop-color="#f91017"/><stop offset="0.860" stop-color="#e2070c"/><stop offset="1.000" stop-color="#a90003"/></linearGradient>
<linearGradient id="t75" gradientUnits="userSpaceOnUse" x1="1311" x2="1690" y1="0" y2="0"><stop offset="0.000" stop-color="#00c2ff"/><stop offset="0.032" stop-color="#06bfff"/><stop offset="0.079" stop-color="#18baff"/><stop offset="0.127" stop-color="#30b6ff"/><stop offset="0.174" stop-color="#4eb2ff"/><stop offset="0.253" stop-color="#8daeff"/><stop offset="0.317" stop-color="#c6b8ff"/><stop offset="0.343" stop-color="#e7b6fe"/><stop offset="0.359" stop-color="#fab0f7"/><stop offset="0.369" stop-color="#fea8ea"/><stop offset="0.412" stop-color="#ff86b4"/><stop offset="0.459" stop-color="#ff698a"/><stop offset="0.517" stop-color="#ff4e67"/><stop offset="0.586" stop-color="#ff3649"/><stop offset="0.681" stop-color="#ff202e"/><stop offset="0.755" stop-color="#ff131f"/><stop offset="0.797" stop-color="#fa0e18"/><stop offset="0.871" stop-color="#e5060e"/><stop offset="1.000" stop-color="#b10004"/></linearGradient>
<linearGradient id="t76" gradientUnits="userSpaceOnUse" x1="1311" x2="1681" y1="0" y2="0"><stop offset="0.000" stop-color="#00b8ff"/><stop offset="0.032" stop-color="#06b5ff"/><stop offset="0.081" stop-color="#18afff"/><stop offset="0.130" stop-color="#30aaff"/><stop offset="0.178" stop-color="#4da6ff"/><stop offset="0.249" stop-color="#82a3ff"/><stop offset="0.319" stop-color="#bcadff"/><stop offset="0.335" stop-color="#ccacff"/><stop offset="0.357" stop-color="#eaa9fe"/><stop offset="0.373" stop-color="#fba3f5"/><stop offset="0.384" stop-color="#fe9be7"/><stop offset="0.422" stop-color="#ff7fb8"/><stop offset="0.470" stop-color="#ff638d"/><stop offset="0.530" stop-color="#ff4968"/><stop offset="0.595" stop-color="#ff344c"/><stop offset="0.692" stop-color="#ff1e2f"/><stop offset="0.768" stop-color="#ff1220"/><stop offset="0.811" stop-color="#fa0c19"/><stop offset="0.886" stop-color="#e7050f"/><stop offset="1.000" stop-color="#bb0006"/></linearGradient>
<linearGradient id="t77" gradientUnits="userSpaceOnUse" x1="1311" x2="1672" y1="0" y2="0"><stop offset="0.000" stop-color="#00aeff"/><stop offset="0.033" stop-color="#06aaff"/><stop offset="0.083" stop-color="#18a4ff"/><stop offset="0.139" stop-color="#339eff"/><stop offset="0.188" stop-color="#509aff"/><stop offset="0.249" stop-color="#7c99ff"/><stop offset="0.299" stop-color="#a3a2ff"/><stop offset="0.327" stop-color="#b6a2ff"/><stop offset="0.343" stop-color="#c8a0ff"/><stop offset="0.366" stop-color="#e59eff"/><stop offset="0.382" stop-color="#f999f8"/><stop offset="0.393" stop-color="#fe93ec"/><stop offset="0.432" stop-color="#ff78bc"/><stop offset="0.482" stop-color="#ff5d90"/><stop offset="0.537" stop-color="#ff466d"/><stop offset="0.604" stop-color="#ff3150"/><stop offset="0.704" stop-color="#ff1b32"/><stop offset="0.825" stop-color="#fb0b1b"/><stop offset="0.898" stop-color="#ea0411"/><stop offset="1.000" stop-color="#c50008"/></linearGradient>
<linearGradient id="t78" gradientUnits="userSpaceOnUse" x1="1310" x2="1663" y1="0" y2="0"><stop offset="0.000" stop-color="#00a5ff"/><stop offset="0.034" stop-color="#06a1ff"/><stop offset="0.085" stop-color="#179aff"/><stop offset="0.142" stop-color="#3194ff"/><stop offset="0.193" stop-color="#4e90ff"/><stop offset="0.249" stop-color="#748fff"/><stop offset="0.300" stop-color="#9a99ff"/><stop offset="0.334" stop-color="#af98ff"/><stop offset="0.357" stop-color="#c695ff"/><stop offset="0.385" stop-color="#eb92fe"/><stop offset="0.397" stop-color="#f88ff9"/><stop offset="0.408" stop-color="#fe89ee"/><stop offset="0.448" stop-color="#ff6fbd"/><stop offset="0.493" stop-color="#ff5895"/><stop offset="0.550" stop-color="#ff4271"/><stop offset="0.612" stop-color="#ff2f54"/><stop offset="0.714" stop-color="#ff1a35"/><stop offset="0.839" stop-color="#fc091d"/><stop offset="0.912" stop-color="#ed0313"/><stop offset="1.000" stop-color="#cf000a"/></linearGradient>
<linearGradient id="t79" gradientUnits="userSpaceOnUse" x1="1310" x2="1654" y1="0" y2="0"><stop offset="0.000" stop-color="#009cff"/><stop offset="0.035" stop-color="#0697ff"/><stop offset="0.093" stop-color="#1990ff"/><stop offset="0.151" stop-color="#348aff"/><stop offset="0.203" stop-color="#5186ff"/><stop offset="0.256" stop-color="#7387ff"/><stop offset="0.302" stop-color="#9290ff"/><stop offset="0.337" stop-color="#a68eff"/><stop offset="0.366" stop-color="#c28bff"/><stop offset="0.401" stop-color="#ee87fe"/><stop offset="0.413" stop-color="#f983f8"/><stop offset="0.424" stop-color="#fe7deb"/><stop offset="0.465" stop-color="#ff65bc"/><stop offset="0.512" stop-color="#ff5094"/><stop offset="0.564" stop-color="#ff3d74"/><stop offset="0.628" stop-color="#ff2b56"/><stop offset="0.733" stop-color="#ff1736"/><stop offset="0.855" stop-color="#fd081f"/><stop offset="0.919" stop-color="#f20316"/><stop offset="1.000" stop-color="#d8000d"/></linearGradient>
<linearGradient id="t80" gradientUnits="userSpaceOnUse" x1="1309" x2="1646" y1="0" y2="0"><stop offset="0.000" stop-color="#0094ff"/><stop offset="0.036" stop-color="#058fff"/><stop offset="0.095" stop-color="#1887ff"/><stop offset="0.154" stop-color="#3281ff"/><stop offset="0.208" stop-color="#4e7dff"/><stop offset="0.255" stop-color="#6c7eff"/><stop offset="0.303" stop-color="#8988ff"/><stop offset="0.344" stop-color="#a085ff"/><stop offset="0.380" stop-color="#c181ff"/><stop offset="0.415" stop-color="#ed7cfe"/><stop offset="0.427" stop-color="#f979f8"/><stop offset="0.439" stop-color="#fe73ed"/><stop offset="0.481" stop-color="#ff5dbe"/><stop offset="0.528" stop-color="#ff4996"/><stop offset="0.582" stop-color="#ff3775"/><stop offset="0.641" stop-color="#ff285a"/><stop offset="0.748" stop-color="#ff1439"/><stop offset="0.872" stop-color="#fd0621"/><stop offset="0.932" stop-color="#f40219"/><stop offset="1.000" stop-color="#e00011"/></linearGradient>
<linearGradient id="t81" gradientUnits="userSpaceOnUse" x1="1309" x2="1637" y1="0" y2="0"><stop offset="0.000" stop-color="#008bff"/><stop offset="0.055" stop-color="#0a84ff"/><stop offset="0.134" stop-color="#277aff"/><stop offset="0.226" stop-color="#5475ff"/><stop offset="0.305" stop-color="#8280ff"/><stop offset="0.335" stop-color="#907eff"/><stop offset="0.378" stop-color="#b179ff"/><stop offset="0.427" stop-color="#e973fe"/><stop offset="0.439" stop-color="#f670fb"/><stop offset="0.451" stop-color="#fd6cf1"/><stop offset="0.494" stop-color="#ff57c2"/><stop offset="0.537" stop-color="#ff469e"/><stop offset="0.591" stop-color="#ff347b"/><stop offset="0.652" stop-color="#ff255f"/><stop offset="0.756" stop-color="#ff133e"/><stop offset="0.884" stop-color="#fe0524"/><stop offset="0.939" stop-color="#f7021d"/><stop offset="1.000" stop-color="#e90015"/></linearGradient>
<linearGradient id="t82" gradientUnits="userSpaceOnUse" x1="1308" x2="1628" y1="0" y2="0"><stop offset="0.000" stop-color="#0084ff"/><stop offset="0.050" stop-color="#087dff"/><stop offset="0.131" stop-color="#2373ff"/><stop offset="0.225" stop-color="#4f6eff"/><stop offset="0.287" stop-color="#7275ff"/><stop offset="0.338" stop-color="#8776ff"/><stop offset="0.388" stop-color="#ab71ff"/><stop offset="0.444" stop-color="#e86aff"/><stop offset="0.456" stop-color="#f567fb"/><stop offset="0.469" stop-color="#fd63f2"/><stop offset="0.512" stop-color="#ff4fc4"/><stop offset="0.556" stop-color="#ff3fa0"/><stop offset="0.606" stop-color="#ff3080"/><stop offset="0.669" stop-color="#ff2263"/><stop offset="0.731" stop-color="#ff174d"/><stop offset="0.806" stop-color="#ff0d39"/><stop offset="0.919" stop-color="#fe0325"/><stop offset="1.000" stop-color="#f0001a"/></linearGradient>
<linearGradient id="t83" gradientUnits="userSpaceOnUse" x1="1308" x2="1619" y1="0" y2="0"><stop offset="0.000" stop-color="#007cff"/><stop offset="0.051" stop-color="#0875ff"/><stop offset="0.135" stop-color="#236bff"/><stop offset="0.225" stop-color="#4b67ff"/><stop offset="0.302" stop-color="#7271ff"/><stop offset="0.347" stop-color="#836eff"/><stop offset="0.373" stop-color="#936bff"/><stop offset="0.405" stop-color="#ad67ff"/><stop offset="0.463" stop-color="#eb60fe"/><stop offset="0.476" stop-color="#f75dfa"/><stop offset="0.489" stop-color="#fd59f1"/><stop offset="0.534" stop-color="#ff47c3"/><stop offset="0.572" stop-color="#ff3aa3"/><stop offset="0.624" stop-color="#ff2c83"/><stop offset="0.682" stop-color="#ff1f68"/><stop offset="0.746" stop-color="#ff1551"/><stop offset="0.817" stop-color="#ff0c3e"/><stop offset="0.932" stop-color="#fe0229"/><stop offset="1.000" stop-color="#f6001f"/></linearGradient>
<linearGradient id="t84" gradientUnits="userSpaceOnUse" x1="1307" x2="1610" y1="0" y2="0"><stop offset="0.000" stop-color="#0075ff"/><stop offset="0.053" stop-color="#086eff"/><stop offset="0.132" stop-color="#2065ff"/><stop offset="0.218" stop-color="#4260ff"/><stop offset="0.304" stop-color="#6b6aff"/><stop offset="0.350" stop-color="#7b67ff"/><stop offset="0.383" stop-color="#8e63ff"/><stop offset="0.416" stop-color="#a760ff"/><stop offset="0.482" stop-color="#ea57fe"/><stop offset="0.495" stop-color="#f755fb"/><stop offset="0.508" stop-color="#fd51f2"/><stop offset="0.554" stop-color="#ff40c4"/><stop offset="0.594" stop-color="#ff34a5"/><stop offset="0.647" stop-color="#ff2785"/><stop offset="0.700" stop-color="#ff1c6c"/><stop offset="0.759" stop-color="#ff1357"/><stop offset="0.832" stop-color="#ff0a43"/><stop offset="0.950" stop-color="#ff012c"/><stop offset="1.000" stop-color="#fb0025"/></linearGradient>
<linearGradient id="t85" gradientUnits="userSpaceOnUse" x1="1307" x2="1602" y1="0" y2="0"><stop offset="0.000" stop-color="#006eff"/><stop offset="0.054" stop-color="#0867ff"/><stop offset="0.129" stop-color="#1d5eff"/><stop offset="0.217" stop-color="#3f5aff"/><stop offset="0.305" stop-color="#6564ff"/><stop offset="0.359" stop-color="#785fff"/><stop offset="0.393" stop-color="#8b5cff"/><stop offset="0.427" stop-color="#a458ff"/><stop offset="0.461" stop-color="#c354ff"/><stop offset="0.502" stop-color="#ed4ffe"/><stop offset="0.515" stop-color="#f84cfa"/><stop offset="0.529" stop-color="#fe48f0"/><stop offset="0.569" stop-color="#ff3ac9"/><stop offset="0.610" stop-color="#ff2fa9"/><stop offset="0.658" stop-color="#ff248c"/><stop offset="0.712" stop-color="#ff1a72"/><stop offset="0.773" stop-color="#ff115c"/><stop offset="0.841" stop-color="#ff0948"/><stop offset="1.000" stop-color="#fe002b"/></linearGradient>
<linearGradient id="t86" gradientUnits="userSpaceOnUse" x1="1307" x2="1593" y1="0" y2="0"><stop offset="0.000" stop-color="#0067ff"/><stop offset="0.049" stop-color="#0761ff"/><stop offset="0.126" stop-color="#1b58ff"/><stop offset="0.224" stop-color="#3f54ff"/><stop offset="0.308" stop-color="#605eff"/><stop offset="0.364" stop-color="#7259ff"/><stop offset="0.399" stop-color="#8455ff"/><stop offset="0.434" stop-color="#9c51ff"/><stop offset="0.476" stop-color="#bf4cff"/><stop offset="0.517" stop-color="#e947ff"/><stop offset="0.531" stop-color="#f545fc"/><stop offset="0.545" stop-color="#fd41f4"/><stop offset="0.594" stop-color="#ff33c8"/><stop offset="0.629" stop-color="#ff2aae"/><stop offset="0.678" stop-color="#ff1f90"/><stop offset="0.727" stop-color="#ff1778"/><stop offset="0.846" stop-color="#ff0850"/><stop offset="1.000" stop-color="#ff0032"/></linearGradient>
<linearGradient id="t87" gradientUnits="userSpaceOnUse" x1="1306" x2="1584" y1="0" y2="0"><stop offset="0.000" stop-color="#0061ff"/><stop offset="0.050" stop-color="#065bff"/><stop offset="0.129" stop-color="#1a52ff"/><stop offset="0.223" stop-color="#3a4fff"/><stop offset="0.309" stop-color="#5a58ff"/><stop offset="0.374" stop-color="#6e52ff"/><stop offset="0.410" stop-color="#804fff"/><stop offset="0.453" stop-color="#9c4aff"/><stop offset="0.496" stop-color="#bf45ff"/><stop offset="0.540" stop-color="#e840ff"/><stop offset="0.554" stop-color="#f53dfc"/><stop offset="0.568" stop-color="#fc3af5"/><stop offset="0.619" stop-color="#ff2dc9"/><stop offset="0.655" stop-color="#ff24af"/><stop offset="0.698" stop-color="#ff1c96"/><stop offset="0.748" stop-color="#ff147d"/><stop offset="0.863" stop-color="#ff0756"/><stop offset="1.000" stop-color="#ff0039"/></linearGradient>
<linearGradient id="t88" gradientUnits="userSpaceOnUse" x1="1306" x2="1575" y1="0" y2="0"><stop offset="0.000" stop-color="#005bff"/><stop offset="0.052" stop-color="#0654ff"/><stop offset="0.126" stop-color="#184dff"/><stop offset="0.223" stop-color="#374aff"/><stop offset="0.305" stop-color="#5452ff"/><stop offset="0.379" stop-color="#684cff"/><stop offset="0.424" stop-color="#7e48ff"/><stop offset="0.476" stop-color="#9f42ff"/><stop offset="0.520" stop-color="#c23dff"/><stop offset="0.572" stop-color="#f137fe"/><stop offset="0.587" stop-color="#fb34f8"/><stop offset="0.602" stop-color="#fe31ed"/><stop offset="0.677" stop-color="#ff20b4"/><stop offset="0.766" stop-color="#ff1184"/><stop offset="0.870" stop-color="#ff065f"/><stop offset="1.000" stop-color="#ff0041"/></linearGradient>
<linearGradient id="t89" gradientUnits="userSpaceOnUse" x1="1305" x2="1566" y1="0" y2="0"><stop offset="0.000" stop-color="#0055ff"/><stop offset="0.046" stop-color="#0550ff"/><stop offset="0.123" stop-color="#1548ff"/><stop offset="0.222" stop-color="#3345ff"/><stop offset="0.314" stop-color="#504dff"/><stop offset="0.352" stop-color="#574aff"/><stop offset="0.391" stop-color="#6446ff"/><stop offset="0.437" stop-color="#7a42ff"/><stop offset="0.490" stop-color="#9a3cff"/><stop offset="0.536" stop-color="#bc37ff"/><stop offset="0.598" stop-color="#f130fe"/><stop offset="0.613" stop-color="#fa2ef9"/><stop offset="0.628" stop-color="#fe2aef"/><stop offset="0.697" stop-color="#ff1cba"/><stop offset="0.782" stop-color="#ff0f8d"/><stop offset="0.881" stop-color="#ff0568"/><stop offset="1.000" stop-color="#ff004b"/></linearGradient>
<linearGradient id="t90" gradientUnits="userSpaceOnUse" x1="1305" x2="1558" y1="0" y2="0"><stop offset="0.000" stop-color="#0050ff"/><stop offset="0.047" stop-color="#054aff"/><stop offset="0.126" stop-color="#1543ff"/><stop offset="0.221" stop-color="#3040ff"/><stop offset="0.308" stop-color="#4a48ff"/><stop offset="0.356" stop-color="#5345ff"/><stop offset="0.403" stop-color="#6240ff"/><stop offset="0.458" stop-color="#7c3bff"/><stop offset="0.514" stop-color="#9d35ff"/><stop offset="0.561" stop-color="#bf30ff"/><stop offset="0.625" stop-color="#f329fd"/><stop offset="0.640" stop-color="#fb26f8"/><stop offset="0.656" stop-color="#fe23ed"/><stop offset="0.727" stop-color="#ff17ba"/><stop offset="0.798" stop-color="#ff0d94"/><stop offset="0.885" stop-color="#ff0573"/><stop offset="1.000" stop-color="#ff0054"/></linearGradient>
<linearGradient id="t91" gradientUnits="userSpaceOnUse" x1="1304" x2="1549" y1="0" y2="0"><stop offset="0.000" stop-color="#004bff"/><stop offset="0.049" stop-color="#0445ff"/><stop offset="0.122" stop-color="#133eff"/><stop offset="0.220" stop-color="#2c3cff"/><stop offset="0.310" stop-color="#4543ff"/><stop offset="0.359" stop-color="#4d40ff"/><stop offset="0.416" stop-color="#5f3bff"/><stop offset="0.473" stop-color="#7836ff"/><stop offset="0.531" stop-color="#9830ff"/><stop offset="0.588" stop-color="#bf2aff"/><stop offset="0.653" stop-color="#f223fe"/><stop offset="0.669" stop-color="#fb21f8"/><stop offset="0.686" stop-color="#fe1eee"/><stop offset="0.751" stop-color="#ff13c0"/><stop offset="0.824" stop-color="#ff0a9a"/><stop offset="0.906" stop-color="#ff037a"/><stop offset="1.000" stop-color="#ff005f"/></linearGradient>
<linearGradient id="t92" gradientUnits="userSpaceOnUse" x1="1304" x2="1540" y1="0" y2="0"><stop offset="0.000" stop-color="#0045ff"/><stop offset="0.051" stop-color="#0540ff"/><stop offset="0.127" stop-color="#133aff"/><stop offset="0.220" stop-color="#2a38ff"/><stop offset="0.314" stop-color="#413fff"/><stop offset="0.364" stop-color="#493bff"/><stop offset="0.424" stop-color="#5a36ff"/><stop offset="0.483" stop-color="#7231ff"/><stop offset="0.551" stop-color="#962aff"/><stop offset="0.610" stop-color="#bc25ff"/><stop offset="0.686" stop-color="#f41dfd"/><stop offset="0.703" stop-color="#fc1af7"/><stop offset="0.720" stop-color="#ff18ec"/><stop offset="0.780" stop-color="#ff0fc5"/><stop offset="0.839" stop-color="#ff09a5"/><stop offset="0.915" stop-color="#ff0386"/><stop offset="1.000" stop-color="#ff006c"/></linearGradient>
<linearGradient id="t93" gradientUnits="userSpaceOnUse" x1="1303" x2="1531" y1="0" y2="0"><stop offset="0.000" stop-color="#0041ff"/><stop offset="0.044" stop-color="#033cff"/><stop offset="0.123" stop-color="#1036ff"/><stop offset="0.219" stop-color="#2634ff"/><stop offset="0.316" stop-color="#3d3bff"/><stop offset="0.377" stop-color="#4636ff"/><stop offset="0.439" stop-color="#5731ff"/><stop offset="0.509" stop-color="#732bff"/><stop offset="0.579" stop-color="#9725ff"/><stop offset="0.640" stop-color="#bc1fff"/><stop offset="0.719" stop-color="#f417fd"/><stop offset="0.737" stop-color="#fc15f8"/><stop offset="0.754" stop-color="#ff13ed"/><stop offset="0.807" stop-color="#ff0ccb"/><stop offset="0.868" stop-color="#ff06ab"/><stop offset="0.930" stop-color="#ff0292"/><stop offset="1.000" stop-color="#ff007a"/></linearGradient>
<linearGradient id="t94" gradientUnits="userSpaceOnUse" x1="1303" x2="1522" y1="0" y2="0"><stop offset="0.000" stop-color="#003cff"/><stop offset="0.046" stop-color="#0338ff"/><stop offset="0.128" stop-color="#1031ff"/><stop offset="0.219" stop-color="#2430ff"/><stop offset="0.311" stop-color="#3837ff"/><stop offset="0.384" stop-color="#4232ff"/><stop offset="0.457" stop-color="#562cff"/><stop offset="0.530" stop-color="#7126ff"/><stop offset="0.603" stop-color="#9520ff"/><stop offset="0.676" stop-color="#bf19ff"/><stop offset="0.749" stop-color="#f012fe"/><stop offset="0.767" stop-color="#fa11fa"/><stop offset="0.795" stop-color="#ff0dec"/><stop offset="0.886" stop-color="#ff05b8"/><stop offset="1.000" stop-color="#ff008a"/></linearGradient>
<linearGradient id="t95" gradientUnits="userSpaceOnUse" x1="1302" x2="1514" y1="0" y2="0"><stop offset="0.000" stop-color="#0038ff"/><stop offset="0.047" stop-color="#0334ff"/><stop offset="0.132" stop-color="#102eff"/><stop offset="0.217" stop-color="#212dff"/><stop offset="0.311" stop-color="#3433ff"/><stop offset="0.387" stop-color="#3d2eff"/><stop offset="0.472" stop-color="#5328ff"/><stop offset="0.547" stop-color="#6e22ff"/><stop offset="0.623" stop-color="#901bff"/><stop offset="0.698" stop-color="#ba15ff"/><stop offset="0.783" stop-color="#f00efe"/><stop offset="0.802" stop-color="#f90cfb"/><stop offset="0.830" stop-color="#ff09ed"/><stop offset="0.906" stop-color="#ff03c3"/><stop offset="1.000" stop-color="#ff009b"/></linearGradient>
<linearGradient id="t96" gradientUnits="userSpaceOnUse" x1="1302" x2="1505" y1="0" y2="0"><stop offset="0.000" stop-color="#0033ff"/><stop offset="0.128" stop-color="#0e2aff"/><stop offset="0.217" stop-color="#1f29ff"/><stop offset="0.315" stop-color="#312fff"/><stop offset="0.394" stop-color="#3a2aff"/><stop offset="0.483" stop-color="#4f24ff"/><stop offset="0.562" stop-color="#691eff"/><stop offset="0.650" stop-color="#8f17ff"/><stop offset="0.729" stop-color="#b711ff"/><stop offset="0.828" stop-color="#f209fe"/><stop offset="0.847" stop-color="#fb07fa"/><stop offset="0.867" stop-color="#fe06f1"/><stop offset="0.936" stop-color="#ff02cc"/><stop offset="1.000" stop-color="#ff00af"/></linearGradient>
<linearGradient id="t97" gradientUnits="userSpaceOnUse" x1="1302" x2="1496" y1="0" y2="0"><stop offset="0.000" stop-color="#002fff"/><stop offset="0.124" stop-color="#0d27ff"/><stop offset="0.206" stop-color="#1b26ff"/><stop offset="0.309" stop-color="#2d2bff"/><stop offset="0.392" stop-color="#3527ff"/><stop offset="0.485" stop-color="#4821ff"/><stop offset="0.577" stop-color="#651aff"/><stop offset="0.670" stop-color="#8913ff"/><stop offset="0.763" stop-color="#b50dff"/><stop offset="0.876" stop-color="#f405fe"/><stop offset="0.918" stop-color="#ff02ef"/><stop offset="1.000" stop-color="#ff00c6"/></linearGradient>
<linearGradient id="t98" gradientUnits="userSpaceOnUse" x1="1301" x2="1487" y1="0" y2="0"><stop offset="0.000" stop-color="#002cff"/><stop offset="0.054" stop-color="#0328ff"/><stop offset="0.151" stop-color="#0f23ff"/><stop offset="0.312" stop-color="#2928ff"/><stop offset="0.398" stop-color="#3124ff"/><stop offset="0.516" stop-color="#491cff"/><stop offset="0.613" stop-color="#6516ff"/><stop offset="0.710" stop-color="#8a0fff"/><stop offset="0.806" stop-color="#b509ff"/><stop offset="0.914" stop-color="#ee03ff"/><stop offset="0.946" stop-color="#fb01f9"/><stop offset="1.000" stop-color="#ff00e0"/></linearGradient>
<linearGradient id="t99" gradientUnits="userSpaceOnUse" x1="1301" x2="1478" y1="0" y2="0"><stop offset="0.000" stop-color="#0028ff"/><stop offset="0.147" stop-color="#0e20ff"/><stop offset="0.305" stop-color="#2525ff"/><stop offset="0.407" stop-color="#2e20ff"/><stop offset="0.554" stop-color="#4b17ff"/><stop offset="0.655" stop-color="#6811ff"/><stop offset="0.757" stop-color="#8d0bff"/><stop offset="0.859" stop-color="#b805ff"/><stop offset="0.960" stop-color="#eb01ff"/><stop offset="1.000" stop-color="#fb00fa"/></linearGradient>
<linearGradient id="t100" gradientUnits="userSpaceOnUse" x1="1300" x2="1470" y1="0" y2="0"><stop offset="0.000" stop-color="#0025ff"/><stop offset="0.141" stop-color="#0c1dff"/><stop offset="0.306" stop-color="#2222ff"/><stop offset="0.412" stop-color="#2b1dff"/><stop offset="0.565" stop-color="#4615ff"/><stop offset="0.671" stop-color="#620fff"/><stop offset="0.776" stop-color="#8509ff"/><stop offset="0.882" stop-color="#af03ff"/><stop offset="1.000" stop-color="#e400ff"/></linearGradient>
<linearGradient id="t101" gradientUnits="userSpaceOnUse" x1="1300" x2="1461" y1="0" y2="0"><stop offset="0.000" stop-color="#0021ff"/><stop offset="0.137" stop-color="#0b1bff"/><stop offset="0.311" stop-color="#201fff"/><stop offset="0.422" stop-color="#281aff"/><stop offset="0.559" stop-color="#3e13ff"/><stop offset="0.658" stop-color="#540eff"/><stop offset="0.770" stop-color="#7408ff"/><stop offset="0.882" stop-color="#9a03ff"/><stop offset="1.000" stop-color="#c900ff"/></linearGradient>
<linearGradient id="t102" gradientUnits="userSpaceOnUse" x1="1299" x2="1452" y1="0" y2="0"><stop offset="0.000" stop-color="#001eff"/><stop offset="0.144" stop-color="#0a18ff"/><stop offset="0.314" stop-color="#1d1cff"/><stop offset="0.418" stop-color="#2318ff"/><stop offset="0.562" stop-color="#3711ff"/><stop offset="0.667" stop-color="#4c0cff"/><stop offset="0.771" stop-color="#6607ff"/><stop offset="1.000" stop-color="#b000ff"/></linearGradient>
<linearGradient id="t103" gradientUnits="userSpaceOnUse" x1="1299" x2="1443" y1="0" y2="0"><stop offset="0.000" stop-color="#001bff"/><stop offset="0.153" stop-color="#0a16ff"/><stop offset="0.333" stop-color="#1b19ff"/><stop offset="0.444" stop-color="#2215ff"/><stop offset="0.569" stop-color="#320fff"/><stop offset="0.778" stop-color="#5c06ff"/><stop offset="1.000" stop-color="#9a00ff"/></linearGradient>
<linearGradient id="t104" gradientUnits="userSpaceOnUse" x1="1298" x2="1434" y1="0" y2="0"><stop offset="0.000" stop-color="#0018ff"/><stop offset="0.162" stop-color="#0a14ff"/><stop offset="0.338" stop-color="#1917ff"/><stop offset="0.456" stop-color="#2012ff"/><stop offset="0.574" stop-color="#2d0dff"/><stop offset="0.779" stop-color="#5005ff"/><stop offset="1.000" stop-color="#8600ff"/></linearGradient>
<linearGradient id="t105" gradientUnits="userSpaceOnUse" x1="1298" x2="1426" y1="0" y2="0"><stop offset="0.000" stop-color="#0016ff"/><stop offset="0.156" stop-color="#0911ff"/><stop offset="0.328" stop-color="#1615ff"/><stop offset="0.438" stop-color="#1b11ff"/><stop offset="0.562" stop-color="#270cff"/><stop offset="0.766" stop-color="#4505ff"/><stop offset="1.000" stop-color="#7500ff"/></linearGradient>
<linearGradient id="t106" gradientUnits="userSpaceOnUse" x1="1298" x2="1417" y1="0" y2="0"><stop offset="0.000" stop-color="#0013ff"/><stop offset="0.151" stop-color="#0710ff"/><stop offset="0.336" stop-color="#1412ff"/><stop offset="0.571" stop-color="#230bff"/><stop offset="0.773" stop-color="#3d04ff"/><stop offset="1.000" stop-color="#6500ff"/></linearGradient>
<linearGradient id="t107" gradientUnits="userSpaceOnUse" x1="1297" x2="1408" y1="0" y2="0"><stop offset="0.000" stop-color="#0011ff"/><stop offset="0.144" stop-color="#060eff"/><stop offset="0.324" stop-color="#1110ff"/><stop offset="0.577" stop-color="#1f09ff"/><stop offset="0.775" stop-color="#3404ff"/><stop offset="1.000" stop-color="#5600ff"/></linearGradient>
<linearGradient id="t108" gradientUnits="userSpaceOnUse" x1="1297" x2="1399" y1="0" y2="0"><stop offset="0.000" stop-color="#000fff"/><stop offset="0.333" stop-color="#0f0eff"/><stop offset="0.569" stop-color="#1a08ff"/><stop offset="0.765" stop-color="#2c03ff"/><stop offset="1.000" stop-color="#4900ff"/></linearGradient>
<linearGradient id="t109" gradientUnits="userSpaceOnUse" x1="1296" x2="1390" y1="0" y2="0"><stop offset="0.000" stop-color="#000dff"/><stop offset="0.340" stop-color="#0d0cff"/><stop offset="0.574" stop-color="#1607ff"/><stop offset="0.766" stop-color="#2503ff"/><stop offset="1.000" stop-color="#3d00ff"/></linearGradient>
<linearGradient id="t110" gradientUnits="userSpaceOnUse" x1="1296" x2="1382" y1="0" y2="0"><stop offset="0.000" stop-color="#000bff"/><stop offset="0.326" stop-color="#0b0bff"/><stop offset="0.581" stop-color="#1406ff"/><stop offset="1.000" stop-color="#3400ff"/></linearGradient>
<linearGradient id="t111" gradientUnits="userSpaceOnUse" x1="1295" x2="1373" y1="0" y2="0"><stop offset="0.000" stop-color="#0009ff"/><stop offset="0.590" stop-color="#1005ff"/><stop offset="1.000" stop-color="#2b00ff"/></linearGradient>
<linearGradient id="t112" gradientUnits="userSpaceOnUse" x1="1295" x2="1364" y1="0" y2="0"><stop offset="0.000" stop-color="#0007ff"/><stop offset="0.580" stop-color="#0d04ff"/><stop offset="1.000" stop-color="#2200ff"/></linearGradient>
<linearGradient id="t113" gradientUnits="userSpaceOnUse" x1="1294" x2="1355" y1="0" y2="0"><stop offset="0.000" stop-color="#0006ff"/><stop offset="0.590" stop-color="#0b03ff"/><stop offset="1.000" stop-color="#1b00ff"/></linearGradient>
<linearGradient id="t114" gradientUnits="userSpaceOnUse" x1="1294" x2="1346" y1="0" y2="0"><stop offset="0.000" stop-color="#0004ff"/><stop offset="0.577" stop-color="#0802ff"/><stop offset="1.000" stop-color="#1400ff"/></linearGradient>
<linearGradient id="t115" gradientUnits="userSpaceOnUse" x1="1294" x2="1338" y1="0" y2="0"><stop offset="0.000" stop-color="#0003ff"/><stop offset="0.591" stop-color="#0602ff"/><stop offset="1.000" stop-color="#0f00ff"/></linearGradient>
<linearGradient id="t116" gradientUnits="userSpaceOnUse" x1="1293" x2="1329" y1="0" y2="0"><stop offset="0.000" stop-color="#0002ff"/><stop offset="1.000" stop-color="#0a00ff"/></linearGradient>
<linearGradient id="t117" gradientUnits="userSpaceOnUse" x1="1293" x2="1320" y1="0" y2="0"><stop offset="0.000" stop-color="#0001ff"/><stop offset="1.000" stop-color="#0600ff"/></linearGradient>
<linearGradient id="t118" gradientUnits="userSpaceOnUse" x1="1292" x2="1311" y1="0" y2="0"><stop offset="0.000" stop-color="#0001ff"/><stop offset="1.000" stop-color="#0300ff"/></linearGradient>
<clipPath id="ci"><rect x="1696.5" y="54.9" width="212.1" height="223.3"/></clipPath>
<clipPath id="cj" clip-path="url(#ci)"><polygon points="893,-678 2694,994 641,2182"/></clipPath>
<linearGradient id="i0" gradientUnits="userSpaceOnUse" x1="1694" x2="1912" y1="0" y2="0"><stop offset="0.000" stop-color="#74a800"/><stop offset="0.789" stop-color="#a8a800"/><stop offset="1.000" stop-color="#a89900"/></linearGradient>
<linearGradient id="i1" gradientUnits="userSpaceOnUse" x1="1694" x2="1912" y1="0" y2="0"><stop offset="0.000" stop-color="#74a800"/><stop offset="0.780" stop-color="#a8a800"/><stop offset="1.000" stop-color="#a89900"/></linearGradient>
<linearGradient id="i2" gradientUnits="userSpaceOnUse" x1="1694" x2="1912" y1="0" y2="0"><stop offset="0.000" stop-color="#75a800"/><stop offset="0.771" stop-color="#a8a800"/><stop offset="1.000" stop-color="#a89800"/></linearGradient>
<linearGradient id="i3" gradientUnits="userSpaceOnUse" x1="1694" x2="1912" y1="0" y2="0"><stop offset="0.000" stop-color="#75a800"/><stop offset="0.761" stop-color="#a8a800"/><stop offset="1.000" stop-color="#a89700"/></linearGradient>
<linearGradient id="i4" gradientUnits="userSpaceOnUse" x1="1694" x2="1912" y1="0" y2="0"><stop offset="0.000" stop-color="#76a800"/><stop offset="0.743" stop-color="#a8a800"/><stop offset="1.000" stop-color="#a89700"/></linearGradient>
<linearGradient id="i5" gradientUnits="userSpaceOnUse" x1="1694" x2="1912" y1="0" y2="0"><stop offset="0.000" stop-color="#76a800"/><stop offset="0.734" stop-color="#a8a800"/><stop offset="1.000" stop-color="#a89600"/></linearGradient>
<linearGradient id="i6" gradientUnits="userSpaceOnUse" x1="1694" x2="1912" y1="0" y2="0"><stop offset="0.000" stop-color="#77a800"/><stop offset="0.725" stop-color="#a8a800"/><stop offset="1.000" stop-color="#a89500"/></linearGradient>
<linearGradient id="i7" gradientUnits="userSpaceOnUse" x1="1694" x2="1912" y1="0" y2="0"><stop offset="0.000" stop-color="#77a800"/><stop offset="0.716" stop-color="#a8a800"/><stop offset="1.000" stop-color="#a89400"/></linearGradient>
<linearGradient id="i8" gradientUnits="userSpaceOnUse" x1="1694" x2="1912" y1="0" y2="0"><stop offset="0.000" stop-color="#78a800"/><stop offset="0.706" stop-color="#a8a800"/><stop offset="1.000" stop-color="#a89400"/></linearGradient>
<linearGradient id="i9" gradientUnits="userSpaceOnUse" x1="1694" x2="1912" y1="0" y2="0"><stop offset="0.000" stop-color="#78a801"/><stop offset="0.697" stop-color="#a8a800"/><stop offset="1.000" stop-color="#a89300"/></linearGradient>
<linearGradient id="i10" gradientUnits="userSpaceOnUse" x1="1694" x2="1912" y1="0" y2="0"><stop offset="0.000" stop-color="#79a801"/><stop offset="0.688" stop-color="#a8a800"/><stop offset="1.000" stop-color="#a89200"/></linearGradient>
<linearGradient id="i11" gradientUnits="userSpaceOnUse" x1="1694" x2="1912" y1="0" y2="0"><stop offset="0.000" stop-color="#79a801"/><stop offset="0.670" stop-color="#a8a800"/><stop offset="1.000" stop-color="#a89100"/></linearGradient>
<linearGradient id="i12" gradientUnits="userSpaceOnUse" x1="1694" x2="1912" y1="0" y2="0"><stop offset="0.000" stop-color="#7aa801"/><stop offset="0.661" stop-color="#a8a800"/><stop offset="1.000" stop-color="#a89100"/></linearGradient>
<linearGradient id="i13" gradientUnits="userSpaceOnUse" x1="1694" x2="1912" y1="0" y2="0"><stop offset="0.000" stop-color="#7aa801"/><stop offset="0.651" stop-color="#a8a800"/><stop offset="1.000" stop-color="#a89000"/></linearGradient>
<linearGradient id="i14" gradientUnits="userSpaceOnUse" x1="1694" x2="1912" y1="0" y2="0"><stop offset="0.000" stop-color="#7ba801"/><stop offset="0.642" stop-color="#a8a800"/><stop offset="1.000" stop-color="#a88f00"/></linearGradient>
<linearGradient id="i15" gradientUnits="userSpaceOnUse" x1="1694" x2="1912" y1="0" y2="0"><stop offset="0.000" stop-color="#7ba801"/><stop offset="0.633" stop-color="#a8a800"/><stop offset="1.000" stop-color="#a88f00"/></linearGradient>
<linearGradient id="i16" gradientUnits="userSpaceOnUse" x1="1694" x2="1912" y1="0" y2="0"><stop offset="0.000" stop-color="#7ca801"/><stop offset="0.624" stop-color="#a8a800"/><stop offset="1.000" stop-color="#a88e00"/></linearGradient>
<linearGradient id="i17" gradientUnits="userSpaceOnUse" x1="1694" x2="1912" y1="0" y2="0"><stop offset="0.000" stop-color="#7da802"/><stop offset="0.615" stop-color="#a8a800"/><stop offset="1.000" stop-color="#a88d00"/></linearGradient>
<linearGradient id="i18" gradientUnits="userSpaceOnUse" x1="1694" x2="1912" y1="0" y2="0"><stop offset="0.000" stop-color="#7da802"/><stop offset="0.606" stop-color="#a8a800"/><stop offset="1.000" stop-color="#a88d00"/></linearGradient>
<linearGradient id="i19" gradientUnits="userSpaceOnUse" x1="1694" x2="1912" y1="0" y2="0"><stop offset="0.000" stop-color="#7ea802"/><stop offset="0.587" stop-color="#a8a800"/><stop offset="1.000" stop-color="#a88c00"/></linearGradient>
<linearGradient id="i20" gradientUnits="userSpaceOnUse" x1="1694" x2="1912" y1="0" y2="0"><stop offset="0.000" stop-color="#7ea802"/><stop offset="0.578" stop-color="#a8a800"/><stop offset="1.000" stop-color="#a88b00"/></linearGradient>
<linearGradient id="i21" gradientUnits="userSpaceOnUse" x1="1694" x2="1912" y1="0" y2="0"><stop offset="0.000" stop-color="#7fa802"/><stop offset="0.569" stop-color="#a8a800"/><stop offset="1.000" stop-color="#a88a00"/></linearGradient>
<linearGradient id="i22" gradientUnits="userSpaceOnUse" x1="1694" x2="1912" y1="0" y2="0"><stop offset="0.000" stop-color="#7fa802"/><stop offset="0.560" stop-color="#a8a800"/><stop offset="1.000" stop-color="#a88a00"/></linearGradient>
<linearGradient id="i23" gradientUnits="userSpaceOnUse" x1="1694" x2="1912" y1="0" y2="0"><stop offset="0.000" stop-color="#80a803"/><stop offset="0.550" stop-color="#a8a800"/><stop offset="1.000" stop-color="#a88900"/></linearGradient>
<linearGradient id="i24" gradientUnits="userSpaceOnUse" x1="1694" x2="1912" y1="0" y2="0"><stop offset="0.000" stop-color="#81a803"/><stop offset="0.541" stop-color="#a8a800"/><stop offset="1.000" stop-color="#a88800"/></linearGradient>
<linearGradient id="i25" gradientUnits="userSpaceOnUse" x1="1694" x2="1912" y1="0" y2="0"><stop offset="0.000" stop-color="#81a803"/><stop offset="0.532" stop-color="#a8a800"/><stop offset="1.000" stop-color="#a88800"/></linearGradient>
<linearGradient id="i26" gradientUnits="userSpaceOnUse" x1="1694" x2="1912" y1="0" y2="0"><stop offset="0.000" stop-color="#82a803"/><stop offset="0.514" stop-color="#a8a800"/><stop offset="1.000" stop-color="#a88700"/></linearGradient>
<linearGradient id="i27" gradientUnits="userSpaceOnUse" x1="1694" x2="1912" y1="0" y2="0"><stop offset="0.000" stop-color="#83a803"/><stop offset="0.505" stop-color="#a8a800"/><stop offset="1.000" stop-color="#a88600"/></linearGradient>
<linearGradient id="i28" gradientUnits="userSpaceOnUse" x1="1694" x2="1912" y1="0" y2="0"><stop offset="0.000" stop-color="#83a803"/><stop offset="0.495" stop-color="#a8a800"/><stop offset="1.000" stop-color="#a88600"/></linearGradient>
<linearGradient id="i29" gradientUnits="userSpaceOnUse" x1="1694" x2="1912" y1="0" y2="0"><stop offset="0.000" stop-color="#84a804"/><stop offset="0.486" stop-color="#a8a800"/><stop offset="1.000" stop-color="#a88500"/></linearGradient>
<linearGradient id="i30" gradientUnits="userSpaceOnUse" x1="1694" x2="1912" y1="0" y2="0"><stop offset="0.000" stop-color="#84a804"/><stop offset="0.477" stop-color="#a8a800"/><stop offset="1.000" stop-color="#a88400"/></linearGradient>
<linearGradient id="i31" gradientUnits="userSpaceOnUse" x1="1694" x2="1912" y1="0" y2="0"><stop offset="0.000" stop-color="#85a804"/><stop offset="0.468" stop-color="#a8a800"/><stop offset="1.000" stop-color="#a88300"/></linearGradient>
<linearGradient id="i32" gradientUnits="userSpaceOnUse" x1="1694" x2="1912" y1="0" y2="0"><stop offset="0.000" stop-color="#86a804"/><stop offset="0.459" stop-color="#a8a801"/><stop offset="1.000" stop-color="#a88300"/></linearGradient>
<linearGradient id="i33" gradientUnits="userSpaceOnUse" x1="1694" x2="1912" y1="0" y2="0"><stop offset="0.000" stop-color="#86a804"/><stop offset="0.440" stop-color="#a8a801"/><stop offset="1.000" stop-color="#a88200"/></linearGradient>
<linearGradient id="i34" gradientUnits="userSpaceOnUse" x1="1694" x2="1912" y1="0" y2="0"><stop offset="0.000" stop-color="#87a805"/><stop offset="0.431" stop-color="#a8a801"/><stop offset="1.000" stop-color="#a88100"/></linearGradient>
<linearGradient id="i35" gradientUnits="userSpaceOnUse" x1="1694" x2="1912" y1="0" y2="0"><stop offset="0.000" stop-color="#88a805"/><stop offset="0.422" stop-color="#a8a801"/><stop offset="1.000" stop-color="#a88100"/></linearGradient>
<linearGradient id="i36" gradientUnits="userSpaceOnUse" x1="1694" x2="1912" y1="0" y2="0"><stop offset="0.000" stop-color="#88a805"/><stop offset="0.413" stop-color="#a8a802"/><stop offset="1.000" stop-color="#a88000"/></linearGradient>
<linearGradient id="i37" gradientUnits="userSpaceOnUse" x1="1694" x2="1912" y1="0" y2="0"><stop offset="0.000" stop-color="#89a805"/><stop offset="0.404" stop-color="#a8a802"/><stop offset="1.000" stop-color="#a87f00"/></linearGradient>
<linearGradient id="i38" gradientUnits="userSpaceOnUse" x1="1694" x2="1912" y1="0" y2="0"><stop offset="0.000" stop-color="#8aa805"/><stop offset="0.394" stop-color="#a8a802"/><stop offset="1.000" stop-color="#a87f00"/></linearGradient>
<linearGradient id="i39" gradientUnits="userSpaceOnUse" x1="1694" x2="1912" y1="0" y2="0"><stop offset="0.000" stop-color="#8aa806"/><stop offset="0.385" stop-color="#a8a802"/><stop offset="1.000" stop-color="#a87e00"/></linearGradient>
<linearGradient id="i40" gradientUnits="userSpaceOnUse" x1="1694" x2="1912" y1="0" y2="0"><stop offset="0.000" stop-color="#8ba806"/><stop offset="0.367" stop-color="#a8a803"/><stop offset="1.000" stop-color="#a87d00"/></linearGradient>
<linearGradient id="i41" gradientUnits="userSpaceOnUse" x1="1694" x2="1912" y1="0" y2="0"><stop offset="0.000" stop-color="#8ca806"/><stop offset="0.358" stop-color="#a8a803"/><stop offset="0.651" stop-color="#a89200"/><stop offset="1.000" stop-color="#a87d00"/></linearGradient>
<linearGradient id="i42" gradientUnits="userSpaceOnUse" x1="1694" x2="1912" y1="0" y2="0"><stop offset="0.000" stop-color="#8da806"/><stop offset="0.349" stop-color="#a8a803"/><stop offset="0.642" stop-color="#a89201"/><stop offset="1.000" stop-color="#a87c00"/></linearGradient>
<linearGradient id="i43" gradientUnits="userSpaceOnUse" x1="1694" x2="1912" y1="0" y2="0"><stop offset="0.000" stop-color="#8da806"/><stop offset="0.339" stop-color="#a8a803"/><stop offset="0.642" stop-color="#a89101"/><stop offset="1.000" stop-color="#a87b00"/></linearGradient>
<linearGradient id="i44" gradientUnits="userSpaceOnUse" x1="1694" x2="1912" y1="0" y2="0"><stop offset="0.000" stop-color="#8ea807"/><stop offset="0.330" stop-color="#a8a804"/><stop offset="0.642" stop-color="#a89001"/><stop offset="1.000" stop-color="#a87b00"/></linearGradient>
<linearGradient id="i45" gradientUnits="userSpaceOnUse" x1="1694" x2="1912" y1="0" y2="0"><stop offset="0.000" stop-color="#8fa807"/><stop offset="0.321" stop-color="#a8a804"/><stop offset="0.633" stop-color="#a89001"/><stop offset="1.000" stop-color="#a87a00"/></linearGradient>
<linearGradient id="i46" gradientUnits="userSpaceOnUse" x1="1694" x2="1912" y1="0" y2="0"><stop offset="0.000" stop-color="#8fa807"/><stop offset="0.312" stop-color="#a8a804"/><stop offset="0.633" stop-color="#a89001"/><stop offset="1.000" stop-color="#a87900"/></linearGradient>
<linearGradient id="i47" gradientUnits="userSpaceOnUse" x1="1694" x2="1912" y1="0" y2="0"><stop offset="0.000" stop-color="#90a807"/><stop offset="0.294" stop-color="#a8a805"/><stop offset="0.624" stop-color="#a88f01"/><stop offset="1.000" stop-color="#a87900"/></linearGradient>
<linearGradient id="i48" gradientUnits="userSpaceOnUse" x1="1694" x2="1912" y1="0" y2="0"><stop offset="0.000" stop-color="#91a808"/><stop offset="0.284" stop-color="#a8a805"/><stop offset="0.624" stop-color="#a88f02"/><stop offset="1.000" stop-color="#a87800"/></linearGradient>
<linearGradient id="i49" gradientUnits="userSpaceOnUse" x1="1694" x2="1912" y1="0" y2="0"><stop offset="0.000" stop-color="#92a808"/><stop offset="0.275" stop-color="#a8a805"/><stop offset="0.615" stop-color="#a88e02"/><stop offset="1.000" stop-color="#a87700"/></linearGradient>
<linearGradient id="i50" gradientUnits="userSpaceOnUse" x1="1694" x2="1912" y1="0" y2="0"><stop offset="0.000" stop-color="#92a808"/><stop offset="0.266" stop-color="#a8a806"/><stop offset="0.615" stop-color="#a88e02"/><stop offset="1.000" stop-color="#a87700"/></linearGradient>
<linearGradient id="i51" gradientUnits="userSpaceOnUse" x1="1694" x2="1912" y1="0" y2="0"><stop offset="0.000" stop-color="#93a808"/><stop offset="0.257" stop-color="#a8a806"/><stop offset="0.606" stop-color="#a88d02"/><stop offset="1.000" stop-color="#a87600"/></linearGradient>
<linearGradient id="i52" gradientUnits="userSpaceOnUse" x1="1694" x2="1912" y1="0" y2="0"><stop offset="0.000" stop-color="#94a809"/><stop offset="0.248" stop-color="#a8a806"/><stop offset="0.606" stop-color="#a88d02"/><stop offset="1.000" stop-color="#a87500"/></linearGradient>
<linearGradient id="i53" gradientUnits="userSpaceOnUse" x1="1694" x2="1912" y1="0" y2="0"><stop offset="0.000" stop-color="#95a809"/><stop offset="0.239" stop-color="#a8a806"/><stop offset="0.596" stop-color="#a88c03"/><stop offset="1.000" stop-color="#a87500"/></linearGradient>
<linearGradient id="i54" gradientUnits="userSpaceOnUse" x1="1694" x2="1912" y1="0" y2="0"><stop offset="0.000" stop-color="#96a809"/><stop offset="0.220" stop-color="#a8a807"/><stop offset="0.596" stop-color="#a88c03"/><stop offset="1.000" stop-color="#a87400"/></linearGradient>
<linearGradient id="i55" gradientUnits="userSpaceOnUse" x1="1694" x2="1912" y1="0" y2="0"><stop offset="0.000" stop-color="#96a809"/><stop offset="0.211" stop-color="#a8a807"/><stop offset="0.587" stop-color="#a88b03"/><stop offset="1.000" stop-color="#a87300"/></linearGradient>
<linearGradient id="i56" gradientUnits="userSpaceOnUse" x1="1694" x2="1912" y1="0" y2="0"><stop offset="0.000" stop-color="#97a80a"/><stop offset="0.202" stop-color="#a8a808"/><stop offset="0.578" stop-color="#a88b03"/><stop offset="1.000" stop-color="#a87300"/></linearGradient>
<linearGradient id="j0" gradientUnits="userSpaceOnUse" x1="1694" x2="1912" y1="0" y2="0"><stop offset="0.000" stop-color="#afff00"/><stop offset="0.404" stop-color="#d5ff00"/><stop offset="0.789" stop-color="#ffff00"/><stop offset="1.000" stop-color="#ffe900"/></linearGradient>
<linearGradient id="j1" gradientUnits="userSpaceOnUse" x1="1694" x2="1912" y1="0" y2="0"><stop offset="0.000" stop-color="#b0ff00"/><stop offset="0.394" stop-color="#d5ff00"/><stop offset="0.780" stop-color="#ffff00"/><stop offset="1.000" stop-color="#ffe700"/></linearGradient>
<linearGradient id="j2" gradientUnits="userSpaceOnUse" x1="1694" x2="1912" y1="0" y2="0"><stop offset="0.000" stop-color="#b1ff00"/><stop offset="0.394" stop-color="#d6ff00"/><stop offset="0.771" stop-color="#ffff00"/><stop offset="1.000" stop-color="#ffe600"/></linearGradient>
<linearGradient id="j3" gradientUnits="userSpaceOnUse" x1="1694" x2="1912" y1="0" y2="0"><stop offset="0.000" stop-color="#b2ff00"/><stop offset="0.385" stop-color="#d6ff00"/><stop offset="0.761" stop-color="#ffff00"/><stop offset="1.000" stop-color="#ffe500"/></linearGradient>
<linearGradient id="j4" gradientUnits="userSpaceOnUse" x1="1694" x2="1912" y1="0" y2="0"><stop offset="0.000" stop-color="#b2ff00"/><stop offset="0.385" stop-color="#d7ff00"/><stop offset="0.743" stop-color="#feff00"/><stop offset="1.000" stop-color="#ffe400"/></linearGradient>
<linearGradient id="j5" gradientUnits="userSpaceOnUse" x1="1694" x2="1912" y1="0" y2="0"><stop offset="0.000" stop-color="#b3ff00"/><stop offset="0.385" stop-color="#d8ff00"/><stop offset="0.734" stop-color="#feff00"/><stop offset="1.000" stop-color="#ffe300"/></linearGradient>
<linearGradient id="j6" gradientUnits="userSpaceOnUse" x1="1694" x2="1912" y1="0" y2="0"><stop offset="0.000" stop-color="#b4ff00"/><stop offset="0.376" stop-color="#d9ff00"/><stop offset="0.725" stop-color="#ffff00"/><stop offset="1.000" stop-color="#ffe200"/></linearGradient>
<linearGradient id="j7" gradientUnits="userSpaceOnUse" x1="1694" x2="1912" y1="0" y2="0"><stop offset="0.000" stop-color="#b5ff01"/><stop offset="0.376" stop-color="#daff00"/><stop offset="0.716" stop-color="#ffff00"/><stop offset="1.000" stop-color="#ffe100"/></linearGradient>
<linearGradient id="j8" gradientUnits="userSpaceOnUse" x1="1694" x2="1912" y1="0" y2="0"><stop offset="0.000" stop-color="#b5ff01"/><stop offset="0.706" stop-color="#ffff00"/><stop offset="1.000" stop-color="#ffe000"/></linearGradient>
<linearGradient id="j9" gradientUnits="userSpaceOnUse" x1="1694" x2="1912" y1="0" y2="0"><stop offset="0.000" stop-color="#b6ff01"/><stop offset="0.697" stop-color="#ffff00"/><stop offset="1.000" stop-color="#ffdf00"/></linearGradient>
<linearGradient id="j10" gradientUnits="userSpaceOnUse" x1="1694" x2="1912" y1="0" y2="0"><stop offset="0.000" stop-color="#b7ff01"/><stop offset="0.688" stop-color="#ffff00"/><stop offset="1.000" stop-color="#ffde00"/></linearGradient>
<linearGradient id="j11" gradientUnits="userSpaceOnUse" x1="1694" x2="1912" y1="0" y2="0"><stop offset="0.000" stop-color="#b8ff01"/><stop offset="0.670" stop-color="#feff00"/><stop offset="1.000" stop-color="#ffdc00"/></linearGradient>
<linearGradient id="j12" gradientUnits="userSpaceOnUse" x1="1694" x2="1912" y1="0" y2="0"><stop offset="0.000" stop-color="#b9ff01"/><stop offset="0.661" stop-color="#feff00"/><stop offset="1.000" stop-color="#ffdb00"/></linearGradient>
<linearGradient id="j13" gradientUnits="userSpaceOnUse" x1="1694" x2="1912" y1="0" y2="0"><stop offset="0.000" stop-color="#b9ff02"/><stop offset="0.651" stop-color="#ffff00"/><stop offset="1.000" stop-color="#ffda00"/></linearGradient>
<linearGradient id="j14" gradientUnits="userSpaceOnUse" x1="1694" x2="1912" y1="0" y2="0"><stop offset="0.000" stop-color="#baff02"/><stop offset="0.642" stop-color="#ffff00"/><stop offset="1.000" stop-color="#ffd900"/></linearGradient>
<linearGradient id="j15" gradientUnits="userSpaceOnUse" x1="1694" x2="1912" y1="0" y2="0"><stop offset="0.000" stop-color="#bbff02"/><stop offset="0.633" stop-color="#ffff00"/><stop offset="1.000" stop-color="#ffd800"/></linearGradient>
<linearGradient id="j16" gradientUnits="userSpaceOnUse" x1="1694" x2="1912" y1="0" y2="0"><stop offset="0.000" stop-color="#bcff02"/><stop offset="0.624" stop-color="#ffff00"/><stop offset="1.000" stop-color="#ffd700"/></linearGradient>
<linearGradient id="j17" gradientUnits="userSpaceOnUse" x1="1694" x2="1912" y1="0" y2="0"><stop offset="0.000" stop-color="#bdff02"/><stop offset="0.615" stop-color="#ffff00"/><stop offset="1.000" stop-color="#ffd600"/></linearGradient>
<linearGradient id="j18" gradientUnits="userSpaceOnUse" x1="1694" x2="1912" y1="0" y2="0"><stop offset="0.000" stop-color="#beff03"/><stop offset="0.606" stop-color="#ffff00"/><stop offset="1.000" stop-color="#ffd500"/></linearGradient>
<linearGradient id="j19" gradientUnits="userSpaceOnUse" x1="1694" x2="1912" y1="0" y2="0"><stop offset="0.000" stop-color="#bfff03"/><stop offset="0.587" stop-color="#ffff00"/><stop offset="1.000" stop-color="#ffd400"/></linearGradient>
<linearGradient id="j20" gradientUnits="userSpaceOnUse" x1="1694" x2="1912" y1="0" y2="0"><stop offset="0.000" stop-color="#bfff03"/><stop offset="0.578" stop-color="#ffff00"/><stop offset="1.000" stop-color="#ffd300"/></linearGradient>
<linearGradient id="j21" gradientUnits="userSpaceOnUse" x1="1694" x2="1912" y1="0" y2="0"><stop offset="0.000" stop-color="#c0ff03"/><stop offset="0.569" stop-color="#ffff00"/><stop offset="1.000" stop-color="#ffd200"/></linearGradient>
<linearGradient id="j22" gradientUnits="userSpaceOnUse" x1="1694" x2="1912" y1="0" y2="0"><stop offset="0.000" stop-color="#c1ff04"/><stop offset="0.560" stop-color="#ffff00"/><stop offset="1.000" stop-color="#ffd100"/></linearGradient>
<linearGradient id="j23" gradientUnits="userSpaceOnUse" x1="1694" x2="1912" y1="0" y2="0"><stop offset="0.000" stop-color="#c2ff04"/><stop offset="0.550" stop-color="#ffff00"/><stop offset="1.000" stop-color="#ffd000"/></linearGradient>
<linearGradient id="j24" gradientUnits="userSpaceOnUse" x1="1694" x2="1912" y1="0" y2="0"><stop offset="0.000" stop-color="#c3ff04"/><stop offset="0.541" stop-color="#ffff00"/><stop offset="1.000" stop-color="#ffcf00"/></linearGradient>
<linearGradient id="j25" gradientUnits="userSpaceOnUse" x1="1694" x2="1912" y1="0" y2="0"><stop offset="0.000" stop-color="#c4ff04"/><stop offset="0.532" stop-color="#fffe00"/><stop offset="1.000" stop-color="#ffcd00"/></linearGradient>
<linearGradient id="j26" gradientUnits="userSpaceOnUse" x1="1694" x2="1912" y1="0" y2="0"><stop offset="0.000" stop-color="#c5ff05"/><stop offset="0.514" stop-color="#ffff00"/><stop offset="1.000" stop-color="#ffcc00"/></linearGradient>
<linearGradient id="j27" gradientUnits="userSpaceOnUse" x1="1694" x2="1912" y1="0" y2="0"><stop offset="0.000" stop-color="#c6ff05"/><stop offset="0.505" stop-color="#ffff00"/><stop offset="1.000" stop-color="#ffcb00"/></linearGradient>
<linearGradient id="j28" gradientUnits="userSpaceOnUse" x1="1694" x2="1912" y1="0" y2="0"><stop offset="0.000" stop-color="#c7ff05"/><stop offset="0.495" stop-color="#ffff00"/><stop offset="1.000" stop-color="#ffca00"/></linearGradient>
<linearGradient id="j29" gradientUnits="userSpaceOnUse" x1="1694" x2="1912" y1="0" y2="0"><stop offset="0.000" stop-color="#c8ff05"/><stop offset="0.486" stop-color="#ffff00"/><stop offset="1.000" stop-color="#ffc900"/></linearGradient>
<linearGradient id="j30" gradientUnits="userSpaceOnUse" x1="1694" x2="1912" y1="0" y2="0"><stop offset="0.000" stop-color="#c9ff06"/><stop offset="0.477" stop-color="#ffff00"/><stop offset="0.734" stop-color="#ffe200"/><stop offset="1.000" stop-color="#ffc800"/></linearGradient>
<linearGradient id="j31" gradientUnits="userSpaceOnUse" x1="1694" x2="1912" y1="0" y2="0"><stop offset="0.000" stop-color="#caff06"/><stop offset="0.468" stop-color="#ffff01"/><stop offset="0.725" stop-color="#ffe200"/><stop offset="1.000" stop-color="#ffc700"/></linearGradient>
<linearGradient id="j32" gradientUnits="userSpaceOnUse" x1="1694" x2="1912" y1="0" y2="0"><stop offset="0.000" stop-color="#cbff06"/><stop offset="0.459" stop-color="#fffe01"/><stop offset="0.725" stop-color="#ffe100"/><stop offset="1.000" stop-color="#ffc600"/></linearGradient>
<linearGradient id="j33" gradientUnits="userSpaceOnUse" x1="1694" x2="1912" y1="0" y2="0"><stop offset="0.000" stop-color="#ccff07"/><stop offset="0.440" stop-color="#ffff01"/><stop offset="0.725" stop-color="#ffdf00"/><stop offset="1.000" stop-color="#ffc500"/></linearGradient>
<linearGradient id="j34" gradientUnits="userSpaceOnUse" x1="1694" x2="1912" y1="0" y2="0"><stop offset="0.000" stop-color="#cdff07"/><stop offset="0.431" stop-color="#ffff02"/><stop offset="0.706" stop-color="#ffe000"/><stop offset="1.000" stop-color="#ffc400"/></linearGradient>
<linearGradient id="j35" gradientUnits="userSpaceOnUse" x1="1694" x2="1912" y1="0" y2="0"><stop offset="0.000" stop-color="#ceff07"/><stop offset="0.422" stop-color="#ffff02"/><stop offset="0.697" stop-color="#ffe000"/><stop offset="1.000" stop-color="#ffc300"/></linearGradient>
<linearGradient id="j36" gradientUnits="userSpaceOnUse" x1="1694" x2="1912" y1="0" y2="0"><stop offset="0.000" stop-color="#cfff08"/><stop offset="0.413" stop-color="#ffff02"/><stop offset="0.697" stop-color="#ffdf00"/><stop offset="1.000" stop-color="#ffc200"/></linearGradient>
<linearGradient id="j37" gradientUnits="userSpaceOnUse" x1="1694" x2="1912" y1="0" y2="0"><stop offset="0.000" stop-color="#d0ff08"/><stop offset="0.404" stop-color="#ffff03"/><stop offset="0.661" stop-color="#ffe100"/><stop offset="1.000" stop-color="#ffc100"/></linearGradient>
<linearGradient id="j38" gradientUnits="userSpaceOnUse" x1="1694" x2="1912" y1="0" y2="0"><stop offset="0.000" stop-color="#d1ff08"/><stop offset="0.394" stop-color="#fffe03"/><stop offset="0.661" stop-color="#ffe000"/><stop offset="1.000" stop-color="#ffc000"/></linearGradient>
<linearGradient id="j39" gradientUnits="userSpaceOnUse" x1="1694" x2="1912" y1="0" y2="0"><stop offset="0.000" stop-color="#d2ff09"/><stop offset="0.385" stop-color="#fffe03"/><stop offset="0.661" stop-color="#ffdf00"/><stop offset="1.000" stop-color="#ffbf00"/></linearGradient>
<linearGradient id="j40" gradientUnits="userSpaceOnUse" x1="1694" x2="1912" y1="0" y2="0"><stop offset="0.000" stop-color="#d3ff09"/><stop offset="0.367" stop-color="#ffff04"/><stop offset="0.661" stop-color="#ffde01"/><stop offset="1.000" stop-color="#ffbe00"/></linearGradient>
<linearGradient id="j41" gradientUnits="userSpaceOnUse" x1="1694" x2="1912" y1="0" y2="0"><stop offset="0.000" stop-color="#d4ff09"/><stop offset="0.358" stop-color="#ffff04"/><stop offset="0.651" stop-color="#ffde01"/><stop offset="1.000" stop-color="#ffbd00"/></linearGradient>
<linearGradient id="j42" gradientUnits="userSpaceOnUse" x1="1694" x2="1912" y1="0" y2="0"><stop offset="0.000" stop-color="#d5ff0a"/><stop offset="0.349" stop-color="#ffff05"/><stop offset="0.642" stop-color="#ffdd01"/><stop offset="1.000" stop-color="#ffbc00"/></linearGradient>
<linearGradient id="j43" gradientUnits="userSpaceOnUse" x1="1694" x2="1912" y1="0" y2="0"><stop offset="0.000" stop-color="#d6ff0a"/><stop offset="0.339" stop-color="#ffff05"/><stop offset="0.642" stop-color="#ffdc01"/><stop offset="1.000" stop-color="#ffbb00"/></linearGradient>
<linearGradient id="j44" gradientUnits="userSpaceOnUse" x1="1694" x2="1912" y1="0" y2="0"><stop offset="0.000" stop-color="#d7ff0a"/><stop offset="0.330" stop-color="#ffff06"/><stop offset="0.642" stop-color="#ffdb01"/><stop offset="1.000" stop-color="#ffba00"/></linearGradient>
<linearGradient id="j45" gradientUnits="userSpaceOnUse" x1="1694" x2="1912" y1="0" y2="0"><stop offset="0.000" stop-color="#d8ff0b"/><stop offset="0.321" stop-color="#fffe06"/><stop offset="0.633" stop-color="#ffdb02"/><stop offset="1.000" stop-color="#ffb900"/></linearGradient>
<linearGradient id="j46" gradientUnits="userSpaceOnUse" x1="1694" x2="1912" y1="0" y2="0"><stop offset="0.000" stop-color="#d9ff0b"/><stop offset="0.312" stop-color="#fffe06"/><stop offset="0.633" stop-color="#ffd902"/><stop offset="1.000" stop-color="#ffb800"/></linearGradient>
<linearGradient id="j47" gradientUnits="userSpaceOnUse" x1="1694" x2="1912" y1="0" y2="0"><stop offset="0.000" stop-color="#daff0b"/><stop offset="0.294" stop-color="#ffff07"/><stop offset="0.624" stop-color="#ffd902"/><stop offset="1.000" stop-color="#ffb700"/></linearGradient>
<linearGradient id="j48" gradientUnits="userSpaceOnUse" x1="1694" x2="1912" y1="0" y2="0"><stop offset="0.000" stop-color="#dcff0c"/><stop offset="0.284" stop-color="#ffff07"/><stop offset="0.624" stop-color="#ffd802"/><stop offset="1.000" stop-color="#ffb600"/></linearGradient>
<linearGradient id="j49" gradientUnits="userSpaceOnUse" x1="1694" x2="1912" y1="0" y2="0"><stop offset="0.000" stop-color="#ddff0c"/><stop offset="0.275" stop-color="#ffff08"/><stop offset="0.615" stop-color="#ffd803"/><stop offset="1.000" stop-color="#ffb500"/></linearGradient>
<linearGradient id="j50" gradientUnits="userSpaceOnUse" x1="1694" x2="1912" y1="0" y2="0"><stop offset="0.000" stop-color="#deff0c"/><stop offset="0.266" stop-color="#ffff08"/><stop offset="0.615" stop-color="#ffd603"/><stop offset="1.000" stop-color="#ffb400"/></linearGradient>
<linearGradient id="j51" gradientUnits="userSpaceOnUse" x1="1694" x2="1912" y1="0" y2="0"><stop offset="0.000" stop-color="#dfff0d"/><stop offset="0.257" stop-color="#fffe09"/><stop offset="0.606" stop-color="#ffd603"/><stop offset="1.000" stop-color="#ffb300"/></linearGradient>
<linearGradient id="j52" gradientUnits="userSpaceOnUse" x1="1694" x2="1912" y1="0" y2="0"><stop offset="0.000" stop-color="#e0ff0d"/><stop offset="0.248" stop-color="#fffe09"/><stop offset="0.606" stop-color="#ffd504"/><stop offset="1.000" stop-color="#ffb200"/></linearGradient>
<linearGradient id="j53" gradientUnits="userSpaceOnUse" x1="1694" x2="1912" y1="0" y2="0"><stop offset="0.000" stop-color="#e2ff0d"/><stop offset="0.239" stop-color="#fffe0a"/><stop offset="0.596" stop-color="#ffd504"/><stop offset="1.000" stop-color="#ffb100"/></linearGradient>
<linearGradient id="j54" gradientUnits="userSpaceOnUse" x1="1694" x2="1912" y1="0" y2="0"><stop offset="0.000" stop-color="#e3ff0e"/><stop offset="0.220" stop-color="#ffff0a"/><stop offset="0.596" stop-color="#ffd404"/><stop offset="1.000" stop-color="#ffb000"/></linearGradient>
<linearGradient id="j55" gradientUnits="userSpaceOnUse" x1="1694" x2="1912" y1="0" y2="0"><stop offset="0.000" stop-color="#e4ff0e"/><stop offset="0.211" stop-color="#ffff0b"/><stop offset="0.587" stop-color="#ffd305"/><stop offset="1.000" stop-color="#ffaf00"/></linearGradient>
<linearGradient id="j56" gradientUnits="userSpaceOnUse" x1="1694" x2="1912" y1="0" y2="0"><stop offset="0.000" stop-color="#e5ff0f"/><stop offset="0.202" stop-color="#ffff0c"/><stop offset="0.578" stop-color="#ffd305"/><stop offset="1.000" stop-color="#ffae00"/></linearGradient>
<linearGradient id="v38" x1="0" y1="0" x2="0" y2="1"><stop offset="0" stop-color="#4b4b4b"/><stop offset="1" stop-color="#2b2b2b"/></linearGradient>
<linearGradient id="v39" x1="0" y1="0" x2="0" y2="1"><stop offset="0" stop-color="#b4b4b4"/><stop offset="0.06" stop-color="#a9a9a9"/><stop offset="0.5" stop-color="#888888"/><stop offset="0.9" stop-color="#5c5c5c"/><stop offset="1" stop-color="#5a5a5a"/></linearGradient>
<linearGradient id="v40" x1="0" y1="0" x2="0" y2="1"><stop offset="0" stop-color="#808080"/><stop offset="0.06" stop-color="#787878"/><stop offset="0.5" stop-color="#626262"/><stop offset="0.9" stop-color="#484848"/><stop offset="1" stop-color="#464646"/></linearGradient>
<linearGradient id="v41" x1="0" y1="0" x2="0" y2="1"><stop offset="0" stop-color="#6c6c6c"/><stop offset="0.6" stop-color="#8e8e8e"/><stop offset="1" stop-color="#a6a6a6"/></linearGradient>
<linearGradient id="v42" x1="0" y1="0" x2="0" y2="1"><stop offset="0" stop-color="#b6b6b6"/><stop offset="0.5" stop-color="#a8a8a8"/><stop offset="0.5" stop-color="#8a8a8a"/><stop offset="1" stop-color="#909090"/></linearGradient>
<linearGradient id="v43" x1="0" y1="0" x2="0" y2="1"><stop offset="0" stop-color="#262626"/><stop offset="0.5" stop-color="#1e1e1e"/><stop offset="0.5" stop-color="#000"/><stop offset="1" stop-color="#000"/></linearGradient>
<linearGradient id="v44" x1="0" y1="0" x2="0" y2="1"><stop offset="0" stop-color="#b0b0b0"/><stop offset="0.08" stop-color="#a6a6a6"/><stop offset="1" stop-color="#6e6e6e"/></linearGradient>
<linearGradient id="v45" x1="0" y1="0" x2="0" y2="1"><stop offset="0" stop-color="#4a4a4a"/><stop offset="1" stop-color="#2a2a2a"/></linearGradient>
<linearGradient id="v46" x1="0" y1="0" x2="0" y2="1"><stop offset="0" stop-color="#343434"/><stop offset="1" stop-color="#474747"/></linearGradient>
<linearGradient id="v47" x1="0" y1="0" x2="0" y2="1"><stop offset="0" stop-color="#767676"/><stop offset="0.6" stop-color="#9a9a9a"/><stop offset="1" stop-color="#b0b0b0"/></linearGradient>
<linearGradient id="v48" x1="0" y1="0" x2="0" y2="1"><stop offset="0" stop-color="#c2c2c2"/><stop offset="0.07" stop-color="#b4b4b4"/><stop offset="0.5" stop-color="#9a9a9a"/><stop offset="1" stop-color="#808080"/></linearGradient>
<linearGradient id="v49" x1="0" y1="0" x2="0" y2="1"><stop offset="0" stop-color="#808080"/><stop offset="0.6" stop-color="#a4a4a4"/><stop offset="1" stop-color="#bcbcbc"/></linearGradient>
</defs>
<rect x="0" y="0" width="1920" height="1063" fill="#323232"/>
<rect x="0" y="0" width="1920" height="1.5" fill="#262626"/>
<text x="25.6" y="71.3" font-size="49" fill="#f2f2f2" textLength="375.4" lengthAdjust="spacingAndGlyphs">Saturation Sweeps</text>
<rect x="44.5" y="156.5" width="301.2" height="541.5" fill="#242424"/>
<text x="184.3" y="149.5" font-size="18" fill="#dcdcdc" text-anchor="middle" textLength="96" lengthAdjust="spacingAndGlyphs" stroke="#dcdcdc" stroke-width="0.3">RGB Balance</text>
<line x1="44.5" y1="632.49" x2="345.7" y2="632.49" stroke="#a8a8a8" stroke-width="2"/>
<line x1="44.5" y1="564.56" x2="345.7" y2="564.56" stroke="#a8a8a8" stroke-width="2"/>
<line x1="44.5" y1="496.63" x2="345.7" y2="496.63" stroke="#a8a8a8" stroke-width="2"/>
<line x1="44.5" y1="428.7" x2="345.7" y2="428.7" stroke="#a8a8a8" stroke-width="2"/>
<line x1="44.5" y1="360.77" x2="345.7" y2="360.77" stroke="#a8a8a8" stroke-width="2"/>
<line x1="44.5" y1="292.84" x2="345.7" y2="292.84" stroke="#a8a8a8" stroke-width="2"/>
<line x1="44.5" y1="224.91" x2="345.7" y2="224.91" stroke="#a8a8a8" stroke-width="2"/>
<rect x="74.2" y="427.2" width="78" height="200.4" fill="url(#v1)" stroke="#000" stroke-width="1.3"/>
<rect x="153.6" y="427.2" width="78.6" height="272" fill="url(#v2)" stroke="#000" stroke-width="1.3"/>
<rect x="232.6" y="424.6" width="80.2" height="3.2" fill="#050505"/>
<line x1="44.5" y1="155" x2="44.5" y2="705" stroke="#a8a8a8" stroke-width="1.8"/>
<line x1="345.7" y1="155" x2="345.7" y2="705" stroke="#a8a8a8" stroke-width="1.8"/>
<line x1="43.6" y1="156.5" x2="346.6" y2="156.5" stroke="#a8a8a8" stroke-width="3"/>
<line x1="43.6" y1="698" x2="346.6" y2="698" stroke="#a8a8a8" stroke-width="2.4"/>
<line x1="38" y1="698" x2="44.5" y2="698" stroke="#dcdcdc" stroke-width="1.6"/>
<text x="37.5" y="704.62" font-size="17.5" fill="#dcdcdc" text-anchor="end" textLength="13.6" lengthAdjust="spacingAndGlyphs" stroke="#dcdcdc" stroke-width="0.3">-4</text>
<line x1="38" y1="632.49" x2="44.5" y2="632.49" stroke="#dcdcdc" stroke-width="1.6"/>
<text x="37.5" y="639.41" font-size="17.5" fill="#dcdcdc" text-anchor="end" textLength="13.6" lengthAdjust="spacingAndGlyphs" stroke="#dcdcdc" stroke-width="0.3">-3</text>
<line x1="38" y1="564.56" x2="44.5" y2="564.56" stroke="#dcdcdc" stroke-width="1.6"/>
<text x="37.5" y="571.48" font-size="17.5" fill="#dcdcdc" text-anchor="end" textLength="13.6" lengthAdjust="spacingAndGlyphs" stroke="#dcdcdc" stroke-width="0.3">-2</text>
<line x1="38" y1="496.63" x2="44.5" y2="496.63" stroke="#dcdcdc" stroke-width="1.6"/>
<text x="37.5" y="503.55" font-size="17.5" fill="#dcdcdc" text-anchor="end" textLength="13.6" lengthAdjust="spacingAndGlyphs" stroke="#dcdcdc" stroke-width="0.3">-1</text>
<line x1="38" y1="428.7" x2="44.5" y2="428.7" stroke="#dcdcdc" stroke-width="1.6"/>
<text x="37.5" y="435.62" font-size="17.5" fill="#dcdcdc" text-anchor="end" textLength="8.6" lengthAdjust="spacingAndGlyphs" stroke="#dcdcdc" stroke-width="0.3">0</text>
<line x1="38" y1="360.77" x2="44.5" y2="360.77" stroke="#dcdcdc" stroke-width="1.6"/>
<text x="37.5" y="367.69" font-size="17.5" fill="#dcdcdc" text-anchor="end" textLength="8.6" lengthAdjust="spacingAndGlyphs" stroke="#dcdcdc" stroke-width="0.3">1</text>
<line x1="38" y1="292.84" x2="44.5" y2="292.84" stroke="#dcdcdc" stroke-width="1.6"/>
<text x="37.5" y="299.76" font-size="17.5" fill="#dcdcdc" text-anchor="end" textLength="8.6" lengthAdjust="spacingAndGlyphs" stroke="#dcdcdc" stroke-width="0.3">2</text>
<line x1="38" y1="224.91" x2="44.5" y2="224.91" stroke="#dcdcdc" stroke-width="1.6"/>
<text x="37.5" y="231.83" font-size="17.5" fill="#dcdcdc" text-anchor="end" textLength="8.6" lengthAdjust="spacingAndGlyphs" stroke="#dcdcdc" stroke-width="0.3">3</text>
<line x1="38" y1="157" x2="44.5" y2="157" stroke="#dcdcdc" stroke-width="1.6"/>
<text x="37.5" y="163.62" font-size="17.5" fill="#dcdcdc" text-anchor="end" textLength="8.6" lengthAdjust="spacingAndGlyphs" stroke="#dcdcdc" stroke-width="0.3">4</text>
<text x="195" y="718.12" font-size="17.5" fill="#dcdcdc" text-anchor="middle" textLength="40.4" lengthAdjust="spacingAndGlyphs" stroke="#dcdcdc" stroke-width="0.3">100%</text>
<rect x="461" y="57.2" width="159" height="326.8" fill="#242424"/>
<text x="525" y="49.8" font-size="18" fill="#dcdcdc" text-anchor="middle" textLength="45.5" lengthAdjust="spacingAndGlyphs" stroke="#dcdcdc" stroke-width="0.3">DeltaL</text>
<line x1="461" y1="112.7" x2="620" y2="112.7" stroke="#a8a8a8" stroke-width="1.6"/>
<line x1="460" y1="110.7" x2="621" y2="110.7" stroke="#d81e1e" stroke-width="2.8"/>
<line x1="461" y1="167.3" x2="620" y2="167.3" stroke="#a8a8a8" stroke-width="1.6"/>
<line x1="460" y1="165.3" x2="621" y2="165.3" stroke="#f0f038" stroke-width="2.5"/>
<line x1="461" y1="276.5" x2="620" y2="276.5" stroke="#a8a8a8" stroke-width="1.6"/>
<line x1="460" y1="274.5" x2="621" y2="274.5" stroke="#f0f038" stroke-width="2.5"/>
<line x1="461" y1="331.1" x2="620" y2="331.1" stroke="#a8a8a8" stroke-width="1.6"/>
<line x1="460" y1="329.1" x2="621" y2="329.1" stroke="#d81e1e" stroke-width="2.8"/>
<line x1="461" y1="221.4" x2="620" y2="221.4" stroke="#a8a8a8" stroke-width="1.8"/>
<line x1="460" y1="187.24" x2="621" y2="187.24" stroke="#0e740e" stroke-width="2.3"/>
<line x1="460" y1="252.76" x2="621" y2="252.76" stroke="#0e740e" stroke-width="2.3"/>
<rect x="477.1" y="220" width="125" height="21.6" fill="url(#v3)" stroke="#000" stroke-width="1.6"/>
<line x1="461" y1="55.5" x2="461" y2="391" stroke="#a8a8a8" stroke-width="1.8"/>
<line x1="620" y1="55.5" x2="620" y2="391" stroke="#a8a8a8" stroke-width="1.8"/>
<line x1="460.1" y1="57" x2="620.9" y2="57" stroke="#a8a8a8" stroke-width="3"/>
<line x1="460.1" y1="384" x2="620.9" y2="384" stroke="#a8a8a8" stroke-width="2.4"/>
<line x1="454.5" y1="57.5" x2="461" y2="57.5" stroke="#dcdcdc" stroke-width="1.6"/>
<text x="453.7" y="64.32" font-size="17.5" fill="#dcdcdc" text-anchor="end" textLength="17.2" lengthAdjust="spacingAndGlyphs" stroke="#dcdcdc" stroke-width="0.3">15</text>
<line x1="454.5" y1="112.7" x2="461" y2="112.7" stroke="#dcdcdc" stroke-width="1.6"/>
<text x="453.7" y="119.52" font-size="17.5" fill="#dcdcdc" text-anchor="end" textLength="17.2" lengthAdjust="spacingAndGlyphs" stroke="#dcdcdc" stroke-width="0.3">10</text>
<line x1="454.5" y1="167.3" x2="461" y2="167.3" stroke="#dcdcdc" stroke-width="1.6"/>
<text x="453.7" y="174.12" font-size="17.5" fill="#dcdcdc" text-anchor="end" textLength="8.6" lengthAdjust="spacingAndGlyphs" stroke="#dcdcdc" stroke-width="0.3">5</text>
<line x1="454.5" y1="221.4" x2="461" y2="221.4" stroke="#dcdcdc" stroke-width="1.6"/>
<text x="453.7" y="228.22" font-size="17.5" fill="#dcdcdc" text-anchor="end" textLength="8.6" lengthAdjust="spacingAndGlyphs" stroke="#dcdcdc" stroke-width="0.3">0</text>
<line x1="454.5" y1="276.5" x2="461" y2="276.5" stroke="#dcdcdc" stroke-width="1.6"/>
<text x="453.7" y="283.32" font-size="17.5" fill="#dcdcdc" text-anchor="end" textLength="13.6" lengthAdjust="spacingAndGlyphs" stroke="#dcdcdc" stroke-width="0.3">-5</text>
<line x1="454.5" y1="331.1" x2="461" y2="331.1" stroke="#dcdcdc" stroke-width="1.6"/>
<text x="453.7" y="337.92" font-size="17.5" fill="#dcdcdc" text-anchor="end" textLength="22.2" lengthAdjust="spacingAndGlyphs" stroke="#dcdcdc" stroke-width="0.3">-10</text>
<line x1="454.5" y1="384" x2="461" y2="384" stroke="#dcdcdc" stroke-width="1.6"/>
<text x="453.7" y="390.82" font-size="17.5" fill="#dcdcdc" text-anchor="end" textLength="22.2" lengthAdjust="spacingAndGlyphs" stroke="#dcdcdc" stroke-width="0.3">-15</text>
<text x="541" y="403.62" font-size="17.5" fill="#dcdcdc" text-anchor="middle" textLength="40.4" lengthAdjust="spacingAndGlyphs" stroke="#dcdcdc" stroke-width="0.3">100%</text>
<rect x="680.6" y="57.2" width="159" height="326.8" fill="#242424"/>
<text x="744.6" y="49.8" font-size="18" fill="#dcdcdc" text-anchor="middle" textLength="48" lengthAdjust="spacingAndGlyphs" stroke="#dcdcdc" stroke-width="0.3">DeltaC</text>
<line x1="680.6" y1="112.7" x2="839.6" y2="112.7" stroke="#a8a8a8" stroke-width="1.6"/>
<line x1="679.6" y1="110.7" x2="840.6" y2="110.7" stroke="#d81e1e" stroke-width="2.8"/>
<line x1="680.6" y1="167.3" x2="839.6" y2="167.3" stroke="#a8a8a8" stroke-width="1.6"/>
<line x1="679.6" y1="165.3" x2="840.6" y2="165.3" stroke="#f0f038" stroke-width="2.5"/>
<line x1="680.6" y1="276.5" x2="839.6" y2="276.5" stroke="#a8a8a8" stroke-width="1.6"/>
<line x1="679.6" y1="274.5" x2="840.6" y2="274.5" stroke="#f0f038" stroke-width="2.5"/>
<line x1="680.6" y1="331.1" x2="839.6" y2="331.1" stroke="#a8a8a8" stroke-width="1.6"/>
<line x1="679.6" y1="329.1" x2="840.6" y2="329.1" stroke="#d81e1e" stroke-width="2.8"/>
<line x1="680.6" y1="221.4" x2="839.6" y2="221.4" stroke="#a8a8a8" stroke-width="1.8"/>
<line x1="679.6" y1="187.24" x2="840.6" y2="187.24" stroke="#0e740e" stroke-width="2.3"/>
<line x1="679.6" y1="252.76" x2="840.6" y2="252.76" stroke="#0e740e" stroke-width="2.3"/>
<rect x="696.7" y="220" width="125" height="4.6" fill="url(#v4)" stroke="#000" stroke-width="1.6"/>
<line x1="680.6" y1="55.5" x2="680.6" y2="391" stroke="#a8a8a8" stroke-width="1.8"/>
<line x1="839.6" y1="55.5" x2="839.6" y2="391" stroke="#a8a8a8" stroke-width="1.8"/>
<line x1="679.7" y1="57" x2="840.5" y2="57" stroke="#a8a8a8" stroke-width="3"/>
<line x1="679.7" y1="384" x2="840.5" y2="384" stroke="#a8a8a8" stroke-width="2.4"/>
<line x1="674.1" y1="57.5" x2="680.6" y2="57.5" stroke="#dcdcdc" stroke-width="1.6"/>
<text x="673.3" y="64.32" font-size="17.5" fill="#dcdcdc" text-anchor="end" textLength="17.2" lengthAdjust="spacingAndGlyphs" stroke="#dcdcdc" stroke-width="0.3">15</text>
<line x1="674.1" y1="112.7" x2="680.6" y2="112.7" stroke="#dcdcdc" stroke-width="1.6"/>
<text x="673.3" y="119.52" font-size="17.5" fill="#dcdcdc" text-anchor="end" textLength="17.2" lengthAdjust="spacingAndGlyphs" stroke="#dcdcdc" stroke-width="0.3">10</text>
<line x1="674.1" y1="167.3" x2="680.6" y2="167.3" stroke="#dcdcdc" stroke-width="1.6"/>
<text x="673.3" y="174.12" font-size="17.5" fill="#dcdcdc" text-anchor="end" textLength="8.6" lengthAdjust="spacingAndGlyphs" stroke="#dcdcdc" stroke-width="0.3">5</text>
<line x1="674.1" y1="221.4" x2="680.6" y2="221.4" stroke="#dcdcdc" stroke-width="1.6"/>
<text x="673.3" y="228.22" font-size="17.5" fill="#dcdcdc" text-anchor="end" textLength="8.6" lengthAdjust="spacingAndGlyphs" stroke="#dcdcdc" stroke-width="0.3">0</text>
<line x1="674.1" y1="276.5" x2="680.6" y2="276.5" stroke="#dcdcdc" stroke-width="1.6"/>
<text x="673.3" y="283.32" font-size="17.5" fill="#dcdcdc" text-anchor="end" textLength="13.6" lengthAdjust="spacingAndGlyphs" stroke="#dcdcdc" stroke-width="0.3">-5</text>
<line x1="674.1" y1="331.1" x2="680.6" y2="331.1" stroke="#dcdcdc" stroke-width="1.6"/>
<text x="673.3" y="337.92" font-size="17.5" fill="#dcdcdc" text-anchor="end" textLength="22.2" lengthAdjust="spacingAndGlyphs" stroke="#dcdcdc" stroke-width="0.3">-10</text>
<line x1="674.1" y1="384" x2="680.6" y2="384" stroke="#dcdcdc" stroke-width="1.6"/>
<text x="673.3" y="390.82" font-size="17.5" fill="#dcdcdc" text-anchor="end" textLength="22.2" lengthAdjust="spacingAndGlyphs" stroke="#dcdcdc" stroke-width="0.3">-15</text>
<text x="760.6" y="403.62" font-size="17.5" fill="#dcdcdc" text-anchor="middle" textLength="40.4" lengthAdjust="spacingAndGlyphs" stroke="#dcdcdc" stroke-width="0.3">100%</text>
<rect x="900.2" y="57.2" width="159" height="326.8" fill="#242424"/>
<text x="964.2" y="49.8" font-size="18" fill="#dcdcdc" text-anchor="middle" textLength="48" lengthAdjust="spacingAndGlyphs" stroke="#dcdcdc" stroke-width="0.3">DeltaH</text>
<line x1="900.2" y1="112.7" x2="1059.2" y2="112.7" stroke="#a8a8a8" stroke-width="1.6"/>
<line x1="899.2" y1="110.7" x2="1060.2" y2="110.7" stroke="#d81e1e" stroke-width="2.8"/>
<line x1="900.2" y1="167.3" x2="1059.2" y2="167.3" stroke="#a8a8a8" stroke-width="1.6"/>
<line x1="899.2" y1="165.3" x2="1060.2" y2="165.3" stroke="#f0f038" stroke-width="2.5"/>
<line x1="900.2" y1="276.5" x2="1059.2" y2="276.5" stroke="#a8a8a8" stroke-width="1.6"/>
<line x1="899.2" y1="274.5" x2="1060.2" y2="274.5" stroke="#f0f038" stroke-width="2.5"/>
<line x1="900.2" y1="331.1" x2="1059.2" y2="331.1" stroke="#a8a8a8" stroke-width="1.6"/>
<line x1="899.2" y1="329.1" x2="1060.2" y2="329.1" stroke="#d81e1e" stroke-width="2.8"/>
<line x1="900.2" y1="221.4" x2="1059.2" y2="221.4" stroke="#a8a8a8" stroke-width="1.8"/>
<line x1="899.2" y1="187.24" x2="1060.2" y2="187.24" stroke="#0e740e" stroke-width="2.3"/>
<line x1="899.2" y1="252.76" x2="1060.2" y2="252.76" stroke="#0e740e" stroke-width="2.3"/>
<rect x="916.3" y="220" width="125" height="28.2" fill="url(#v5)" stroke="#000" stroke-width="1.6"/>
<line x1="900.2" y1="55.5" x2="900.2" y2="391" stroke="#a8a8a8" stroke-width="1.8"/>
<line x1="1059.2" y1="55.5" x2="1059.2" y2="391" stroke="#a8a8a8" stroke-width="1.8"/>
<line x1="899.3" y1="57" x2="1060.1" y2="57" stroke="#a8a8a8" stroke-width="3"/>
<line x1="899.3" y1="384" x2="1060.1" y2="384" stroke="#a8a8a8" stroke-width="2.4"/>
<line x1="893.7" y1="57.5" x2="900.2" y2="57.5" stroke="#dcdcdc" stroke-width="1.6"/>
<text x="892.9" y="64.32" font-size="17.5" fill="#dcdcdc" text-anchor="end" textLength="17.2" lengthAdjust="spacingAndGlyphs" stroke="#dcdcdc" stroke-width="0.3">15</text>
<line x1="893.7" y1="112.7" x2="900.2" y2="112.7" stroke="#dcdcdc" stroke-width="1.6"/>
<text x="892.9" y="119.52" font-size="17.5" fill="#dcdcdc" text-anchor="end" textLength="17.2" lengthAdjust="spacingAndGlyphs" stroke="#dcdcdc" stroke-width="0.3">10</text>
<line x1="893.7" y1="167.3" x2="900.2" y2="167.3" stroke="#dcdcdc" stroke-width="1.6"/>
<text x="892.9" y="174.12" font-size="17.5" fill="#dcdcdc" text-anchor="end" textLength="8.6" lengthAdjust="spacingAndGlyphs" stroke="#dcdcdc" stroke-width="0.3">5</text>
<line x1="893.7" y1="221.4" x2="900.2" y2="221.4" stroke="#dcdcdc" stroke-width="1.6"/>
<text x="892.9" y="228.22" font-size="17.5" fill="#dcdcdc" text-anchor="end" textLength="8.6" lengthAdjust="spacingAndGlyphs" stroke="#dcdcdc" stroke-width="0.3">0</text>
<line x1="893.7" y1="276.5" x2="900.2" y2="276.5" stroke="#dcdcdc" stroke-width="1.6"/>
<text x="892.9" y="283.32" font-size="17.5" fill="#dcdcdc" text-anchor="end" textLength="13.6" lengthAdjust="spacingAndGlyphs" stroke="#dcdcdc" stroke-width="0.3">-5</text>
<line x1="893.7" y1="331.1" x2="900.2" y2="331.1" stroke="#dcdcdc" stroke-width="1.6"/>
<text x="892.9" y="337.92" font-size="17.5" fill="#dcdcdc" text-anchor="end" textLength="22.2" lengthAdjust="spacingAndGlyphs" stroke="#dcdcdc" stroke-width="0.3">-10</text>
<line x1="893.7" y1="384" x2="900.2" y2="384" stroke="#dcdcdc" stroke-width="1.6"/>
<text x="892.9" y="390.82" font-size="17.5" fill="#dcdcdc" text-anchor="end" textLength="22.2" lengthAdjust="spacingAndGlyphs" stroke="#dcdcdc" stroke-width="0.3">-15</text>
<text x="980.2" y="403.62" font-size="17.5" fill="#dcdcdc" text-anchor="middle" textLength="40.4" lengthAdjust="spacingAndGlyphs" stroke="#dcdcdc" stroke-width="0.3">100%</text>
<rect x="384" y="423.5" width="713.5" height="198.4" fill="#000"/>
<rect x="408.4" y="432.5" width="119.2" height="70.2" fill="#c1bb9e" stroke="#fafaf0" stroke-width="1.8"/>
<rect x="408.4" y="523.4" width="119.2" height="69.8" fill="#c3c4a8" stroke="#fafaf0" stroke-width="1.8"/>
<text x="468.2" y="611.4" font-size="14.6" fill="#fff" text-anchor="middle" textLength="26.7" lengthAdjust="spacingAndGlyphs" stroke="#fff" stroke-width="0.3">20%</text>
<rect x="547.95" y="432.5" width="119.2" height="70.2" fill="#c1bd80" stroke="#fafaf0" stroke-width="1.8"/>
<rect x="547.95" y="523.4" width="119.2" height="69.8" fill="#c4c388" stroke="#fafaf0" stroke-width="1.8"/>
<text x="607.75" y="611.4" font-size="14.6" fill="#fff" text-anchor="middle" textLength="26.7" lengthAdjust="spacingAndGlyphs" stroke="#fff" stroke-width="0.3">40%</text>
<rect x="687.5" y="432.5" width="119.2" height="70.2" fill="#c2bb5e" stroke="#fafaf0" stroke-width="1.8"/>
<rect x="687.5" y="523.4" width="119.2" height="69.8" fill="#c4c366" stroke="#fafaf0" stroke-width="1.8"/>
<text x="747.3" y="611.4" font-size="14.6" fill="#fff" text-anchor="middle" textLength="26.7" lengthAdjust="spacingAndGlyphs" stroke="#fff" stroke-width="0.3">60%</text>
<rect x="827.05" y="432.5" width="119.2" height="70.2" fill="#c3b833" stroke="#fafaf0" stroke-width="1.8"/>
<rect x="827.05" y="523.4" width="119.2" height="69.8" fill="#c5c33f" stroke="#fafaf0" stroke-width="1.8"/>
<text x="886.85" y="611.4" font-size="14.6" fill="#fff" text-anchor="middle" textLength="26.7" lengthAdjust="spacingAndGlyphs" stroke="#fff" stroke-width="0.3">80%</text>
<rect x="966.6" y="432.5" width="119.2" height="70.2" fill="#c5bd05" stroke="#fafaf0" stroke-width="1.8"/>
<rect x="966.6" y="523.4" width="119.2" height="69.8" fill="#c8c600" stroke="#fafaf0" stroke-width="1.8"/>
<text x="1026.4" y="611.4" font-size="14.6" fill="#fff" text-anchor="middle" textLength="34.2" lengthAdjust="spacingAndGlyphs" stroke="#fff" stroke-width="0.3">100%</text>
<text transform="translate(399.8 488.7) rotate(-90)" font-size="15" fill="#fff" stroke="#fff" stroke-width="0.35" textLength="41.5" lengthAdjust="spacingAndGlyphs">Actual</text>
<text transform="translate(399.8 578.4) rotate(-90)" font-size="15" fill="#fff" stroke="#fff" stroke-width="0.35" textLength="41" lengthAdjust="spacingAndGlyphs">Target</text>
<rect x="401" y="661.6" width="697" height="301.5" fill="#242424"/>
<text x="737" y="653.6" font-size="18" fill="#dcdcdc" text-anchor="middle" textLength="92" lengthAdjust="spacingAndGlyphs" stroke="#dcdcdc" stroke-width="0.3">DeltaE 2000</text>
<rect x="476.2" y="936.1" width="8.6" height="28" fill="url(#v6)" stroke="#000" stroke-width="1.6"/>
<rect x="577.5" y="894.9" width="7.9" height="69" fill="url(#v7)" stroke="#000" stroke-width="1.3"/>
<rect x="610.35" y="879.35" width="7.9" height="84.4" fill="url(#v8)" stroke="#000" stroke-width="1.3"/>
<rect x="621.32" y="931.25" width="7.9" height="32.5" fill="url(#v9)" stroke="#000" stroke-width="1.3"/>
<rect x="632.29" y="881.25" width="7.9" height="82.5" fill="url(#v10)" stroke="#000" stroke-width="1.3"/>
<rect x="643.26" y="920.45" width="7.9" height="43.3" fill="url(#v11)" stroke="#000" stroke-width="1.3"/>
<rect x="654.23" y="893.05" width="7.9" height="70.7" fill="url(#v12)" stroke="#000" stroke-width="1.3"/>
<rect x="665.2" y="908.45" width="7.9" height="55.3" fill="url(#v13)" stroke="#000" stroke-width="1.3"/>
<rect x="709.95" y="873.65" width="7.9" height="90.1" fill="url(#v14)" stroke="#000" stroke-width="1.3"/>
<rect x="720.92" y="925.05" width="7.9" height="38.7" fill="url(#v15)" stroke="#000" stroke-width="1.3"/>
<rect x="731.89" y="864.25" width="7.9" height="99.5" fill="url(#v16)" stroke="#000" stroke-width="1.3"/>
<rect x="742.86" y="926.75" width="7.9" height="37" fill="url(#v17)" stroke="#000" stroke-width="1.3"/>
<rect x="753.83" y="888.25" width="7.9" height="75.5" fill="url(#v18)" stroke="#000" stroke-width="1.3"/>
<rect x="764.8" y="920.65" width="7.9" height="43.1" fill="url(#v19)" stroke="#000" stroke-width="1.3"/>
<rect x="810.15" y="881.25" width="7.9" height="82.5" fill="url(#v20)" stroke="#000" stroke-width="1.3"/>
<rect x="821.12" y="931.55" width="7.9" height="32.2" fill="url(#v21)" stroke="#000" stroke-width="1.3"/>
<rect x="832.09" y="868.85" width="7.9" height="94.9" fill="url(#v22)" stroke="#000" stroke-width="1.3"/>
<rect x="843.06" y="928.35" width="7.9" height="35.4" fill="url(#v23)" stroke="#000" stroke-width="1.3"/>
<rect x="854.03" y="884.95" width="7.9" height="78.8" fill="url(#v24)" stroke="#000" stroke-width="1.3"/>
<rect x="865" y="920.65" width="7.9" height="43.1" fill="url(#v25)" stroke="#000" stroke-width="1.3"/>
<rect x="909.45" y="899.85" width="7.9" height="63.9" fill="url(#v26)" stroke="#000" stroke-width="1.3"/>
<rect x="920.42" y="939.95" width="7.9" height="23.8" fill="url(#v27)" stroke="#000" stroke-width="1.3"/>
<rect x="931.39" y="901.65" width="7.9" height="62.1" fill="url(#v28)" stroke="#000" stroke-width="1.3"/>
<rect x="942.36" y="933.35" width="7.9" height="30.4" fill="url(#v29)" stroke="#000" stroke-width="1.3"/>
<rect x="953.33" y="893.35" width="7.9" height="70.4" fill="url(#v30)" stroke="#000" stroke-width="1.3"/>
<rect x="964.3" y="922.15" width="7.9" height="41.6" fill="url(#v31)" stroke="#000" stroke-width="1.3"/>
<rect x="1009.65" y="910.15" width="7.9" height="53.6" fill="url(#v32)" stroke="#000" stroke-width="1.3"/>
<rect x="1020.62" y="938.55" width="7.9" height="25.2" fill="url(#v33)" stroke="#000" stroke-width="1.3"/>
<rect x="1031.59" y="946.95" width="7.9" height="16.8" fill="url(#v34)" stroke="#000" stroke-width="1.3"/>
<rect x="1042.56" y="941.45" width="7.9" height="22.3" fill="url(#v35)" stroke="#000" stroke-width="1.3"/>
<rect x="1053.53" y="916.75" width="7.9" height="47" fill="url(#v36)" stroke="#000" stroke-width="1.3"/>
<rect x="1064.5" y="925.05" width="7.9" height="38.7" fill="url(#v37)" stroke="#000" stroke-width="1.3"/>
<line x1="401" y1="763.6" x2="1098" y2="763.6" stroke="#a8a8a8" stroke-width="1.6"/>
<line x1="400" y1="761.2" x2="1099" y2="761.2" stroke="#d81e1e" stroke-width="2.9"/>
<line x1="401" y1="864.2" x2="1098" y2="864.2" stroke="#a8a8a8" stroke-width="1.6"/>
<line x1="400" y1="862.6" x2="1099" y2="862.6" stroke="#f0f038" stroke-width="2.2"/>
<line x1="400" y1="903.3" x2="1099" y2="903.3" stroke="#0f780f" stroke-width="2.4"/>
<line x1="401" y1="659.9" x2="401" y2="970.1" stroke="#a8a8a8" stroke-width="1.8"/>
<line x1="1098" y1="659.9" x2="1098" y2="970.1" stroke="#a8a8a8" stroke-width="1.8"/>
<line x1="400.1" y1="661.4" x2="1098.9" y2="661.4" stroke="#a8a8a8" stroke-width="3"/>
<line x1="400.1" y1="963.1" x2="1098.9" y2="963.1" stroke="#a8a8a8" stroke-width="2.4"/>
<line x1="394.5" y1="661.8" x2="401" y2="661.8" stroke="#dcdcdc" stroke-width="1.6"/>
<text x="393.7" y="668.72" font-size="17.5" fill="#dcdcdc" text-anchor="end" textLength="17.2" lengthAdjust="spacingAndGlyphs" stroke="#dcdcdc" stroke-width="0.3">15</text>
<line x1="394.5" y1="763" x2="401" y2="763" stroke="#dcdcdc" stroke-width="1.6"/>
<text x="393.7" y="769.92" font-size="17.5" fill="#dcdcdc" text-anchor="end" textLength="17.2" lengthAdjust="spacingAndGlyphs" stroke="#dcdcdc" stroke-width="0.3">10</text>
<line x1="394.5" y1="863.8" x2="401" y2="863.8" stroke="#dcdcdc" stroke-width="1.6"/>
<text x="393.7" y="870.72" font-size="17.5" fill="#dcdcdc" text-anchor="end" textLength="8.6" lengthAdjust="spacingAndGlyphs" stroke="#dcdcdc" stroke-width="0.3">5</text>
<line x1="394.5" y1="963.1" x2="401" y2="963.1" stroke="#dcdcdc" stroke-width="1.6"/>
<text x="393.7" y="970.02" font-size="17.5" fill="#dcdcdc" text-anchor="end" textLength="8.6" lengthAdjust="spacingAndGlyphs" stroke="#dcdcdc" stroke-width="0.3">0</text>
<text x="450.486" y="983.32" font-size="17.5" fill="#dcdcdc" text-anchor="middle" textLength="8.6" lengthAdjust="spacingAndGlyphs" stroke="#dcdcdc" stroke-width="0.3">0</text>
<line x1="500.571" y1="963.1" x2="500.571" y2="970.1" stroke="#a8a8a8" stroke-width="1.8"/>
<text x="550.057" y="983.32" font-size="17.5" fill="#dcdcdc" text-anchor="middle" textLength="25.8" lengthAdjust="spacingAndGlyphs" stroke="#dcdcdc" stroke-width="0.3">100</text>
<line x1="600.143" y1="963.1" x2="600.143" y2="970.1" stroke="#a8a8a8" stroke-width="1.8"/>
<text x="649.629" y="983.32" font-size="17.5" fill="#dcdcdc" text-anchor="middle" textLength="31.8" lengthAdjust="spacingAndGlyphs" stroke="#dcdcdc" stroke-width="0.3">20%</text>
<line x1="699.714" y1="963.1" x2="699.714" y2="970.1" stroke="#a8a8a8" stroke-width="1.8"/>
<text x="749.2" y="983.32" font-size="17.5" fill="#dcdcdc" text-anchor="middle" textLength="31.8" lengthAdjust="spacingAndGlyphs" stroke="#dcdcdc" stroke-width="0.3">40%</text>
<line x1="799.286" y1="963.1" x2="799.286" y2="970.1" stroke="#a8a8a8" stroke-width="1.8"/>
<text x="848.771" y="983.32" font-size="17.5" fill="#dcdcdc" text-anchor="middle" textLength="31.8" lengthAdjust="spacingAndGlyphs" stroke="#dcdcdc" stroke-width="0.3">60%</text>
<line x1="898.857" y1="963.1" x2="898.857" y2="970.1" stroke="#a8a8a8" stroke-width="1.8"/>
<text x="948.343" y="983.32" font-size="17.5" fill="#dcdcdc" text-anchor="middle" textLength="31.8" lengthAdjust="spacingAndGlyphs" stroke="#dcdcdc" stroke-width="0.3">80%</text>
<line x1="998.429" y1="963.1" x2="998.429" y2="970.1" stroke="#a8a8a8" stroke-width="1.8"/>
<text x="1047.91" y="983.32" font-size="17.5" fill="#dcdcdc" text-anchor="middle" textLength="40.4" lengthAdjust="spacingAndGlyphs" stroke="#dcdcdc" stroke-width="0.3">100%</text>
<text x="16.3" y="768.7" font-size="37" fill="#f2f2f2" textLength="251.5" lengthAdjust="spacingAndGlyphs">Current Reading</text>
<text x="16.3" y="819.5" font-size="31.2" fill="#f2f2f2" textLength="117.5" lengthAdjust="spacingAndGlyphs">x: 0,4324</text>
<text x="16.3" y="869.6" font-size="31.2" fill="#f2f2f2" textLength="118" lengthAdjust="spacingAndGlyphs">y: 0,5134</text>
<text x="16.3" y="918.9" font-size="31.2" fill="#f2f2f2" textLength="126.7" lengthAdjust="spacingAndGlyphs">fL: 50,741</text>
<text x="16.3" y="968.8" font-size="31.2" fill="#f2f2f2" textLength="198.8" lengthAdjust="spacingAndGlyphs">cd/m²: 173,852</text>
<rect x="1348" y="740" width="337" height="228" fill="#000"/>
<rect x="1120.5" y="17.7" width="796.7" height="695.1" fill="#000"/>
<rect x="1128.5" y="26" width="783.4" height="679" fill="#323232"/>
<rect x="1162.6" y="54.6" width="745.4" height="615.2" fill="#242424"/>
<text x="1520" y="48" font-size="18" fill="#dcdcdc" text-anchor="middle" textLength="88" lengthAdjust="spacingAndGlyphs" stroke="#dcdcdc" stroke-width="0.3">CIE 1931 xy</text>
<g clip-path="url(#ch)"><g filter="url(#vb)">
<rect x="1216" y="62" width="47" height="12.4" fill="#007e00"/>
<rect x="1208" y="74" width="68" height="4.4" fill="#007e01"/>
<rect x="1203" y="78" width="84" height="4.4" fill="#007e01"/>
<rect x="1198" y="82" width="99" height="4.4" fill="#007e01"/>
<rect x="1194" y="86" width="112" height="4.4" fill="#007e02"/>
<rect x="1191" y="90" width="124" height="4.4" fill="#007e02"/>
<rect x="1188" y="94" width="136" height="4.4" fill="#007e02"/>
<rect x="1185" y="98" width="147" height="4.4" fill="url(#h7)"/>
<rect x="1183" y="102" width="157" height="4.4" fill="url(#h8)"/>
<rect x="1181" y="106" width="166" height="4.4" fill="url(#h9)"/>
<rect x="1179" y="110" width="175" height="4.4" fill="url(#h10)"/>
<rect x="1177" y="114" width="185" height="4.4" fill="url(#h11)"/>
<rect x="1175" y="118" width="194" height="4.4" fill="url(#h12)"/>
<rect x="1174" y="122" width="202" height="4.4" fill="url(#h13)"/>
<rect x="1172" y="126" width="212" height="4.4" fill="url(#h14)"/>
<rect x="1171" y="130" width="220" height="4.4" fill="url(#h15)"/>
<rect x="1170" y="134" width="227" height="4.4" fill="url(#h16)"/>
<rect x="1169" y="138" width="235" height="4.4" fill="url(#h17)"/>
<rect x="1168" y="142" width="242" height="4.4" fill="url(#h18)"/>
<rect x="1167" y="146" width="250" height="4.4" fill="url(#h19)"/>
<rect x="1166" y="150" width="256" height="4.4" fill="url(#h20)"/>
<rect x="1165" y="154" width="263" height="4.4" fill="url(#h21)"/>
<rect x="1165" y="158" width="268" height="4.4" fill="url(#h22)"/>
<rect x="1164" y="162" width="275" height="4.4" fill="url(#h23)"/>
<rect x="1164" y="166" width="280" height="4.4" fill="url(#h24)"/>
<rect x="1163" y="170" width="286" height="4.4" fill="url(#h25)"/>
<rect x="1163" y="174" width="291" height="4.4" fill="url(#h26)"/>
<rect x="1163" y="178" width="297" height="4.4" fill="url(#h27)"/>
<rect x="1163" y="182" width="302" height="4.4" fill="url(#h28)"/>
<rect x="1163" y="186" width="307" height="4.4" fill="url(#h29)"/>
<rect x="1163" y="190" width="313" height="4.4" fill="url(#h30)"/>
<rect x="1164" y="194" width="317" height="4.4" fill="url(#h31)"/>
<rect x="1164" y="198" width="322" height="4.4" fill="url(#h32)"/>
<rect x="1164" y="202" width="328" height="4.4" fill="url(#h33)"/>
<rect x="1164" y="206" width="333" height="4.4" fill="url(#h34)"/>
<rect x="1164" y="210" width="338" height="4.4" fill="url(#h35)"/>
<rect x="1164" y="214" width="344" height="4.4" fill="url(#h36)"/>
<rect x="1164" y="218" width="349" height="4.4" fill="url(#h37)"/>
<rect x="1164" y="222" width="355" height="4.4" fill="url(#h38)"/>
<rect x="1164" y="226" width="360" height="4.4" fill="url(#h39)"/>
<rect x="1165" y="230" width="364" height="4.4" fill="url(#h40)"/>
<rect x="1165" y="234" width="369" height="4.4" fill="url(#h41)"/>
<rect x="1165" y="238" width="375" height="4.4" fill="url(#h42)"/>
<rect x="1165" y="242" width="380" height="4.4" fill="url(#h43)"/>
<rect x="1165" y="246" width="385" height="4.4" fill="url(#h44)"/>
<rect x="1166" y="250" width="388" height="4.4" fill="url(#h45)"/>
<rect x="1166" y="254" width="393" height="4.4" fill="url(#h46)"/>
<rect x="1166" y="258" width="398" height="4.4" fill="url(#h47)"/>
<rect x="1166" y="262" width="403" height="4.4" fill="url(#h48)"/>
<rect x="1167" y="266" width="407" height="4.4" fill="url(#h49)"/>
<rect x="1167" y="270" width="412" height="4.4" fill="url(#h50)"/>
<rect x="1167" y="274" width="417" height="4.4" fill="url(#h51)"/>
<rect x="1168" y="278" width="421" height="4.4" fill="url(#h52)"/>
<rect x="1168" y="282" width="426" height="4.4" fill="url(#h53)"/>
<rect x="1169" y="286" width="430" height="4.4" fill="url(#h54)"/>
<rect x="1170" y="290" width="434" height="4.4" fill="url(#h55)"/>
<rect x="1170" y="294" width="439" height="4.4" fill="url(#h56)"/>
<rect x="1171" y="298" width="443" height="4.4" fill="url(#h57)"/>
<rect x="1171" y="302" width="448" height="4.4" fill="url(#h58)"/>
<rect x="1172" y="306" width="452" height="4.4" fill="url(#h59)"/>
<rect x="1173" y="310" width="455" height="4.4" fill="url(#h60)"/>
<rect x="1173" y="314" width="460" height="4.4" fill="url(#h61)"/>
<rect x="1174" y="318" width="464" height="4.4" fill="url(#h62)"/>
<rect x="1175" y="322" width="467" height="4.4" fill="url(#h63)"/>
<rect x="1175" y="326" width="472" height="4.4" fill="url(#h64)"/>
<rect x="1176" y="330" width="476" height="4.4" fill="url(#h65)"/>
<rect x="1177" y="334" width="479" height="4.4" fill="url(#h66)"/>
<rect x="1177" y="338" width="484" height="4.4" fill="url(#h67)"/>
<rect x="1178" y="342" width="488" height="4.4" fill="url(#h68)"/>
<rect x="1179" y="346" width="491" height="4.4" fill="url(#h69)"/>
<rect x="1179" y="350" width="496" height="4.4" fill="url(#h70)"/>
<rect x="1180" y="354" width="500" height="4.4" fill="url(#h71)"/>
<rect x="1181" y="358" width="504" height="4.4" fill="url(#h72)"/>
<rect x="1182" y="362" width="507" height="4.4" fill="url(#h73)"/>
<rect x="1183" y="366" width="511" height="4.4" fill="url(#h74)"/>
<rect x="1184" y="370" width="515" height="4.4" fill="url(#h75)"/>
<rect x="1184" y="374" width="519" height="4.4" fill="url(#h76)"/>
<rect x="1185" y="378" width="523" height="4.4" fill="url(#h77)"/>
<rect x="1186" y="382" width="527" height="4.4" fill="url(#h78)"/>
<rect x="1187" y="386" width="530" height="4.4" fill="url(#h79)"/>
<rect x="1188" y="390" width="534" height="4.4" fill="url(#h80)"/>
<rect x="1189" y="394" width="538" height="4.4" fill="url(#h81)"/>
<rect x="1190" y="398" width="542" height="4.4" fill="url(#h82)"/>
<rect x="1191" y="402" width="545" height="4.4" fill="url(#h83)"/>
<rect x="1192" y="406" width="549" height="4.4" fill="url(#h84)"/>
<rect x="1193" y="410" width="553" height="4.4" fill="url(#h85)"/>
<rect x="1194" y="414" width="557" height="4.4" fill="url(#h86)"/>
<rect x="1195" y="418" width="560" height="4.4" fill="url(#h87)"/>
<rect x="1196" y="422" width="564" height="4.4" fill="url(#h88)"/>
<rect x="1197" y="426" width="568" height="4.4" fill="url(#h89)"/>
<rect x="1198" y="430" width="571" height="4.4" fill="url(#h90)"/>
<rect x="1199" y="434" width="575" height="4.4" fill="url(#h91)"/>
<rect x="1200" y="438" width="578" height="4.4" fill="url(#h92)"/>
<rect x="1202" y="442" width="581" height="4.4" fill="url(#h93)"/>
<rect x="1203" y="446" width="584" height="4.4" fill="url(#h94)"/>
<rect x="1204" y="450" width="588" height="4.4" fill="url(#h95)"/>
<rect x="1205" y="454" width="591" height="4.4" fill="url(#h96)"/>
<rect x="1206" y="458" width="595" height="4.4" fill="url(#h97)"/>
<rect x="1208" y="462" width="594" height="4.4" fill="url(#h98)"/>
<rect x="1209" y="466" width="587" height="4.4" fill="url(#h99)"/>
<rect x="1210" y="470" width="576" height="4.4" fill="url(#h100)"/>
<rect x="1212" y="474" width="564" height="4.4" fill="url(#h101)"/>
<rect x="1213" y="478" width="553" height="4.4" fill="url(#h102)"/>
<rect x="1215" y="482" width="541" height="4.4" fill="url(#h103)"/>
<rect x="1216" y="486" width="530" height="4.4" fill="url(#h104)"/>
<rect x="1217" y="490" width="519" height="4.4" fill="url(#h105)"/>
<rect x="1219" y="494" width="507" height="4.4" fill="url(#h106)"/>
<rect x="1221" y="498" width="496" height="4.4" fill="url(#h107)"/>
<rect x="1222" y="502" width="485" height="4.4" fill="url(#h108)"/>
<rect x="1224" y="506" width="473" height="4.4" fill="url(#h109)"/>
<rect x="1225" y="510" width="462" height="4.4" fill="url(#h110)"/>
<rect x="1227" y="514" width="450" height="4.4" fill="url(#h111)"/>
<rect x="1229" y="518" width="438" height="4.4" fill="url(#h112)"/>
<rect x="1231" y="522" width="426" height="4.4" fill="url(#h113)"/>
<rect x="1232" y="526" width="415" height="4.4" fill="url(#h114)"/>
<rect x="1234" y="530" width="403" height="4.4" fill="url(#h115)"/>
<rect x="1236" y="534" width="391" height="4.4" fill="url(#h116)"/>
<rect x="1238" y="538" width="379" height="4.4" fill="url(#h117)"/>
<rect x="1240" y="542" width="367" height="4.4" fill="url(#h118)"/>
<rect x="1242" y="546" width="356" height="4.4" fill="url(#h119)"/>
<rect x="1244" y="550" width="344" height="4.4" fill="url(#h120)"/>
<rect x="1246" y="554" width="332" height="4.4" fill="url(#h121)"/>
<rect x="1249" y="558" width="319" height="4.4" fill="url(#h122)"/>
<rect x="1251" y="562" width="307" height="4.4" fill="url(#h123)"/>
<rect x="1253" y="566" width="295" height="4.4" fill="url(#h124)"/>
<rect x="1255" y="570" width="283" height="4.4" fill="url(#h125)"/>
<rect x="1257" y="574" width="271" height="4.4" fill="url(#h126)"/>
<rect x="1260" y="578" width="258" height="4.4" fill="url(#h127)"/>
<rect x="1262" y="582" width="246" height="4.4" fill="url(#h128)"/>
<rect x="1264" y="586" width="234" height="4.4" fill="url(#h129)"/>
<rect x="1266" y="590" width="223" height="4.4" fill="url(#h130)"/>
<rect x="1268" y="594" width="211" height="4.4" fill="url(#h131)"/>
<rect x="1270" y="598" width="199" height="4.4" fill="url(#h132)"/>
<rect x="1272" y="602" width="187" height="4.4" fill="url(#h133)"/>
<rect x="1275" y="606" width="174" height="4.4" fill="url(#h134)"/>
<rect x="1277" y="610" width="162" height="4.4" fill="url(#h135)"/>
<rect x="1279" y="614" width="150" height="4.4" fill="url(#h136)"/>
<rect x="1281" y="618" width="138" height="4.4" fill="url(#h137)"/>
<rect x="1283" y="622" width="126" height="4.4" fill="url(#h138)"/>
<rect x="1285" y="626" width="114" height="4.4" fill="url(#h139)"/>
<rect x="1287" y="630" width="102" height="4.4" fill="url(#h140)"/>
<rect x="1289" y="634" width="91" height="4.4" fill="url(#h141)"/>
<rect x="1291" y="638" width="79" height="4.4" fill="url(#h142)"/>
<rect x="1293" y="642" width="67" height="4.4" fill="url(#h143)"/>
<rect x="1296" y="646" width="54" height="4.4" fill="url(#h144)"/>
<rect x="1299" y="650" width="41" height="4.4" fill="url(#h145)"/>
<rect x="1303" y="654" width="26" height="12.4" fill="url(#h146)"/>
</g></g>
<g clip-path="url(#ct)"><g filter="url(#vb)">
<rect x="1345" y="140" width="9" height="12.4" fill="#00d400"/>
<rect x="1345" y="152" width="15" height="4.4" fill="#00d700"/>
<rect x="1344" y="156" width="21" height="4.4" fill="#00da00"/>
<rect x="1344" y="160" width="27" height="4.4" fill="url(#t3)"/>
<rect x="1343" y="164" width="33" height="4.4" fill="url(#t4)"/>
<rect x="1343" y="168" width="39" height="4.4" fill="url(#t5)"/>
<rect x="1342" y="172" width="45" height="4.4" fill="url(#t6)"/>
<rect x="1342" y="176" width="51" height="4.4" fill="url(#t7)"/>
<rect x="1341" y="180" width="57" height="4.4" fill="url(#t8)"/>
<rect x="1341" y="184" width="63" height="4.4" fill="url(#t9)"/>
<rect x="1341" y="188" width="68" height="4.4" fill="url(#t10)"/>
<rect x="1340" y="192" width="75" height="4.4" fill="url(#t11)"/>
<rect x="1340" y="196" width="80" height="4.4" fill="url(#t12)"/>
<rect x="1339" y="200" width="86" height="4.4" fill="url(#t13)"/>
<rect x="1339" y="204" width="92" height="4.4" fill="url(#t14)"/>
<rect x="1338" y="208" width="98" height="4.4" fill="url(#t15)"/>
<rect x="1338" y="212" width="104" height="4.4" fill="url(#t16)"/>
<rect x="1337" y="216" width="110" height="4.4" fill="url(#t17)"/>
<rect x="1337" y="220" width="116" height="4.4" fill="url(#t18)"/>
<rect x="1336" y="224" width="122" height="4.4" fill="url(#t19)"/>
<rect x="1336" y="228" width="128" height="4.4" fill="url(#t20)"/>
<rect x="1336" y="232" width="133" height="4.4" fill="url(#t21)"/>
<rect x="1335" y="236" width="140" height="4.4" fill="url(#t22)"/>
<rect x="1335" y="240" width="145" height="4.4" fill="url(#t23)"/>
<rect x="1334" y="244" width="152" height="4.4" fill="url(#t24)"/>
<rect x="1334" y="248" width="157" height="4.4" fill="url(#t25)"/>
<rect x="1333" y="252" width="164" height="4.4" fill="url(#t26)"/>
<rect x="1333" y="256" width="169" height="4.4" fill="url(#t27)"/>
<rect x="1332" y="260" width="176" height="4.4" fill="url(#t28)"/>
<rect x="1332" y="264" width="181" height="4.4" fill="url(#t29)"/>
<rect x="1332" y="268" width="187" height="4.4" fill="url(#t30)"/>
<rect x="1331" y="272" width="193" height="4.4" fill="url(#t31)"/>
<rect x="1331" y="276" width="199" height="4.4" fill="url(#t32)"/>
<rect x="1330" y="280" width="205" height="4.4" fill="url(#t33)"/>
<rect x="1330" y="284" width="211" height="4.4" fill="url(#t34)"/>
<rect x="1329" y="288" width="217" height="4.4" fill="url(#t35)"/>
<rect x="1329" y="292" width="223" height="4.4" fill="url(#t36)"/>
<rect x="1328" y="296" width="229" height="4.4" fill="url(#t37)"/>
<rect x="1328" y="300" width="235" height="4.4" fill="url(#t38)"/>
<rect x="1328" y="304" width="240" height="4.4" fill="url(#t39)"/>
<rect x="1327" y="308" width="247" height="4.4" fill="url(#t40)"/>
<rect x="1327" y="312" width="252" height="4.4" fill="url(#t41)"/>
<rect x="1326" y="316" width="259" height="4.4" fill="url(#t42)"/>
<rect x="1326" y="320" width="264" height="4.4" fill="url(#t43)"/>
<rect x="1325" y="324" width="271" height="4.4" fill="url(#t44)"/>
<rect x="1325" y="328" width="276" height="4.4" fill="url(#t45)"/>
<rect x="1324" y="332" width="283" height="4.4" fill="url(#t46)"/>
<rect x="1324" y="336" width="288" height="4.4" fill="url(#t47)"/>
<rect x="1324" y="340" width="293" height="4.4" fill="url(#t48)"/>
<rect x="1323" y="344" width="300" height="4.4" fill="url(#t49)"/>
<rect x="1323" y="348" width="305" height="4.4" fill="url(#t50)"/>
<rect x="1322" y="352" width="312" height="4.4" fill="url(#t51)"/>
<rect x="1322" y="356" width="317" height="4.4" fill="url(#t52)"/>
<rect x="1321" y="360" width="324" height="4.4" fill="url(#t53)"/>
<rect x="1321" y="364" width="329" height="4.4" fill="url(#t54)"/>
<rect x="1320" y="368" width="336" height="4.4" fill="url(#t55)"/>
<rect x="1320" y="372" width="341" height="4.4" fill="url(#t56)"/>
<rect x="1319" y="376" width="348" height="4.4" fill="url(#t57)"/>
<rect x="1319" y="380" width="353" height="4.4" fill="url(#t58)"/>
<rect x="1319" y="384" width="359" height="4.4" fill="url(#t59)"/>
<rect x="1318" y="388" width="365" height="4.4" fill="url(#t60)"/>
<rect x="1318" y="392" width="371" height="4.4" fill="url(#t61)"/>
<rect x="1317" y="396" width="377" height="4.4" fill="url(#t62)"/>
<rect x="1317" y="400" width="383" height="4.4" fill="url(#t63)"/>
<rect x="1316" y="404" width="389" height="4.4" fill="url(#t64)"/>
<rect x="1316" y="408" width="395" height="4.4" fill="url(#t65)"/>
<rect x="1315" y="412" width="401" height="4.4" fill="url(#t66)"/>
<rect x="1315" y="416" width="407" height="4.4" fill="url(#t67)"/>
<rect x="1315" y="420" width="412" height="4.4" fill="url(#t68)"/>
<rect x="1314" y="424" width="419" height="4.4" fill="url(#t69)"/>
<rect x="1314" y="428" width="419" height="4.4" fill="url(#t70)"/>
<rect x="1313" y="432" width="412" height="4.4" fill="url(#t71)"/>
<rect x="1313" y="436" width="403" height="4.4" fill="url(#t72)"/>
<rect x="1312" y="440" width="395" height="4.4" fill="url(#t73)"/>
<rect x="1312" y="444" width="386" height="4.4" fill="url(#t74)"/>
<rect x="1311" y="448" width="379" height="4.4" fill="url(#t75)"/>
<rect x="1311" y="452" width="370" height="4.4" fill="url(#t76)"/>
<rect x="1311" y="456" width="361" height="4.4" fill="url(#t77)"/>
<rect x="1310" y="460" width="353" height="4.4" fill="url(#t78)"/>
<rect x="1310" y="464" width="344" height="4.4" fill="url(#t79)"/>
<rect x="1309" y="468" width="337" height="4.4" fill="url(#t80)"/>
<rect x="1309" y="472" width="328" height="4.4" fill="url(#t81)"/>
<rect x="1308" y="476" width="320" height="4.4" fill="url(#t82)"/>
<rect x="1308" y="480" width="311" height="4.4" fill="url(#t83)"/>
<rect x="1307" y="484" width="303" height="4.4" fill="url(#t84)"/>
<rect x="1307" y="488" width="295" height="4.4" fill="url(#t85)"/>
<rect x="1307" y="492" width="286" height="4.4" fill="url(#t86)"/>
<rect x="1306" y="496" width="278" height="4.4" fill="url(#t87)"/>
<rect x="1306" y="500" width="269" height="4.4" fill="url(#t88)"/>
<rect x="1305" y="504" width="261" height="4.4" fill="url(#t89)"/>
<rect x="1305" y="508" width="253" height="4.4" fill="url(#t90)"/>
<rect x="1304" y="512" width="245" height="4.4" fill="url(#t91)"/>
<rect x="1304" y="516" width="236" height="4.4" fill="url(#t92)"/>
<rect x="1303" y="520" width="228" height="4.4" fill="url(#t93)"/>
<rect x="1303" y="524" width="219" height="4.4" fill="url(#t94)"/>
<rect x="1302" y="528" width="212" height="4.4" fill="url(#t95)"/>
<rect x="1302" y="532" width="203" height="4.4" fill="url(#t96)"/>
<rect x="1302" y="536" width="194" height="4.4" fill="url(#t97)"/>
<rect x="1301" y="540" width="186" height="4.4" fill="url(#t98)"/>
<rect x="1301" y="544" width="177" height="4.4" fill="url(#t99)"/>
<rect x="1300" y="548" width="170" height="4.4" fill="url(#t100)"/>
<rect x="1300" y="552" width="161" height="4.4" fill="url(#t101)"/>
<rect x="1299" y="556" width="153" height="4.4" fill="url(#t102)"/>
<rect x="1299" y="560" width="144" height="4.4" fill="url(#t103)"/>
<rect x="1298" y="564" width="136" height="4.4" fill="url(#t104)"/>
<rect x="1298" y="568" width="128" height="4.4" fill="url(#t105)"/>
<rect x="1298" y="572" width="119" height="4.4" fill="url(#t106)"/>
<rect x="1297" y="576" width="111" height="4.4" fill="url(#t107)"/>
<rect x="1297" y="580" width="102" height="4.4" fill="url(#t108)"/>
<rect x="1296" y="584" width="94" height="4.4" fill="url(#t109)"/>
<rect x="1296" y="588" width="86" height="4.4" fill="url(#t110)"/>
<rect x="1295" y="592" width="78" height="4.4" fill="url(#t111)"/>
<rect x="1295" y="596" width="69" height="4.4" fill="url(#t112)"/>
<rect x="1294" y="600" width="61" height="4.4" fill="url(#t113)"/>
<rect x="1294" y="604" width="52" height="4.4" fill="url(#t114)"/>
<rect x="1294" y="608" width="44" height="4.4" fill="url(#t115)"/>
<rect x="1293" y="612" width="36" height="4.4" fill="url(#t116)"/>
<rect x="1293" y="616" width="27" height="4.4" fill="url(#t117)"/>
<rect x="1292" y="620" width="19" height="4.4" fill="url(#t118)"/>
<rect x="1292" y="624" width="10" height="12.4" fill="#0000ff"/>
</g></g>
<line x1="1162.6" y1="53.7" x2="1162.6" y2="670.8" stroke="#a8a8a8" stroke-width="1.8"/>
<line x1="1161.7" y1="54.6" x2="1692.5" y2="54.6" stroke="#a8a8a8" stroke-width="1.8"/>
<line x1="1161.7" y1="669.8" x2="1908.9" y2="669.8" stroke="#a8a8a8" stroke-width="2.2"/>
<line x1="1908" y1="283" x2="1908" y2="670.8" stroke="#a8a8a8" stroke-width="1.8"/>
<line x1="1155.6" y1="670" x2="1162.6" y2="670" stroke="#dcdcdc" stroke-width="1.6"/>
<text x="1155" y="677.792" font-size="18" fill="#dcdcdc" text-anchor="end" textLength="9" lengthAdjust="spacingAndGlyphs" stroke="#dcdcdc" stroke-width="0.3">0</text>
<line x1="1161.8" y1="669.8" x2="1161.8" y2="677.3" stroke="#dcdcdc" stroke-width="1.8"/>
<text x="1162.1" y="696.792" font-size="18" fill="#dcdcdc" text-anchor="middle" textLength="9" lengthAdjust="spacingAndGlyphs" stroke="#dcdcdc" stroke-width="0.3">0</text>
<line x1="1155.6" y1="596.74" x2="1162.6" y2="596.74" stroke="#dcdcdc" stroke-width="1.6"/>
<text x="1155" y="604.532" font-size="18" fill="#dcdcdc" text-anchor="end" textLength="22.6" lengthAdjust="spacingAndGlyphs" stroke="#dcdcdc" stroke-width="0.3">0,1</text>
<line x1="1250.58" y1="669.8" x2="1250.58" y2="677.3" stroke="#dcdcdc" stroke-width="1.8"/>
<text x="1250.58" y="696.792" font-size="18" fill="#dcdcdc" text-anchor="middle" textLength="22.6" lengthAdjust="spacingAndGlyphs" stroke="#dcdcdc" stroke-width="0.3">0,1</text>
<line x1="1155.6" y1="523.48" x2="1162.6" y2="523.48" stroke="#dcdcdc" stroke-width="1.6"/>
<text x="1155" y="531.272" font-size="18" fill="#dcdcdc" text-anchor="end" textLength="22.6" lengthAdjust="spacingAndGlyphs" stroke="#dcdcdc" stroke-width="0.3">0,2</text>
<line x1="1339.36" y1="669.8" x2="1339.36" y2="677.3" stroke="#dcdcdc" stroke-width="1.8"/>
<text x="1339.36" y="696.792" font-size="18" fill="#dcdcdc" text-anchor="middle" textLength="22.6" lengthAdjust="spacingAndGlyphs" stroke="#dcdcdc" stroke-width="0.3">0,2</text>
<line x1="1155.6" y1="450.22" x2="1162.6" y2="450.22" stroke="#dcdcdc" stroke-width="1.6"/>
<text x="1155" y="458.012" font-size="18" fill="#dcdcdc" text-anchor="end" textLength="22.6" lengthAdjust="spacingAndGlyphs" stroke="#dcdcdc" stroke-width="0.3">0,3</text>
<line x1="1428.14" y1="669.8" x2="1428.14" y2="677.3" stroke="#dcdcdc" stroke-width="1.8"/>
<text x="1428.14" y="696.792" font-size="18" fill="#dcdcdc" text-anchor="middle" textLength="22.6" lengthAdjust="spacingAndGlyphs" stroke="#dcdcdc" stroke-width="0.3">0,3</text>
<line x1="1155.6" y1="376.96" x2="1162.6" y2="376.96" stroke="#dcdcdc" stroke-width="1.6"/>
<text x="1155" y="384.752" font-size="18" fill="#dcdcdc" text-anchor="end" textLength="22.6" lengthAdjust="spacingAndGlyphs" stroke="#dcdcdc" stroke-width="0.3">0,4</text>
<line x1="1516.92" y1="669.8" x2="1516.92" y2="677.3" stroke="#dcdcdc" stroke-width="1.8"/>
<text x="1516.92" y="696.792" font-size="18" fill="#dcdcdc" text-anchor="middle" textLength="22.6" lengthAdjust="spacingAndGlyphs" stroke="#dcdcdc" stroke-width="0.3">0,4</text>
<line x1="1155.6" y1="303.7" x2="1162.6" y2="303.7" stroke="#dcdcdc" stroke-width="1.6"/>
<text x="1155" y="311.492" font-size="18" fill="#dcdcdc" text-anchor="end" textLength="22.6" lengthAdjust="spacingAndGlyphs" stroke="#dcdcdc" stroke-width="0.3">0,5</text>
<line x1="1605.7" y1="669.8" x2="1605.7" y2="677.3" stroke="#dcdcdc" stroke-width="1.8"/>
<text x="1605.7" y="696.792" font-size="18" fill="#dcdcdc" text-anchor="middle" textLength="22.6" lengthAdjust="spacingAndGlyphs" stroke="#dcdcdc" stroke-width="0.3">0,5</text>
<line x1="1155.6" y1="230.44" x2="1162.6" y2="230.44" stroke="#dcdcdc" stroke-width="1.6"/>
<text x="1155" y="238.232" font-size="18" fill="#dcdcdc" text-anchor="end" textLength="22.6" lengthAdjust="spacingAndGlyphs" stroke="#dcdcdc" stroke-width="0.3">0,6</text>
<line x1="1694.48" y1="669.8" x2="1694.48" y2="677.3" stroke="#dcdcdc" stroke-width="1.8"/>
<text x="1694.48" y="696.792" font-size="18" fill="#dcdcdc" text-anchor="middle" textLength="22.6" lengthAdjust="spacingAndGlyphs" stroke="#dcdcdc" stroke-width="0.3">0,6</text>
<line x1="1155.6" y1="157.18" x2="1162.6" y2="157.18" stroke="#dcdcdc" stroke-width="1.6"/>
<text x="1155" y="164.972" font-size="18" fill="#dcdcdc" text-anchor="end" textLength="22.6" lengthAdjust="spacingAndGlyphs" stroke="#dcdcdc" stroke-width="0.3">0,7</text>
<line x1="1783.26" y1="669.8" x2="1783.26" y2="677.3" stroke="#dcdcdc" stroke-width="1.8"/>
<text x="1783.26" y="696.792" font-size="18" fill="#dcdcdc" text-anchor="middle" textLength="22.6" lengthAdjust="spacingAndGlyphs" stroke="#dcdcdc" stroke-width="0.3">0,7</text>
<line x1="1155.6" y1="83.92" x2="1162.6" y2="83.92" stroke="#dcdcdc" stroke-width="1.6"/>
<text x="1155" y="91.712" font-size="18" fill="#dcdcdc" text-anchor="end" textLength="22.6" lengthAdjust="spacingAndGlyphs" stroke="#dcdcdc" stroke-width="0.3">0,8</text>
<line x1="1872.04" y1="669.8" x2="1872.04" y2="677.3" stroke="#dcdcdc" stroke-width="1.8"/>
<text x="1872.04" y="696.792" font-size="18" fill="#dcdcdc" text-anchor="middle" textLength="22.6" lengthAdjust="spacingAndGlyphs" stroke="#dcdcdc" stroke-width="0.3">0,8</text>
<rect x="1488.7" y="419.5" width="16.6" height="16.6" fill="none" stroke="#fff" stroke-width="1.7"/>
<rect x="1546.8" y="419.4" width="16.6" height="16.6" fill="none" stroke="#fff" stroke-width="1.7"/>
<rect x="1605.0" y="419.2" width="16.6" height="16.6" fill="none" stroke="#fff" stroke-width="1.7"/>
<rect x="1663.1" y="419.1" width="16.6" height="16.6" fill="none" stroke="#fff" stroke-width="1.7"/>
<rect x="1721.2" y="418.9" width="16.6" height="16.6" fill="none" stroke="#fff" stroke-width="1.7"/>
<rect x="1412.4" y="363.9" width="16.6" height="16.6" fill="none" stroke="#fff" stroke-width="1.7"/>
<rect x="1394.1" y="308.0" width="16.6" height="16.6" fill="none" stroke="#fff" stroke-width="1.7"/>
<rect x="1375.9" y="252.2" width="16.6" height="16.6" fill="none" stroke="#fff" stroke-width="1.7"/>
<rect x="1357.7" y="196.4" width="16.6" height="16.6" fill="none" stroke="#fff" stroke-width="1.7"/>
<rect x="1339.4" y="140.6" width="16.6" height="16.6" fill="none" stroke="#fff" stroke-width="1.7"/>
<rect x="1401.7" y="459.1" width="16.6" height="16.6" fill="none" stroke="#fff" stroke-width="1.7"/>
<rect x="1372.8" y="498.5" width="16.6" height="16.6" fill="none" stroke="#fff" stroke-width="1.7"/>
<rect x="1343.9" y="537.9" width="16.6" height="16.6" fill="none" stroke="#fff" stroke-width="1.7"/>
<rect x="1315.1" y="577.3" width="16.6" height="16.6" fill="none" stroke="#fff" stroke-width="1.7"/>
<rect x="1286.2" y="616.7" width="16.6" height="16.6" fill="none" stroke="#fff" stroke-width="1.7"/>
<rect x="1406.1" y="419.7" width="16.6" height="16.6" fill="none" stroke="#fff" stroke-width="1.7"/>
<rect x="1381.6" y="419.8" width="16.6" height="16.6" fill="none" stroke="#fff" stroke-width="1.7"/>
<rect x="1357.2" y="419.9" width="16.6" height="16.6" fill="none" stroke="#fff" stroke-width="1.7"/>
<rect x="1332.7" y="419.9" width="16.6" height="16.6" fill="none" stroke="#fff" stroke-width="1.7"/>
<rect x="1308.2" y="420.0" width="16.6" height="16.6" fill="none" stroke="#fff" stroke-width="1.7"/>
<rect x="1438.1" y="442.5" width="16.6" height="16.6" fill="none" stroke="#fff" stroke-width="1.7"/>
<rect x="1445.6" y="465.4" width="16.6" height="16.6" fill="none" stroke="#fff" stroke-width="1.7"/>
<rect x="1453.0" y="488.3" width="16.6" height="16.6" fill="none" stroke="#fff" stroke-width="1.7"/>
<rect x="1460.5" y="511.2" width="16.6" height="16.6" fill="none" stroke="#fff" stroke-width="1.7"/>
<rect x="1468.0" y="534.0" width="16.6" height="16.6" fill="none" stroke="#fff" stroke-width="1.7"/>
<rect x="1450.9" y="392.0" width="16.6" height="16.6" fill="none" stroke="#fff" stroke-width="1.7"/>
<rect x="1471.2" y="364.3" width="16.6" height="16.6" fill="none" stroke="#fff" stroke-width="1.7"/>
<rect x="1491.6" y="336.6" width="16.6" height="16.6" fill="none" stroke="#fff" stroke-width="1.7"/>
<rect x="1511.9" y="308.8" width="16.6" height="16.6" fill="none" stroke="#fff" stroke-width="1.7"/>
<rect x="1532.2" y="281.1" width="16.6" height="16.6" fill="none" stroke="#fff" stroke-width="1.7"/>
<rect x="1430.7" y="419.8" width="16.2" height="16.2" fill="none" stroke="#000" stroke-width="2.4"/>
<circle cx="1418.7" cy="366.4" r="5.3" fill="#98b896" stroke="#0a0a0a" stroke-width="1.5"/>
<circle cx="1399.8" cy="305.4" r="5.3" fill="#84b67e" stroke="#0a0a0a" stroke-width="1.5"/>
<circle cx="1379.8" cy="247.6" r="5.3" fill="#6eb466" stroke="#0a0a0a" stroke-width="1.5"/>
<circle cx="1362.3" cy="196.2" r="5.3" fill="#5cb254" stroke="#0a0a0a" stroke-width="1.5"/>
<circle cx="1346.5" cy="151.0" r="5.3" fill="#12a812" stroke="#0a0a0a" stroke-width="1.5"/>
<circle cx="1462.5" cy="401.4" r="5.3" fill="#bcbca2" stroke="#0a0a0a" stroke-width="1.5"/>
<circle cx="1485.9" cy="369.8" r="5.3" fill="#bcbc86" stroke="#0a0a0a" stroke-width="1.5"/>
<circle cx="1509.3" cy="340.2" r="5.3" fill="#bcbc6a" stroke="#0a0a0a" stroke-width="1.5"/>
<circle cx="1527.9" cy="315.0" r="5.3" fill="#bcbc4c" stroke="#0a0a0a" stroke-width="1.5"/>
<circle cx="1545.7" cy="292.2" r="5.3" fill="#bcbc10" stroke="#0a0a0a" stroke-width="1.5"/>
<circle cx="1412.2" cy="431.5" r="5.3" fill="#a8bab6" stroke="#0a0a0a" stroke-width="1.5"/>
<circle cx="1384.0" cy="431.5" r="5.3" fill="#98bcb8" stroke="#0a0a0a" stroke-width="1.5"/>
<circle cx="1360.6" cy="431.5" r="5.3" fill="#86bcb8" stroke="#0a0a0a" stroke-width="1.5"/>
<circle cx="1335.4" cy="431.5" r="5.3" fill="#6cbcbc" stroke="#0a0a0a" stroke-width="1.5"/>
<circle cx="1313.4" cy="431.5" r="5.3" fill="#22bcbc" stroke="#0a0a0a" stroke-width="1.5"/>
<circle cx="1406.0" cy="477.5" r="5.3" fill="#a4a4be" stroke="#0a0a0a" stroke-width="1.5"/>
<circle cx="1373.3" cy="523.8" r="5.3" fill="#8c8cbc" stroke="#0a0a0a" stroke-width="1.5"/>
<circle cx="1341.9" cy="563.3" r="5.3" fill="#7070ba" stroke="#0a0a0a" stroke-width="1.5"/>
<circle cx="1317.1" cy="594.9" r="5.3" fill="#5252bc" stroke="#0a0a0a" stroke-width="1.5"/>
<circle cx="1293.4" cy="626.5" r="5.3" fill="#0808c8" stroke="#0a0a0a" stroke-width="1.5"/>
<circle cx="1448.1" cy="459.2" r="5.3" fill="#bca6b8" stroke="#0a0a0a" stroke-width="1.5"/>
<circle cx="1457.9" cy="486.0" r="5.3" fill="#be90ba" stroke="#0a0a0a" stroke-width="1.5"/>
<circle cx="1463.9" cy="506.8" r="5.3" fill="#be7cba" stroke="#0a0a0a" stroke-width="1.5"/>
<circle cx="1472.0" cy="528.6" r="5.3" fill="#be5cba" stroke="#0a0a0a" stroke-width="1.5"/>
<circle cx="1478.3" cy="548.6" r="5.3" fill="#be16be" stroke="#0a0a0a" stroke-width="1.5"/>
<circle cx="1507.9" cy="434.3" r="5.3" fill="#bc9a9a" stroke="#0a0a0a" stroke-width="1.5"/>
<circle cx="1578.5" cy="434.3" r="5.3" fill="#c08080" stroke="#0a0a0a" stroke-width="1.5"/>
<circle cx="1641.0" cy="434.8" r="5.3" fill="#c46868" stroke="#0a0a0a" stroke-width="1.5"/>
<circle cx="1694.5" cy="435.6" r="5.3" fill="#c84a4a" stroke="#0a0a0a" stroke-width="1.5"/>
<circle cx="1743.0" cy="436.0" r="5.3" fill="#d20a0a" stroke="#0a0a0a" stroke-width="1.5"/>
<circle cx="1413.9" cy="487.7" r="5.6" fill="#000" stroke="#0a0a0a" stroke-width="1.5"/>
<circle cx="1435.9" cy="432.9" r="5.2" fill="#fff" stroke="#0a0a0a" stroke-width="1.5"/>
<rect x="1692.6" y="50" width="219.3" height="232.4" fill="#323232"/>
<g clip-path="url(#ci)"><g filter="url(#vb)">
<rect x="1694" y="45" width="218" height="12.4" fill="url(#i0)"/>
<rect x="1694" y="57" width="218" height="4.4" fill="url(#i1)"/>
<rect x="1694" y="61" width="218" height="4.4" fill="url(#i2)"/>
<rect x="1694" y="65" width="218" height="4.4" fill="url(#i3)"/>
<rect x="1694" y="69" width="218" height="4.4" fill="url(#i4)"/>
<rect x="1694" y="73" width="218" height="4.4" fill="url(#i5)"/>
<rect x="1694" y="77" width="218" height="4.4" fill="url(#i6)"/>
<rect x="1694" y="81" width="218" height="4.4" fill="url(#i7)"/>
<rect x="1694" y="85" width="218" height="4.4" fill="url(#i8)"/>
<rect x="1694" y="89" width="218" height="4.4" fill="url(#i9)"/>
<rect x="1694" y="93" width="218" height="4.4" fill="url(#i10)"/>
<rect x="1694" y="97" width="218" height="4.4" fill="url(#i11)"/>
<rect x="1694" y="101" width="218" height="4.4" fill="url(#i12)"/>
<rect x="1694" y="105" width="218" height="4.4" fill="url(#i13)"/>
<rect x="1694" y="109" width="218" height="4.4" fill="url(#i14)"/>
<rect x="1694" y="113" width="218" height="4.4" fill="url(#i15)"/>
<rect x="1694" y="117" width="218" height="4.4" fill="url(#i16)"/>
<rect x="1694" y="121" width="218" height="4.4" fill="url(#i17)"/>
<rect x="1694" y="125" width="218" height="4.4" fill="url(#i18)"/>
<rect x="1694" y="129" width="218" height="4.4" fill="url(#i19)"/>
<rect x="1694" y="133" width="218" height="4.4" fill="url(#i20)"/>
<rect x="1694" y="137" width="218" height="4.4" fill="url(#i21)"/>
<rect x="1694" y="141" width="218" height="4.4" fill="url(#i22)"/>
<rect x="1694" y="145" width="218" height="4.4" fill="url(#i23)"/>
<rect x="1694" y="149" width="218" height="4.4" fill="url(#i24)"/>
<rect x="1694" y="153" width="218" height="4.4" fill="url(#i25)"/>
<rect x="1694" y="157" width="218" height="4.4" fill="url(#i26)"/>
<rect x="1694" y="161" width="218" height="4.4" fill="url(#i27)"/>
<rect x="1694" y="165" width="218" height="4.4" fill="url(#i28)"/>
<rect x="1694" y="169" width="218" height="4.4" fill="url(#i29)"/>
<rect x="1694" y="173" width="218" height="4.4" fill="url(#i30)"/>
<rect x="1694" y="177" width="218" height="4.4" fill="url(#i31)"/>
<rect x="1694" y="181" width="218" height="4.4" fill="url(#i32)"/>
<rect x="1694" y="185" width="218" height="4.4" fill="url(#i33)"/>
<rect x="1694" y="189" width="218" height="4.4" fill="url(#i34)"/>
<rect x="1694" y="193" width="218" height="4.4" fill="url(#i35)"/>
<rect x="1694" y="197" width="218" height="4.4" fill="url(#i36)"/>
<rect x="1694" y="201" width="218" height="4.4" fill="url(#i37)"/>
<rect x="1694" y="205" width="218" height="4.4" fill="url(#i38)"/>
<rect x="1694" y="209" width="218" height="4.4" fill="url(#i39)"/>
<rect x="1694" y="213" width="218" height="4.4" fill="url(#i40)"/>
<rect x="1694" y="217" width="218" height="4.4" fill="url(#i41)"/>
<rect x="1694" y="221" width="218" height="4.4" fill="url(#i42)"/>
<rect x="1694" y="225" width="218" height="4.4" fill="url(#i43)"/>
<rect x="1694" y="229" width="218" height="4.4" fill="url(#i44)"/>
<rect x="1694" y="233" width="218" height="4.4" fill="url(#i45)"/>
<rect x="1694" y="237" width="218" height="4.4" fill="url(#i46)"/>
<rect x="1694" y="241" width="218" height="4.4" fill="url(#i47)"/>
<rect x="1694" y="245" width="218" height="4.4" fill="url(#i48)"/>
<rect x="1694" y="249" width="218" height="4.4" fill="url(#i49)"/>
<rect x="1694" y="253" width="218" height="4.4" fill="url(#i50)"/>
<rect x="1694" y="257" width="218" height="4.4" fill="url(#i51)"/>
<rect x="1694" y="261" width="218" height="4.4" fill="url(#i52)"/>
<rect x="1694" y="265" width="218" height="4.4" fill="url(#i53)"/>
<rect x="1694" y="269" width="218" height="4.4" fill="url(#i54)"/>
<rect x="1694" y="273" width="218" height="4.4" fill="url(#i55)"/>
<rect x="1694" y="277" width="218" height="12.4" fill="url(#i56)"/>
</g></g>
<g clip-path="url(#cj)"><g filter="url(#vb)">
<rect x="1694" y="45" width="218" height="12.4" fill="url(#j0)"/>
<rect x="1694" y="57" width="218" height="4.4" fill="url(#j1)"/>
<rect x="1694" y="61" width="218" height="4.4" fill="url(#j2)"/>
<rect x="1694" y="65" width="218" height="4.4" fill="url(#j3)"/>
<rect x="1694" y="69" width="218" height="4.4" fill="url(#j4)"/>
<rect x="1694" y="73" width="218" height="4.4" fill="url(#j5)"/>
<rect x="1694" y="77" width="218" height="4.4" fill="url(#j6)"/>
<rect x="1694" y="81" width="218" height="4.4" fill="url(#j7)"/>
<rect x="1694" y="85" width="218" height="4.4" fill="url(#j8)"/>
<rect x="1694" y="89" width="218" height="4.4" fill="url(#j9)"/>
<rect x="1694" y="93" width="218" height="4.4" fill="url(#j10)"/>
<rect x="1694" y="97" width="218" height="4.4" fill="url(#j11)"/>
<rect x="1694" y="101" width="218" height="4.4" fill="url(#j12)"/>
<rect x="1694" y="105" width="218" height="4.4" fill="url(#j13)"/>
<rect x="1694" y="109" width="218" height="4.4" fill="url(#j14)"/>
<rect x="1694" y="113" width="218" height="4.4" fill="url(#j15)"/>
<rect x="1694" y="117" width="218" height="4.4" fill="url(#j16)"/>
<rect x="1694" y="121" width="218" height="4.4" fill="url(#j17)"/>
<rect x="1694" y="125" width="218" height="4.4" fill="url(#j18)"/>
<rect x="1694" y="129" width="218" height="4.4" fill="url(#j19)"/>
<rect x="1694" y="133" width="218" height="4.4" fill="url(#j20)"/>
<rect x="1694" y="137" width="218" height="4.4" fill="url(#j21)"/>
<rect x="1694" y="141" width="218" height="4.4" fill="url(#j22)"/>
<rect x="1694" y="145" width="218" height="4.4" fill="url(#j23)"/>
<rect x="1694" y="149" width="218" height="4.4" fill="url(#j24)"/>
<rect x="1694" y="153" width="218" height="4.4" fill="url(#j25)"/>
<rect x="1694" y="157" width="218" height="4.4" fill="url(#j26)"/>
<rect x="1694" y="161" width="218" height="4.4" fill="url(#j27)"/>
<rect x="1694" y="165" width="218" height="4.4" fill="url(#j28)"/>
<rect x="1694" y="169" width="218" height="4.4" fill="url(#j29)"/>
<rect x="1694" y="173" width="218" height="4.4" fill="url(#j30)"/>
<rect x="1694" y="177" width="218" height="4.4" fill="url(#j31)"/>
<rect x="1694" y="181" width="218" height="4.4" fill="url(#j32)"/>
<rect x="1694" y="185" width="218" height="4.4" fill="url(#j33)"/>
<rect x="1694" y="189" width="218" height="4.4" fill="url(#j34)"/>
<rect x="1694" y="193" width="218" height="4.4" fill="url(#j35)"/>
<rect x="1694" y="197" width="218" height="4.4" fill="url(#j36)"/>
<rect x="1694" y="201" width="218" height="4.4" fill="url(#j37)"/>
<rect x="1694" y="205" width="218" height="4.4" fill="url(#j38)"/>
<rect x="1694" y="209" width="218" height="4.4" fill="url(#j39)"/>
<rect x="1694" y="213" width="218" height="4.4" fill="url(#j40)"/>
<rect x="1694" y="217" width="218" height="4.4" fill="url(#j41)"/>
<rect x="1694" y="221" width="218" height="4.4" fill="url(#j42)"/>
<rect x="1694" y="225" width="218" height="4.4" fill="url(#j43)"/>
<rect x="1694" y="229" width="218" height="4.4" fill="url(#j44)"/>
<rect x="1694" y="233" width="218" height="4.4" fill="url(#j45)"/>
<rect x="1694" y="237" width="218" height="4.4" fill="url(#j46)"/>
<rect x="1694" y="241" width="218" height="4.4" fill="url(#j47)"/>
<rect x="1694" y="245" width="218" height="4.4" fill="url(#j48)"/>
<rect x="1694" y="249" width="218" height="4.4" fill="url(#j49)"/>
<rect x="1694" y="253" width="218" height="4.4" fill="url(#j50)"/>
<rect x="1694" y="257" width="218" height="4.4" fill="url(#j51)"/>
<rect x="1694" y="261" width="218" height="4.4" fill="url(#j52)"/>
<rect x="1694" y="265" width="218" height="4.4" fill="url(#j53)"/>
<rect x="1694" y="269" width="218" height="4.4" fill="url(#j54)"/>
<rect x="1694" y="273" width="218" height="4.4" fill="url(#j55)"/>
<rect x="1694" y="277" width="218" height="12.4" fill="url(#j56)"/>
</g></g>
<rect x="1696.5" y="54.9" width="212.1" height="223.3" fill="none" stroke="#8e8e8e" stroke-width="1.8"/>
<rect x="1793.9" y="158.1" width="17" height="17" fill="none" stroke="#fff" stroke-width="1.5"/>
<circle cx="1824.5" cy="186.4" r="5.3" fill="#b4b414" stroke="#0a0a0a" stroke-width="1.5"/>
<rect x="0" y="994.8" width="1920" height="68.2" fill="url(#v38)"/>
<rect x="-4" y="995" width="54.2" height="76" rx="5" fill="url(#v39)"/>
<circle cx="25.3" cy="1004.4" r="8.2" fill="url(#v41)"/>
<path d="M20.6 1006.6L25.3 1001.4L30 1006.6Z" fill="#2c2c2c"/>
<rect x="5.6" y="1023.6" width="39.4" height="34.2" rx="4" fill="#ffff00" stroke="#b4b43c" stroke-width="1"/>
<rect x="57.2" y="995" width="167.2" height="76" rx="5" fill="url(#v39)"/>
<rect x="62.4" y="1000.6" width="157" height="40.8" rx="4" fill="#c3c4a7" stroke="#9c9c84" stroke-width="1.2"/>
<path d="M63.6 1040V1004.4Q63.6 1001.8 66.2 1001.8H215.6" fill="none" stroke="#00000030" stroke-width="1.2"/>
<text x="141" y="1057.9" font-size="11.5" fill="#3e3e3e" text-anchor="middle" textLength="22.6" lengthAdjust="spacingAndGlyphs" font-weight="bold">20%</text>
<rect x="227.2" y="995" width="167.2" height="76" rx="5" fill="url(#v39)"/>
<rect x="232.4" y="1000.6" width="157" height="40.8" rx="4" fill="#c4c388" stroke="#9c9c84" stroke-width="1.2"/>
<path d="M233.6 1040V1004.4Q233.6 1001.8 236.2 1001.8H385.6" fill="none" stroke="#00000030" stroke-width="1.2"/>
<text x="311" y="1057.9" font-size="11.5" fill="#3e3e3e" text-anchor="middle" textLength="22.6" lengthAdjust="spacingAndGlyphs" font-weight="bold">40%</text>
<rect x="397.2" y="995" width="167.2" height="76" rx="5" fill="url(#v39)"/>
<rect x="402.4" y="1000.6" width="157" height="40.8" rx="4" fill="#c4c366" stroke="#9c9c84" stroke-width="1.2"/>
<path d="M403.6 1040V1004.4Q403.6 1001.8 406.2 1001.8H555.6" fill="none" stroke="#00000030" stroke-width="1.2"/>
<text x="481" y="1057.9" font-size="11.5" fill="#3e3e3e" text-anchor="middle" textLength="22.6" lengthAdjust="spacingAndGlyphs" font-weight="bold">60%</text>
<rect x="567.2" y="995" width="167.2" height="76" rx="5" fill="url(#v39)"/>
<rect x="572.4" y="1000.6" width="157" height="40.8" rx="4" fill="#c4c13f" stroke="#9c9c84" stroke-width="1.2"/>
<path d="M573.6 1040V1004.4Q573.6 1001.8 576.2 1001.8H725.6" fill="none" stroke="#00000030" stroke-width="1.2"/>
<text x="651" y="1057.9" font-size="11.5" fill="#3e3e3e" text-anchor="middle" textLength="22.6" lengthAdjust="spacingAndGlyphs" font-weight="bold">80%</text>
<rect x="737.2" y="995" width="167.2" height="76" rx="5" fill="url(#v40)"/>
<rect x="742.4" y="1000.6" width="157" height="40.8" rx="4" fill="#c8c400" stroke="#a2a26a" stroke-width="1.2"/>
<path d="M743.6 1040V1004.4Q743.6 1001.8 746.2 1001.8H895.6" fill="none" stroke="#00000030" stroke-width="1.2"/>
<text x="821" y="1057.9" font-size="11.5" fill="#f2f2f2" text-anchor="middle" textLength="29.4" lengthAdjust="spacingAndGlyphs" font-weight="bold">100%</text>
<rect x="1560" y="995" width="53.8" height="76" rx="4.5" fill="url(#v39)"/>
<line x1="1560" y1="1015.1" x2="1613.8" y2="1015.1" stroke="#555" stroke-width="1.2"/>
<line x1="1560" y1="1016.2" x2="1613.8" y2="1016.2" stroke="#b0b0b0" stroke-width="1"/>
<circle cx="1586.8" cy="1004.8" r="8.2" fill="url(#v41)"/>
<path d="M1582.2 1006.8L1586.8 1001.6L1591.4 1006.8Z" fill="#2c2c2c"/>
<rect x="1568.2" y="1020.6" width="37.2" height="37.6" rx="6" fill="none" stroke="#c2c2c2" stroke-width="1"/>
<rect x="1570.3" y="1022.7" width="33" height="33.4" rx="4" fill="url(#v42)" stroke="#1c1c1c" stroke-width="2.8"/>
<rect x="1579.2" y="1032" width="15.3" height="14.9" fill="url(#v43)"/>
<path d="M1615.2 1028.2V998Q1615.2 995 1618.2 995H1817.3V1028.2Z" fill="url(#v44)"/>
<path d="M1817.3 995H1916Q1920 995 1920 999V1028.2H1817.3Z" fill="url(#v45)"/>
<line x1="1666.6" y1="995" x2="1666.6" y2="1028.2" stroke="#3c3c3c" stroke-width="1.4"/>
<line x1="1717.2" y1="995" x2="1717.2" y2="1028.2" stroke="#3c3c3c" stroke-width="1.4"/>
<line x1="1767.5" y1="995" x2="1767.5" y2="1028.2" stroke="#3c3c3c" stroke-width="1.4"/>
<line x1="1868" y1="995" x2="1868" y2="1028.2" stroke="#3a3a3a" stroke-width="1.2"/>
<line x1="1615.2" y1="1028.8" x2="1920" y2="1028.8" stroke="#3a3a3a" stroke-width="1.6"/>
<circle cx="1640.5" cy="1011.6" r="11" fill="url(#v47)"/>
<circle cx="1691.6" cy="1011.6" r="11" fill="url(#v47)"/>
<circle cx="1742.3" cy="1011.6" r="11" fill="url(#v47)"/>
<circle cx="1792.6" cy="1011.6" r="11" fill="url(#v47)"/>
<circle cx="1842.9" cy="1011.6" r="11" fill="url(#v46)"/>
<circle cx="1893.8" cy="1011.6" r="11" fill="url(#v46)"/>
<rect x="1636.2" y="1007.3" width="8.8" height="8.7" fill="#3a3a3a"/>
<path d="M1688.4 1006.6L1698 1011.9L1688.4 1017.4Z" fill="#2e2e2e"/>
<path d="M1739 1006.4H1736.4V1017H1739M1745.6 1006.4H1748.2V1017H1745.6" fill="none" stroke="#303030" stroke-width="1.7"/>
<circle cx="1740.6" cy="1011.7" r="0.9" fill="#303030"/><circle cx="1744" cy="1011.7" r="0.9" fill="#303030"/>
<path d="M1792.6 1011.6C1790.6 1008.4 1785.6 1008.2 1785.6 1011.6C1785.6 1015 1790.6 1014.8 1792.6 1011.6C1794.6 1008.4 1799.6 1008.2 1799.6 1011.6C1799.6 1015 1794.6 1014.8 1792.6 1011.6Z" fill="none" stroke="#3a3a3a" stroke-width="1.5"/>
<path d="M1836.6 1010.6A6.4 6.4 0 0 1 1848 1007.4M1849.2 1012.6A6.4 6.4 0 0 1 1837.8 1015.8" fill="none" stroke="#262626" stroke-width="2.6"/>
<path d="M1849.6 1004.2V1009.6H1844.4ZM1836.2 1019V1013.6H1841.4Z" fill="#262626"/>
<path d="M1615.2 1070V1033.6Q1615.2 1029.8 1619 1029.8H1767V1070Z" fill="url(#v48)"/>
<path d="M1768.2 1029.8H1915Q1920 1029.8 1920 1034.8V1070H1768.2Z" fill="url(#v48)"/>
<line x1="1767.6" y1="1029.8" x2="1767.6" y2="1063" stroke="#3a3a3a" stroke-width="1.3"/>
<circle cx="1649.5" cy="1046.4" r="10.6" fill="url(#v49)"/>
<circle cx="1887.4" cy="1046.4" r="10.6" fill="url(#v49)"/>
<path d="M1648.6 1041.4L1644.6 1046.4L1648.6 1051.4M1653.6 1041.4L1649.6 1046.4L1653.6 1051.4" fill="none" stroke="#3a3a3a" stroke-width="1.8"/>
<path d="M1883.4 1041.4L1887.4 1046.4L1883.4 1051.4M1888.4 1041.4L1892.4 1046.4L1888.4 1051.4" fill="none" stroke="#3a3a3a" stroke-width="1.8"/>
<text x="1679.4" y="1054.8" font-size="24.2" fill="#3c3c3c" textLength="56.2" lengthAdjust="spacingAndGlyphs" stroke="#3c3c3c" stroke-width="0.55">Back</text>
<text x="1798.6" y="1054.8" font-size="24.2" fill="#3c3c3c" textLength="57.6" lengthAdjust="spacingAndGlyphs" stroke="#3c3c3c" stroke-width="0.55">Next</text>
</svg>
</body></html>
